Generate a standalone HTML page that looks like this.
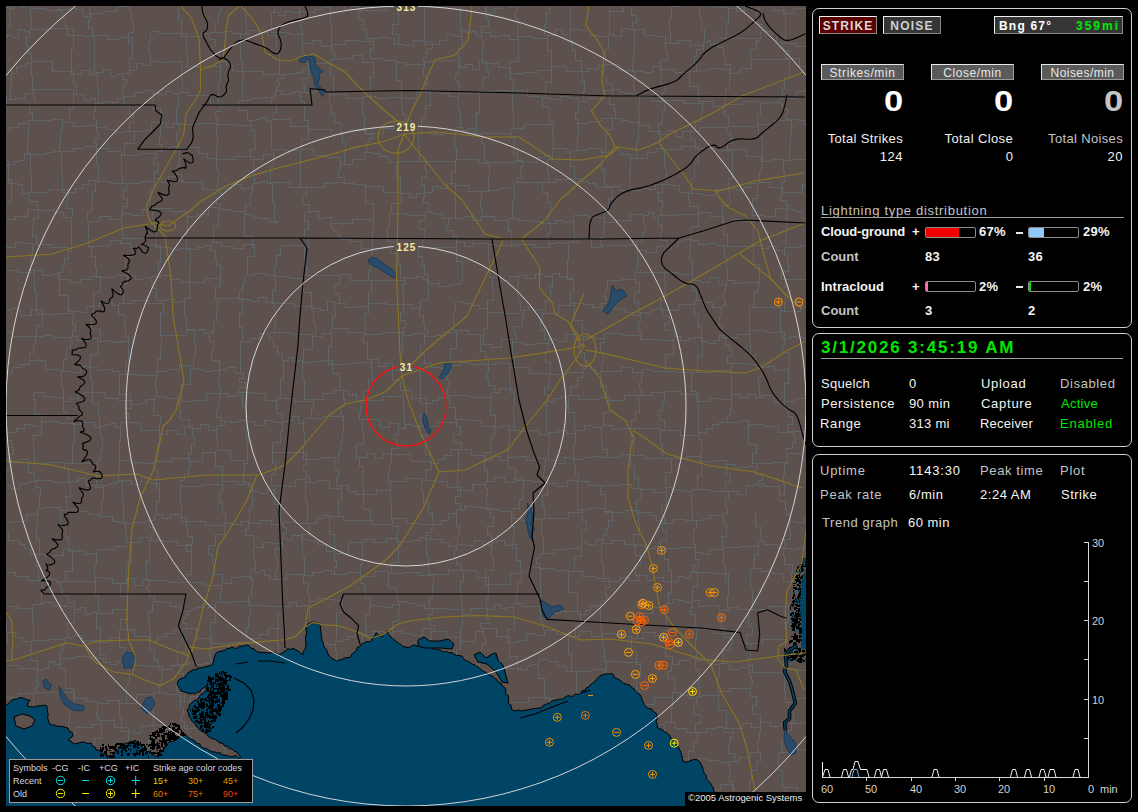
<!DOCTYPE html>
<html><head><meta charset="utf-8">
<style>
*{margin:0;padding:0;box-sizing:border-box}
html,body{width:1138px;height:812px;background:#000;overflow:hidden}
body{position:relative;font-family:"Liberation Sans",sans-serif;color:#fff}
.a{position:absolute;white-space:nowrap}
.panel{position:absolute;left:812px;width:320px;border:1px solid #cfcfcf;border-radius:7px}
.btn{position:absolute;height:18px;border:1px solid;border-color:#f0f0f0 #8a8a8a #8a8a8a #f0f0f0;font-weight:bold;font-size:12px;line-height:16px;padding-top:1px;text-align:center;color:#d8d8d8;white-space:nowrap}
.hdr{position:absolute;top:64px;width:83px;height:16px;background:#5a5a5a;border:1px solid;border-color:#e8e8e8 #999 #999 #e8e8e8;font-size:12px;line-height:14px;padding-top:1px;text-align:center;color:#e8e8e8;white-space:nowrap}
.big{position:absolute;top:83px;font-weight:bold;font-size:30px;line-height:36px;transform:scaleX(1.15);transform-origin:0 0;color:#fff}
.tl{position:absolute;top:131px;width:110px;text-align:right;font-size:13px;line-height:15px;color:#f0f0f0;white-space:nowrap}
.tv{position:absolute;top:149px;width:83px;text-align:right;font-size:13px;line-height:15px;color:#f0f0f0}
.lb{position:absolute;font-size:13px;line-height:15px;white-space:nowrap}
.b{font-weight:bold}
.bar{position:absolute;width:51px;height:11px;border:1px solid #8c8c8c;border-radius:2px;overflow:hidden}
.bar i{position:absolute;left:0;top:0;bottom:0}
.lg{font-size:9px;line-height:12px;white-space:nowrap}
.g{color:#c4c4c4}
.w{color:#f4f4f4}
.grn{color:#00e800}
</style></head>
<body>
<svg class="a" style="left:6px;top:6px" width="800" height="800" viewBox="6 6 800 800">
<rect x="6" y="6" width="800" height="800" fill="#5d514d"/>
<path d="M-27 -30 -8 -30 -8 -29 12 -29 12 -27 M-27 -30 -27 -16 -27 -16 -27 -1 -22 -1 M-22 -1 -6 -1 -6 7 9 7 9 8 M-22 -1 -22 8 -25 8 -25 16 -23 16 -23 25 -26 25 -26 34 -23 34 M-23 34 -8 34 -8 36 7 36 7 35 M-23 34 -23 45 -27 45 -27 55 -30 55 -30 66 -31 66 M-31 66 -17 66 -17 65 -3 65 -3 68 11 68 11 73 M-31 66 -31 73 -31 73 -31 80 -28 80 -28 88 -31 88 -31 95 -31 95 M-31 95 -19 95 -19 96 -6 96 -6 95 6 95 6 99 M-31 95 -31 103 -32 103 -32 111 -34 111 -34 119 -31 119 M-31 119 -21 119 -21 122 -11 122 -11 126 -1 126 -1 129 M-31 119 -31 130 -33 130 -33 140 -25 140 -25 150 -25 150 -25 161 -25 161 M-25 161 -14 161 -14 165 -3 165 -3 160 8 160 8 164 M-25 161 -25 168 -27 168 -27 175 -30 175 -30 182 -30 182 M-30 182 -10 182 -10 179 11 179 11 183 M-30 182 -30 202 -30 202 -30 223 -22 223 M-22 223 -13 223 -13 219 -5 219 -5 221 4 221 4 219 M-22 223 -22 228 -24 228 -24 234 -25 234 -25 239 -27 239 -27 244 -23 244 M-23 244 -18 244 -18 243 -12 243 -12 243 -7 243 -7 241 -2 241 -2 245 M-23 244 -23 252 -20 252 -20 261 -21 261 -21 269 -16 269 M-16 269 -8 269 -8 271 1 271 1 270 M-16 269 -16 286 -14 286 -14 303 -18 303 M-18 303 -14 303 -14 305 -10 305 -10 305 -5 305 -5 306 -1 306 -1 310 M-18 303 -18 310 -20 310 -20 316 -26 316 -26 323 -29 323 -29 330 -30 330 M-30 330 -22 330 -22 332 -15 332 -15 330 -8 330 -8 333 0 333 0 332 M-30 330 -30 344 -30 344 -30 357 -25 357 -25 371 -27 371 M-27 371 -17 371 -17 368 -6 368 -6 371 4 371 4 372 M-27 371 -27 384 -25 384 -25 397 -29 397 M-29 397 -15 397 -15 397 -1 397 -1 395 M-22 424 -15 424 -15 425 -8 425 -8 429 0 429 0 426 7 426 7 432 M-22 424 -22 432 -19 432 -19 441 -26 441 -26 449 -23 449 M-23 449 -6 449 -6 458 11 458 11 462 M-23 449 -23 460 -23 460 -23 470 -25 470 -25 481 -31 481 M-31 481 -14 481 -14 481 2 481 2 485 M-31 481 -31 490 -29 490 -29 498 -26 498 -26 506 -23 506 -23 515 -21 515 M-21 515 -8 515 -8 516 4 516 4 522 M-21 515 -21 523 -25 523 -25 531 -27 531 -27 539 -27 539 -27 547 -27 547 M-27 547 -7 547 -7 540 13 540 13 540 M-27 547 -27 554 -29 554 -29 560 -30 560 -30 566 -25 566 -25 573 -25 573 M-25 573 -18 573 -18 571 -12 571 -12 572 -6 572 -6 571 1 571 1 572 M-25 573 -25 591 -26 591 -26 609 -19 609 M-19 609 -12 609 -12 609 -5 609 -5 609 2 609 2 606 M-19 609 -19 623 -24 623 -24 637 -28 637 M-28 637 -19 637 -19 634 -10 634 -10 632 -2 632 -2 635 7 635 7 632 M-28 637 -28 649 -29 649 -29 660 -23 660 -23 672 -24 672 M-24 672 -24 679 -22 679 -22 686 -21 686 -21 693 -20 693 M-20 693 -8 693 -8 697 4 697 4 697 M-20 693 -20 706 -15 706 -15 720 -16 720 M-16 720 -9 720 -9 725 -2 725 -2 728 6 728 6 729 13 729 13 729 M-16 720 -16 740 -22 740 -22 760 -25 760 M-25 760 -17 760 -17 763 -10 763 -10 757 -2 757 -2 758 6 758 6 758 M-25 760 -25 769 -30 769 -30 777 -31 777 -31 786 -30 786 M-30 786 -10 786 -10 783 9 783 9 779 M-30 786 -30 802 -31 802 -31 819 -31 819 M-31 819 -17 819 -17 820 -2 820 -2 822 12 822 12 820 M-31 819 -31 833 -29 833 -29 847 -20 847 M12 -27 19 -27 19 -23 27 -23 27 -25 34 -25 34 -26 M12 -27 12 -10 11 -10 11 8 9 8 M9 8 14 8 14 4 20 4 20 6 25 6 25 4 30 4 30 8 M9 8 9 17 10 17 10 26 5 26 5 35 7 35 M7 35 12 35 12 37 18 37 18 29 24 29 24 31 29 31 29 29 M11 73 16 73 16 67 21 67 21 65 26 65 26 63 31 63 31 61 M11 73 11 86 10 86 10 99 6 99 M6 99 15 99 15 98 24 98 24 93 33 93 33 89 M6 99 6 106 3 106 3 114 3 114 3 122 0 122 0 129 -1 129 M-1 129 9 129 9 127 18 127 18 123 28 123 28 120 M-1 129 -1 146 2 146 2 164 8 164 M8 164 14 164 14 161 19 161 19 160 24 160 24 153 30 153 30 154 M8 164 8 174 8 174 8 183 11 183 M11 183 17 183 17 184 22 184 22 193 28 193 28 192 M11 183 11 201 5 201 5 219 4 219 M4 219 15 219 15 216 27 216 27 209 38 209 38 210 M4 219 4 228 1 228 1 236 2 236 2 245 -2 245 M-2 245 6 245 6 247 15 247 15 242 24 242 24 243 32 243 32 244 M-2 245 -2 251 -4 251 -4 258 0 258 0 264 -2 264 -2 270 1 270 M1 270 18 270 18 272 34 272 34 270 M1 270 1 283 -2 283 -2 297 1 297 1 310 -1 310 M-1 310 10 310 10 308 20 308 20 315 31 315 31 309 42 309 42 314 M-1 310 -1 316 -4 316 -4 321 -1 321 -1 326 4 326 4 332 0 332 M0 332 12 332 12 336 23 336 23 336 35 336 35 336 M0 332 0 345 3 345 3 359 1 359 1 372 4 372 M4 372 12 372 12 367 21 367 21 364 29 364 29 360 M4 372 4 380 -2 380 -2 387 3 387 3 395 -1 395 M-1 395 -1 407 -1 407 -1 420 3 420 3 432 7 432 M7 432 16 432 16 428 24 428 24 424 32 424 32 426 41 426 41 421 M7 432 7 440 11 440 11 447 13 447 13 454 8 454 8 462 11 462 M11 462 20 462 20 459 28 459 28 463 M11 462 11 470 6 470 6 477 5 477 5 485 2 485 M2 485 10 485 10 488 19 488 19 483 28 483 28 481 36 481 36 480 M2 485 2 497 2 497 2 510 0 510 0 522 4 522 M4 522 15 522 15 521 26 521 26 514 37 514 37 508 M4 522 4 531 8 531 8 540 13 540 M13 540 19 540 19 544 24 544 24 548 30 548 30 554 36 554 36 554 M1 572 15 572 15 576 28 576 28 580 42 580 42 579 M1 572 1 580 1 580 1 589 4 589 4 598 -1 598 -1 606 2 606 M2 606 17 606 17 608 32 608 32 604 M2 606 2 619 6 619 6 632 7 632 M7 632 15 632 15 637 23 637 23 641 31 641 31 640 M7 632 7 643 5 643 5 654 1 654 1 665 -2 665 M-2 665 18 665 18 668 37 668 37 670 M-2 665 -2 681 -3 681 -3 697 4 697 M4 697 18 697 18 693 33 693 33 692 M13 729 27 729 27 733 41 733 41 734 M13 729 13 744 8 744 8 758 6 758 M6 758 24 758 24 763 42 763 42 761 M6 758 6 768 8 768 8 779 9 779 M9 779 25 779 25 782 41 782 41 790 M9 779 9 789 8 789 8 800 12 800 12 810 12 810 12 820 12 820 M12 820 12 830 13 830 13 841 9 841 9 851 12 851 M34 -26 40 -26 40 -30 46 -30 46 -30 52 -30 52 -30 58 -30 58 -28 M34 -26 34 -15 34 -15 34 -3 34 -3 34 8 30 8 M30 8 46 8 46 10 62 10 62 9 M30 8 30 18 31 18 31 29 29 29 M29 29 51 29 51 28 73 28 73 35 M29 29 29 37 26 37 26 45 28 45 28 53 31 53 31 61 31 61 M31 61 52 61 52 71 73 71 73 74 M31 61 31 75 32 75 32 89 33 89 M33 89 53 89 53 89 73 89 73 94 M33 89 33 97 35 97 35 104 29 104 29 112 32 112 32 120 28 120 M28 120 39 120 39 120 51 120 51 119 62 119 62 122 M28 120 28 137 27 137 27 154 30 154 M30 154 38 154 38 154 46 154 46 152 53 152 53 151 61 151 61 151 M30 154 30 173 31 173 31 192 28 192 M28 192 48 192 48 189 68 189 68 192 M28 192 28 201 37 201 37 210 38 210 M38 210 46 210 46 210 54 210 54 212 63 212 63 217 71 217 71 216 M38 210 38 218 33 218 33 227 32 227 32 236 36 236 36 244 32 244 M32 244 50 244 50 247 68 247 68 251 M32 244 32 253 31 253 31 261 30 261 30 270 34 270 M34 270 42 270 42 275 51 275 51 274 59 274 59 279 M34 270 34 292 36 292 36 314 42 314 M42 314 58 314 58 313 73 313 73 311 M42 314 42 325 36 325 36 336 35 336 M35 336 44 336 44 335 52 335 52 337 61 337 61 337 70 337 70 336 M35 336 35 344 33 344 33 352 29 352 29 360 29 360 M29 360 45 360 45 369 61 369 61 371 M33 392 43 392 43 396 53 396 53 397 63 397 63 401 M33 392 33 399 35 399 35 406 34 406 34 414 41 414 41 421 41 421 M41 421 58 421 58 423 74 423 74 424 M41 421 41 435 33 435 33 449 34 449 34 463 28 463 M28 463 46 463 46 462 64 462 64 463 M28 463 28 472 34 472 34 480 36 480 M36 480 53 480 53 482 70 482 70 481 M36 480 36 487 40 487 40 494 39 494 39 501 39 501 39 508 37 508 M37 508 43 508 43 507 48 507 48 507 54 507 54 507 60 507 60 510 M37 508 37 523 36 523 36 539 39 539 39 554 36 554 M36 554 45 554 45 556 54 556 54 555 63 555 63 549 72 549 72 551 M36 554 36 566 38 566 38 579 42 579 M42 579 46 579 46 578 51 578 51 579 56 579 56 582 60 582 60 581 M42 579 42 592 41 592 41 604 32 604 M32 604 42 604 42 602 53 602 53 605 64 605 64 606 74 606 74 609 M32 604 32 622 33 622 33 640 31 640 M31 640 48 640 48 639 64 639 64 637 M31 640 31 650 30 650 30 660 37 660 37 670 37 670 M37 670 43 670 43 668 48 668 48 661 54 661 54 664 60 664 60 658 M37 670 37 676 36 676 36 681 38 681 38 686 35 686 35 692 33 692 M33 692 54 692 54 692 74 692 74 698 M33 692 33 702 33 702 33 713 33 713 33 724 42 724 42 734 41 734 M41 734 54 734 54 737 66 737 66 733 M41 734 41 748 44 748 44 761 42 761 M42 761 50 761 50 763 57 763 57 758 65 758 65 762 M42 761 42 771 46 771 46 780 42 780 42 790 41 790 M41 790 48 790 48 784 56 784 56 789 64 789 64 783 71 783 71 781 M32 816 40 816 40 817 47 817 47 817 54 817 54 815 62 815 62 813 M32 816 32 822 34 822 34 827 32 827 32 832 34 832 34 838 34 838 M58 -28 75 -28 75 -27 92 -27 92 -25 M58 -28 58 -19 62 -19 62 -10 60 -10 60 0 58 0 58 9 62 9 M62 9 69 9 69 8 76 8 76 9 83 9 83 16 90 16 90 13 M62 9 62 18 65 18 65 26 67 26 67 35 73 35 M73 35 84 35 84 36 94 36 94 35 M73 35 73 48 71 48 71 61 71 61 71 74 73 74 M73 74 81 74 81 70 89 70 89 74 97 74 97 72 M73 74 73 84 76 84 76 94 73 94 M73 94 78 94 78 94 84 94 84 100 90 100 90 98 95 98 95 103 M73 94 73 108 69 108 69 122 62 122 M62 122 73 122 73 126 85 126 85 125 96 125 96 127 M62 122 62 129 60 129 60 136 60 136 60 144 59 144 59 151 61 151 M61 151 73 151 73 148 84 148 84 146 96 146 96 148 M61 151 61 172 62 172 62 192 68 192 M68 192 75 192 75 188 82 188 82 184 88 184 88 180 95 180 95 181 M68 192 68 200 66 200 66 208 72 208 72 216 71 216 M71 216 71 234 71 234 71 251 68 251 M68 251 68 258 64 258 64 265 62 265 62 272 58 272 58 279 59 279 M59 279 69 279 69 282 80 282 80 279 90 279 90 276 100 276 100 277 M59 279 59 295 68 295 68 311 73 311 M73 311 80 311 80 312 86 312 86 306 93 306 93 306 M73 311 73 317 72 317 72 324 75 324 75 330 72 330 72 336 70 336 M70 336 77 336 77 340 84 340 84 340 90 340 90 338 97 338 97 341 M70 336 70 348 66 348 66 359 63 359 63 371 61 371 M61 371 71 371 71 372 80 372 80 366 90 366 90 367 M61 371 61 386 63 386 63 401 63 401 M63 401 70 401 70 398 78 398 78 393 85 393 85 392 92 392 92 392 M63 401 63 407 63 407 63 412 67 412 67 418 72 418 72 424 74 424 M74 424 80 424 80 422 87 422 87 422 94 422 94 427 100 427 100 426 M74 424 74 444 72 444 72 463 64 463 M64 463 80 463 80 463 97 463 97 460 M64 463 64 468 68 468 68 472 69 472 69 476 68 476 68 481 70 481 M70 481 78 481 78 478 86 478 86 485 95 485 95 487 103 487 103 485 M70 481 70 496 66 496 66 510 60 510 M60 510 70 510 70 509 79 509 79 511 88 511 88 514 98 514 98 516 M60 510 60 524 65 524 65 537 68 537 68 551 72 551 M72 551 78 551 78 550 84 550 84 554 90 554 90 553 96 553 96 549 M72 551 72 561 72 561 72 571 65 571 65 581 60 581 M60 581 78 581 78 581 95 581 95 577 M60 581 60 588 62 588 62 595 68 595 68 602 74 602 74 609 74 609 M74 609 80 609 80 607 85 607 85 614 90 614 90 612 96 612 96 613 M74 609 74 623 67 623 67 637 64 637 M64 637 73 637 73 635 82 635 82 641 90 641 90 640 99 640 99 642 M64 637 64 644 62 644 62 651 59 651 59 658 60 658 M60 658 74 658 74 656 89 656 89 658 103 658 103 662 M60 658 60 668 65 668 65 678 65 678 65 688 73 688 73 698 74 698 M74 698 86 698 86 701 97 701 97 703 M74 698 74 710 69 710 69 721 68 721 68 733 66 733 M66 733 75 733 75 727 84 727 84 727 92 727 92 724 101 724 101 720 M66 733 66 743 67 743 67 752 68 752 68 762 65 762 M65 762 71 762 71 761 78 761 78 760 84 760 84 759 90 759 90 755 M65 762 65 767 67 767 67 772 68 772 68 776 71 776 71 781 71 781 M71 781 80 781 80 782 89 782 89 782 M71 781 71 797 65 797 65 813 62 813 M62 813 71 813 71 813 80 813 80 816 89 816 89 819 M62 813 62 822 66 822 66 830 62 830 62 838 59 838 59 847 62 847 M92 -25 106 -25 106 -22 120 -22 120 -21 M92 -25 92 -16 88 -16 88 -6 93 -6 93 4 89 4 89 13 90 13 M90 13 103 13 103 11 116 11 116 6 129 6 129 0 M90 13 90 20 88 20 88 28 92 28 92 35 94 35 M94 35 107 35 107 39 119 39 119 37 132 37 132 43 M94 35 94 54 94 54 94 72 97 72 M97 72 103 72 103 69 110 69 110 76 116 76 116 74 122 74 122 73 M97 72 97 88 98 88 98 103 95 103 M95 103 102 103 102 101 110 101 110 102 117 102 117 98 124 98 124 96 M95 103 95 111 93 111 93 119 96 119 96 127 96 127 M96 127 106 127 106 129 115 129 115 132 124 132 124 131 134 131 134 131 M96 127 96 132 98 132 98 138 94 138 94 143 96 143 96 148 96 148 M96 148 108 148 108 151 121 151 121 155 M96 148 96 164 98 164 98 181 95 181 M95 181 110 181 110 183 126 183 126 183 M95 181 95 191 92 191 92 201 91 201 91 211 87 211 87 221 88 221 M88 221 99 221 99 216 110 216 110 219 121 219 121 213 M88 221 88 229 88 229 88 238 88 238 88 246 91 246 M91 246 101 246 101 245 110 245 110 240 120 240 120 243 130 243 130 238 M91 246 91 256 95 256 95 267 96 267 96 277 100 277 M100 277 114 277 114 275 127 275 127 275 M100 277 100 292 93 292 93 306 93 306 M93 306 99 306 99 302 106 302 106 302 112 302 112 305 118 305 118 303 M93 306 93 318 91 318 91 329 100 329 100 341 97 341 M97 341 105 341 105 340 112 340 112 342 120 342 120 341 128 341 128 336 M97 341 97 348 98 348 98 354 90 354 90 360 89 360 89 367 90 367 M90 367 97 367 97 370 104 370 104 369 112 369 112 371 119 371 119 374 M90 367 90 380 92 380 92 392 92 392 M92 392 105 392 105 398 118 398 118 400 131 400 131 404 M92 392 92 403 98 403 98 415 99 415 99 426 100 426 M100 426 105 426 105 424 110 424 110 423 115 423 115 427 120 427 120 422 M100 426 100 437 102 437 102 449 100 449 100 460 97 460 M97 460 97 472 96 472 96 485 103 485 M103 485 109 485 109 483 116 483 116 481 122 481 122 480 M103 485 103 500 101 500 101 516 98 516 M98 516 105 516 105 516 112 516 112 521 118 521 118 522 125 522 125 523 M96 549 114 549 114 546 131 546 131 542 M96 549 96 563 94 563 94 577 95 577 M95 577 103 577 103 578 112 578 112 583 120 583 120 583 M95 577 95 595 98 595 98 613 96 613 M96 613 112 613 112 609 127 609 127 609 M96 613 96 628 100 628 100 642 99 642 M99 642 109 642 109 637 119 637 119 629 M99 642 99 649 100 649 100 655 105 655 105 662 103 662 M103 662 110 662 110 664 116 664 116 661 122 661 122 666 129 666 129 665 M97 703 108 703 108 700 119 700 119 703 M97 703 97 707 97 707 97 712 96 712 96 716 98 716 98 720 101 720 M101 720 114 720 114 727 128 727 128 731 M101 720 101 738 94 738 94 755 90 755 M90 755 104 755 104 760 119 760 119 762 M90 755 90 762 92 762 92 768 87 768 87 775 92 775 92 782 89 782 M89 782 104 782 104 788 119 788 119 792 M89 782 89 794 93 794 93 807 88 807 88 819 89 819 M89 819 89 836 98 836 98 852 101 852 M120 -21 131 -21 131 -28 141 -28 141 -26 152 -26 152 -30 M120 -21 120 -14 120 -14 120 -7 122 -7 122 0 129 0 M129 0 136 0 136 3 142 3 142 -2 149 -2 149 4 156 4 156 2 M129 0 129 11 131 11 131 22 133 22 133 32 128 32 128 43 132 43 M132 43 132 58 129 58 129 73 122 73 M122 73 129 73 129 70 136 70 136 63 142 63 142 65 149 65 149 61 M122 73 122 79 126 79 126 84 123 84 123 90 122 90 122 96 124 96 M124 96 134 96 134 92 143 92 143 90 153 90 153 93 M124 96 124 105 129 105 129 114 133 114 133 122 129 122 129 131 134 131 M134 131 143 131 143 130 151 130 151 122 160 122 160 123 M134 131 134 143 124 143 124 155 121 155 M121 155 138 155 138 153 156 153 156 151 M121 155 121 162 121 162 121 169 121 169 121 176 122 176 122 183 126 183 M126 183 140 183 140 181 154 181 154 178 M126 183 126 190 123 190 123 198 127 198 127 206 122 206 122 213 121 213 M121 213 131 213 131 215 142 215 142 209 152 209 152 208 M121 213 121 226 122 226 122 238 130 238 M130 238 145 238 145 245 160 245 160 247 M130 238 130 247 132 247 132 256 125 256 125 266 128 266 128 275 127 275 M127 275 135 275 135 279 143 279 143 277 151 277 151 276 M127 275 127 284 120 284 120 294 123 294 123 303 118 303 M118 303 133 303 133 300 148 300 148 303 163 303 163 300 M118 303 118 314 124 314 124 325 125 325 125 336 128 336 M128 336 128 349 128 349 128 361 125 361 125 374 119 374 M119 374 138 374 138 375 156 375 156 371 M119 374 119 384 119 384 119 394 130 394 130 404 131 404 M131 404 139 404 139 403 146 403 146 399 154 399 154 396 M131 404 131 408 125 408 125 413 128 413 128 418 126 418 126 422 120 422 M120 422 140 422 140 430 159 430 159 434 M120 422 120 441 119 441 119 460 119 460 M119 460 130 460 130 462 142 462 142 463 153 463 153 461 M119 460 119 470 118 470 118 480 122 480 M122 480 131 480 131 484 140 484 140 481 150 481 150 483 159 483 159 488 M122 480 122 502 123 502 123 523 125 523 M125 523 132 523 132 522 140 522 140 522 147 522 147 520 154 520 154 514 M125 523 125 532 126 532 126 542 131 542 M131 542 140 542 140 537 149 537 149 540 M131 542 131 562 126 562 126 583 120 583 M120 583 127 583 127 578 134 578 134 585 142 585 142 579 149 579 149 580 M120 583 120 596 127 596 127 609 127 609 M127 609 127 619 120 619 120 629 119 629 M119 629 134 629 134 636 149 636 149 641 M119 629 119 647 124 647 124 665 129 665 M129 665 146 665 146 666 162 666 162 669 M129 665 129 684 126 684 126 703 119 703 M119 703 136 703 136 694 153 694 153 692 M119 703 119 717 121 717 121 731 128 731 M128 731 134 731 134 733 140 733 140 726 147 726 147 725 153 725 153 725 M128 731 128 741 125 741 125 752 122 752 122 762 119 762 M119 762 127 762 127 762 135 762 135 758 143 758 143 755 151 755 151 755 M119 762 119 777 118 777 118 792 119 792 M119 792 130 792 130 795 141 795 141 796 152 796 152 793 M119 792 119 802 123 802 123 813 125 813 M125 813 138 813 138 816 151 816 151 818 164 818 164 817 M152 -30 160 -30 160 -32 168 -32 168 -25 175 -25 175 -25 183 -25 183 -26 M152 -30 152 -14 153 -14 153 2 156 2 M156 2 162 2 162 4 167 4 167 3 172 3 172 2 178 2 178 4 M150 31 159 31 159 33 168 33 168 33 177 33 177 33 186 33 186 36 M150 31 150 41 148 41 148 51 150 51 150 61 149 61 M149 61 160 61 160 62 170 62 170 61 181 61 181 66 M153 93 159 93 159 94 166 94 166 91 172 91 172 93 178 93 178 92 M153 93 153 108 160 108 160 123 160 123 M160 123 166 123 166 127 173 127 173 123 179 123 179 124 M160 123 160 130 160 130 160 137 159 137 159 144 161 144 161 151 156 151 M156 151 162 151 162 149 168 149 168 147 173 147 173 146 179 146 179 148 M156 151 156 158 153 158 153 164 158 164 158 171 154 171 154 178 154 178 M154 178 161 178 161 182 168 182 168 176 176 176 176 180 183 180 183 182 M154 178 154 188 150 188 150 198 150 198 150 208 152 208 M152 208 170 208 170 211 187 211 187 216 M152 208 152 218 154 218 154 228 156 228 156 237 155 237 155 247 160 247 M160 247 170 247 170 249 180 249 180 248 190 248 190 249 M160 247 160 262 158 262 158 276 151 276 M151 276 160 276 160 275 170 275 170 279 180 279 180 282 189 282 189 282 M151 276 151 282 153 282 153 288 156 288 156 294 156 294 156 300 163 300 M163 300 168 300 168 299 174 299 174 302 179 302 179 301 184 301 184 303 M163 300 163 312 160 312 160 323 160 323 160 335 161 335 M161 335 169 335 169 335 178 335 178 335 186 335 186 329 194 329 194 330 M161 335 161 347 160 347 160 359 157 359 157 371 156 371 M156 371 167 371 167 369 179 369 179 365 190 365 190 368 M156 371 156 379 155 379 155 388 156 388 156 396 154 396 M154 396 166 396 166 398 179 398 179 401 M154 396 154 406 153 406 153 415 160 415 160 424 159 424 159 434 159 434 M159 434 167 434 167 430 176 430 176 434 184 434 184 426 192 426 192 428 M159 434 159 443 157 443 157 452 155 452 155 461 153 461 M153 461 172 461 172 458 190 458 190 461 M153 461 153 470 157 470 157 479 156 479 156 488 159 488 M159 488 159 501 156 501 156 514 154 514 M154 514 162 514 162 518 170 518 170 514 178 514 178 517 186 517 186 521 M154 514 154 520 149 520 149 527 153 527 153 534 151 534 151 540 149 540 M149 540 163 540 163 541 177 541 177 545 191 545 191 551 M149 540 149 560 146 560 146 580 149 580 M149 580 168 580 168 582 187 582 187 582 M149 580 149 585 147 585 147 590 149 590 149 596 154 596 154 601 152 601 M152 601 161 601 161 602 170 602 170 606 180 606 180 611 189 611 189 609 M152 601 152 611 148 611 148 621 149 621 149 631 150 631 150 641 149 641 M149 641 157 641 157 636 166 636 166 633 174 633 174 630 182 630 182 628 M149 641 149 650 154 650 154 660 158 660 158 669 162 669 M162 669 171 669 171 665 180 665 180 664 M162 669 162 677 161 677 161 684 159 684 159 692 153 692 M153 692 166 692 166 694 180 694 180 701 M153 692 153 700 152 700 152 708 153 708 153 717 153 717 153 725 153 725 M153 725 164 725 164 729 176 729 176 726 187 726 187 728 M153 725 153 732 153 732 153 740 148 740 148 748 150 748 150 755 151 755 M151 755 163 755 163 760 176 760 176 760 188 760 188 759 M151 755 151 774 154 774 154 793 152 793 M152 793 160 793 160 787 169 787 169 789 178 789 178 783 186 783 186 778 M152 793 152 799 155 799 155 805 161 805 161 811 157 811 157 817 164 817 M164 817 171 817 171 815 178 815 178 816 184 816 184 822 191 822 191 820 M164 817 164 829 157 829 157 841 159 841 159 853 152 853 M183 -26 201 -26 201 -29 219 -29 219 -31 M183 -26 183 -18 184 -18 184 -11 183 -11 183 -4 180 -4 180 4 178 4 M178 4 188 4 188 1 199 1 199 0 210 0 210 -1 220 -1 220 2 M178 4 178 20 181 20 181 36 186 36 M186 36 194 36 194 36 201 36 201 33 209 33 209 32 M186 36 186 51 187 51 187 66 181 66 M181 66 200 66 200 66 220 66 220 61 M181 66 181 79 182 79 182 92 178 92 M178 92 188 92 188 95 199 95 199 95 210 95 210 104 220 104 220 104 M178 92 178 108 176 108 176 124 179 124 M179 124 198 124 198 123 216 123 216 124 M179 124 179 132 176 132 176 140 177 140 177 148 179 148 M179 148 188 148 188 147 198 147 198 153 207 153 207 158 216 158 216 159 M179 148 179 156 179 156 179 165 177 165 177 174 181 174 181 182 183 182 M183 182 202 182 202 189 220 189 220 188 M187 216 197 216 197 214 208 214 208 207 218 207 218 209 M187 216 187 232 186 232 186 249 190 249 M190 249 197 249 197 247 203 247 203 245 210 245 210 242 M190 249 190 266 189 266 189 282 189 282 M189 282 204 282 204 278 220 278 220 273 M189 282 189 287 189 287 189 292 190 292 190 298 184 298 184 303 184 303 M184 303 184 316 186 316 186 330 194 330 M194 330 199 330 199 329 204 329 204 333 209 333 209 332 M194 330 194 343 195 343 195 355 193 355 193 368 190 368 M190 368 197 368 197 369 204 369 204 371 212 371 212 370 219 370 219 369 M190 368 190 384 181 384 181 401 179 401 M179 401 192 401 192 400 206 400 206 393 219 393 219 393 M179 401 179 410 180 410 180 419 189 419 189 428 192 428 M192 428 200 428 200 424 208 424 208 430 216 430 216 425 M192 428 192 436 194 436 194 444 191 444 191 453 188 453 188 461 190 461 M190 461 202 461 202 452 215 452 215 450 M190 461 190 467 188 467 188 474 184 474 184 480 180 480 180 486 180 486 M180 486 201 486 201 484 222 484 222 481 M180 486 180 504 181 504 181 521 186 521 M186 521 205 521 205 525 224 525 224 523 M186 521 186 528 187 528 187 536 192 536 192 544 186 544 186 551 191 551 M191 551 191 559 191 559 191 566 191 566 191 574 186 574 186 582 187 582 M187 582 204 582 204 585 221 585 221 583 M189 609 196 609 196 607 202 607 202 604 208 604 208 607 215 607 215 602 M189 609 189 614 185 614 185 618 183 618 183 623 186 623 186 628 182 628 M182 628 196 628 196 638 211 638 211 643 M182 628 182 640 185 640 185 652 177 652 177 664 180 664 M180 664 188 664 188 662 196 662 196 664 203 664 203 663 211 663 211 667 M180 664 180 673 183 673 183 682 176 682 176 692 184 692 184 701 180 701 M180 701 190 701 190 696 200 696 200 700 210 700 210 696 M180 701 180 708 183 708 183 714 181 714 181 721 184 721 184 728 187 728 M187 728 205 728 205 727 223 727 223 720 M187 728 187 736 191 736 191 744 191 744 191 751 190 751 190 759 188 759 M188 759 199 759 199 758 210 758 210 756 221 756 221 756 M188 759 188 764 189 764 189 768 185 768 185 773 188 773 188 778 186 778 M186 778 198 778 198 778 210 778 210 787 222 787 222 789 M186 778 186 799 191 799 191 820 191 820 M191 820 196 820 196 820 202 820 202 819 207 819 207 823 212 823 212 822 M191 820 191 834 190 834 190 847 186 847 M219 -31 224 -31 224 -29 228 -29 228 -28 233 -28 233 -23 238 -23 238 -24 M219 -31 219 -23 218 -23 218 -14 223 -14 223 -6 220 -6 220 2 220 2 M220 2 220 12 218 12 218 22 215 22 215 32 209 32 M209 32 217 32 217 32 224 32 224 31 232 31 232 33 240 33 240 34 M209 32 209 39 215 39 215 46 211 46 211 54 219 54 219 61 220 61 M220 61 226 61 226 65 232 65 232 70 237 70 237 71 243 71 243 71 M220 61 220 82 218 82 218 104 220 104 M220 104 226 104 226 104 232 104 232 105 238 105 238 100 M220 104 220 111 215 111 215 117 217 117 217 124 216 124 M216 124 234 124 234 125 251 125 251 120 M216 124 216 136 217 136 217 147 216 147 216 159 216 159 M216 159 234 159 234 156 253 156 253 159 M216 159 216 169 218 169 218 178 217 178 217 188 220 188 M220 188 231 188 231 184 241 184 241 188 252 188 252 183 M220 188 220 193 222 193 222 198 216 198 216 204 220 204 220 209 218 209 M218 209 231 209 231 211 244 211 244 214 M218 209 218 226 213 226 213 242 210 242 M210 242 221 242 221 246 232 246 232 248 243 248 243 244 254 244 254 247 M210 242 210 250 215 250 215 258 216 258 216 265 220 265 220 273 220 273 M220 273 220 286 215 286 215 298 217 298 M217 298 230 298 230 298 242 298 242 299 M217 298 217 309 216 309 216 321 213 321 213 332 209 332 M209 332 209 341 213 341 213 350 211 350 211 360 219 360 219 369 219 369 M219 369 227 369 227 367 235 367 235 373 243 373 243 373 M219 369 219 377 218 377 218 385 220 385 220 393 219 393 M219 393 227 393 227 396 234 396 234 395 242 395 242 392 M219 393 219 401 218 401 218 409 216 409 216 417 221 417 221 425 216 425 M216 425 224 425 224 421 231 421 231 422 238 422 238 420 246 420 246 421 M216 425 216 438 217 438 217 450 215 450 M215 450 230 450 230 460 244 460 244 463 M215 450 215 466 222 466 222 481 222 481 M222 481 237 481 237 484 252 484 252 491 M222 481 222 492 219 492 219 502 222 502 222 512 225 512 225 523 224 523 M224 523 232 523 232 524 240 524 240 521 248 521 248 523 M224 523 224 534 215 534 215 545 208 545 M208 545 208 554 212 554 212 564 214 564 214 574 222 574 222 583 221 583 M221 583 231 583 231 577 240 577 240 576 250 576 250 569 M221 583 221 592 220 592 220 602 215 602 M215 602 232 602 232 601 250 601 250 605 M215 602 215 622 210 622 210 643 211 643 M211 643 230 643 230 642 250 642 250 638 M211 643 211 649 209 649 209 655 210 655 210 661 215 661 215 667 211 667 M211 667 211 677 214 677 214 686 210 686 210 696 210 696 M210 696 224 696 224 693 239 693 239 693 253 693 253 690 M210 696 210 704 213 704 213 712 222 712 222 720 223 720 M223 720 234 720 234 725 246 725 246 723 M223 720 223 729 225 729 225 738 223 738 223 747 224 747 224 756 221 756 M221 756 232 756 232 756 243 756 243 760 M221 756 221 764 222 764 222 772 223 772 223 781 224 781 224 789 222 789 M222 789 233 789 233 788 243 788 243 783 254 783 254 782 M222 789 222 797 216 797 216 806 217 806 217 814 211 814 211 822 212 822 M212 822 221 822 221 820 230 820 230 816 239 816 239 819 248 819 248 813 M212 822 212 830 217 830 217 838 216 838 M238 -24 254 -24 254 -24 271 -24 271 -29 M238 -24 238 -15 243 -15 243 -6 244 -6 244 3 245 3 M245 3 245 18 246 18 246 34 240 34 M240 34 249 34 249 30 258 30 258 32 267 32 267 35 276 35 276 32 M240 34 240 46 240 46 240 59 242 59 242 71 243 71 M243 71 263 71 263 74 283 74 283 74 M243 71 243 78 242 78 242 86 242 86 242 93 242 93 242 100 238 100 M238 100 250 100 250 98 263 98 263 97 275 97 275 90 M238 100 238 110 247 110 247 120 251 120 M251 120 256 120 256 119 261 119 261 117 266 117 266 121 271 121 271 119 M251 120 251 130 254 130 254 140 255 140 255 149 250 149 250 159 253 159 M253 159 263 159 263 154 273 154 273 149 M253 159 253 171 254 171 254 183 252 183 M252 183 257 183 257 182 262 182 262 181 267 181 267 183 272 183 272 182 M252 183 252 193 250 193 250 204 245 204 245 214 244 214 M244 214 252 214 252 217 260 217 260 218 269 218 269 221 277 221 277 222 M244 214 244 225 244 225 244 236 252 236 252 247 254 247 M254 247 254 256 247 256 247 266 247 266 247 275 244 275 M244 275 254 275 254 273 265 273 265 275 275 275 275 276 M244 275 244 283 242 283 242 291 239 291 239 299 242 299 M242 299 250 299 250 301 258 301 258 297 266 297 266 302 274 302 274 303 M242 299 242 313 239 313 239 327 242 327 242 341 240 341 M240 341 250 341 250 338 259 338 259 333 269 333 269 332 M240 341 240 357 240 357 240 373 243 373 M243 373 243 378 239 378 239 382 245 382 245 387 238 387 238 392 242 392 M242 392 253 392 253 393 265 393 265 400 276 400 276 398 M242 392 242 406 245 406 245 421 246 421 M246 421 255 421 255 425 264 425 264 420 273 420 273 422 282 422 282 421 M246 421 246 442 247 442 247 463 244 463 M244 463 244 472 243 472 243 482 249 482 249 491 252 491 M252 491 259 491 259 493 267 493 267 490 274 490 274 485 M252 491 252 507 249 507 249 523 248 523 M248 523 260 523 260 520 271 520 271 524 283 524 283 522 M248 523 248 529 245 529 245 535 253 535 253 541 254 541 254 547 253 547 M253 547 263 547 263 542 272 542 272 543 282 543 282 538 M253 547 253 554 254 554 254 562 255 562 255 569 250 569 M250 569 255 569 255 572 260 572 260 570 264 570 264 575 269 575 269 579 M250 569 250 578 252 578 252 587 251 587 251 596 248 596 248 605 250 605 M250 605 266 605 266 606 282 606 282 606 M250 605 250 616 248 616 248 627 246 627 246 638 250 638 M250 638 259 638 259 634 268 634 268 628 277 628 277 628 M250 638 250 648 245 648 245 659 243 659 M243 659 253 659 253 666 264 666 264 668 274 668 274 673 M253 690 262 690 262 694 272 694 272 701 281 701 281 702 M253 690 253 706 250 706 250 723 246 723 M246 723 259 723 259 720 271 720 271 720 284 720 284 722 M246 723 246 742 246 742 246 760 243 760 M254 782 260 782 260 786 265 786 265 783 270 783 270 790 276 790 276 789 M254 782 254 798 247 798 247 813 248 813 M248 813 257 813 257 815 266 815 266 813 274 813 274 821 283 821 283 820 M271 -29 288 -29 288 -28 305 -28 305 -23 M271 -29 271 -8 274 -8 274 12 271 12 M271 12 278 12 278 15 285 15 285 11 292 11 292 12 299 12 299 11 M271 12 271 22 271 22 271 32 276 32 M276 32 289 32 289 34 302 34 302 43 M276 32 276 53 279 53 279 74 283 74 M283 74 289 74 289 73 296 73 296 72 302 72 302 68 308 68 308 63 M283 74 283 78 277 78 277 82 279 82 279 86 276 86 276 90 275 90 M275 90 281 90 281 94 288 94 288 93 294 93 294 91 300 91 300 92 M275 90 275 97 271 97 271 104 276 104 276 112 273 112 273 119 271 119 M271 119 290 119 290 126 308 126 308 129 M271 119 271 134 271 134 271 149 273 149 M273 149 286 149 286 150 300 150 300 149 M273 149 273 166 270 166 270 182 272 182 M272 182 289 182 289 187 306 187 306 187 M272 182 272 202 274 202 274 222 277 222 M280 245 294 245 294 245 308 245 308 238 M280 245 280 255 276 255 276 266 274 266 274 276 275 276 M275 276 289 276 289 278 303 278 303 275 M275 276 275 290 272 290 272 303 274 303 M274 303 294 303 294 306 313 306 313 308 M274 303 274 310 275 310 275 318 275 318 275 325 274 325 274 332 269 332 M269 332 290 332 290 334 312 334 312 336 M269 332 269 339 273 339 273 346 277 346 277 353 282 353 282 360 283 360 M283 360 288 360 288 357 292 357 292 361 297 361 297 360 302 360 302 362 M283 360 283 379 280 379 280 398 276 398 M276 398 294 398 294 401 313 401 313 399 M276 398 276 406 276 406 276 413 282 413 282 421 282 421 M282 421 287 421 287 420 292 420 292 416 298 416 298 423 303 423 303 418 M282 421 282 431 280 431 280 442 272 442 272 452 272 452 M272 452 289 452 289 452 306 452 306 459 M272 452 272 463 275 463 275 474 271 474 271 485 274 485 M274 485 284 485 284 486 295 486 295 479 305 479 305 482 M274 485 274 504 280 504 280 522 283 522 M283 522 296 522 296 523 309 523 309 523 M283 522 283 527 286 527 286 533 283 533 283 538 282 538 M282 538 287 538 287 540 292 540 292 535 297 535 297 535 302 535 302 539 M282 538 282 548 275 548 275 558 277 558 277 569 275 569 275 579 269 579 M269 579 286 579 286 574 303 574 303 575 M282 606 289 606 289 602 296 602 296 606 302 606 302 605 309 605 309 601 M282 606 282 613 277 613 277 621 278 621 278 628 277 628 M277 628 277 643 278 643 278 658 278 658 278 673 274 673 M274 673 274 683 279 683 279 692 275 692 275 702 281 702 M281 702 292 702 292 697 303 697 303 699 314 699 314 693 M281 702 281 709 278 709 278 715 285 715 285 722 284 722 M284 722 293 722 293 724 302 724 302 722 311 722 311 722 M284 722 284 731 279 731 279 741 273 741 273 750 270 750 M270 750 286 750 286 759 302 759 302 760 M270 750 270 760 268 760 268 770 274 770 274 779 272 779 272 789 276 789 M276 789 283 789 283 792 290 792 290 795 296 795 296 789 303 789 303 793 M276 789 276 799 280 799 280 810 284 810 284 820 283 820 M283 820 291 820 291 819 298 819 298 818 306 818 306 811 M283 820 283 830 282 830 282 840 277 840 277 850 278 850 M305 -23 305 -12 301 -12 301 0 299 0 299 11 299 11 M299 11 307 11 307 12 314 12 314 9 322 9 322 7 330 7 330 4 M299 11 299 19 300 19 300 27 302 27 302 35 302 35 302 43 302 43 M302 43 312 43 312 40 321 40 321 46 331 46 331 44 M302 43 302 53 304 53 304 63 308 63 M308 63 319 63 319 63 330 63 330 59 M308 63 308 70 308 70 308 78 302 78 302 85 304 85 304 92 300 92 M300 92 314 92 314 91 329 91 329 94 M300 92 300 101 304 101 304 110 304 110 304 120 308 120 308 129 308 129 M308 129 319 129 319 129 331 129 331 134 342 134 342 132 M308 129 308 139 301 139 301 149 300 149 M300 149 313 149 313 155 327 155 327 157 340 157 340 164 M300 149 300 168 300 168 300 187 306 187 M306 187 315 187 315 187 324 187 324 183 334 183 334 182 343 182 343 183 M306 187 306 195 302 195 302 204 309 204 309 212 304 212 M304 212 311 212 311 211 318 211 318 218 324 218 324 217 331 217 331 223 M304 212 304 221 308 221 308 229 304 229 304 238 308 238 M308 238 308 247 304 247 304 256 304 256 304 266 306 266 306 275 303 275 M303 275 321 275 321 275 339 275 339 274 M303 275 303 292 311 292 311 308 313 308 M313 308 320 308 320 310 327 310 327 301 334 301 334 303 M313 308 313 322 315 322 315 336 312 336 M312 336 322 336 322 333 331 333 331 328 M312 336 312 349 303 349 303 362 302 362 M302 362 312 362 312 361 322 361 322 360 332 360 332 364 M302 362 302 380 304 380 304 399 313 399 M313 399 323 399 323 393 333 393 333 390 343 390 343 390 M313 399 313 408 311 408 311 418 303 418 M303 418 323 418 323 416 343 416 343 421 M303 418 303 432 304 432 304 445 303 445 303 459 306 459 M306 459 320 459 320 457 334 457 334 461 M306 459 306 465 303 465 303 470 306 470 306 476 309 476 309 482 305 482 M305 482 317 482 317 480 329 480 329 488 341 488 341 485 M305 482 305 502 307 502 307 523 309 523 M309 523 316 523 316 518 322 518 322 515 329 515 329 516 M309 523 309 528 309 528 309 534 301 534 301 539 302 539 M302 539 310 539 310 541 318 541 318 544 326 544 326 551 334 551 334 553 M302 539 302 557 304 557 304 575 303 575 M303 575 312 575 312 572 322 572 322 570 331 570 331 574 M303 575 303 582 308 582 308 588 307 588 307 594 309 594 309 601 309 601 M309 601 317 601 317 598 326 598 326 599 334 599 334 600 342 600 342 598 M309 601 309 620 309 620 309 640 311 640 M311 640 319 640 319 642 327 642 327 644 335 644 335 641 M311 640 311 645 307 645 307 650 306 650 306 656 308 656 308 661 306 661 M306 661 323 661 323 660 340 660 340 659 M306 661 306 672 308 672 308 682 308 682 308 693 314 693 M314 693 318 693 318 691 322 691 322 689 325 689 325 687 329 687 329 689 M314 693 314 708 309 708 309 722 311 722 M311 722 311 735 307 735 307 747 308 747 308 760 302 760 M302 760 312 760 312 764 321 764 321 762 330 762 330 759 340 759 340 762 M302 760 302 776 301 776 301 793 303 793 M303 793 313 793 313 787 323 787 323 789 333 789 333 782 M303 793 303 799 301 799 301 805 304 805 304 811 306 811 M306 811 315 811 315 812 324 812 324 812 334 812 334 819 343 819 343 818 M306 811 306 820 307 820 307 828 305 828 305 836 303 836 303 845 302 845 M339 -17 347 -17 347 -24 355 -24 355 -26 363 -26 363 -28 M339 -17 339 -10 333 -10 333 -3 330 -3 330 4 330 4 M330 4 337 4 337 4 344 4 344 9 351 9 351 6 358 6 358 10 M330 4 330 24 331 24 331 44 331 44 M331 44 345 44 345 40 359 40 359 41 373 41 373 38 M331 44 331 52 334 52 334 59 330 59 M330 59 341 59 341 58 352 58 352 55 362 55 362 62 373 62 373 58 M330 59 330 76 333 76 333 94 329 94 M329 94 346 94 346 98 362 98 362 96 M329 94 329 104 331 104 331 113 334 113 334 122 340 122 340 132 342 132 M342 132 350 132 350 129 358 129 358 130 365 130 365 134 373 134 373 133 M342 132 342 143 345 143 345 153 344 153 344 164 340 164 M340 164 352 164 352 159 364 159 364 152 M340 164 340 170 338 170 338 177 344 177 344 183 343 183 M343 183 354 183 354 184 365 184 365 186 M331 223 352 223 352 219 373 219 373 211 M331 223 331 227 333 227 333 231 337 231 337 235 340 235 340 239 340 239 M340 239 350 239 350 241 361 241 361 248 371 248 371 250 M339 274 350 274 350 280 360 280 360 280 371 280 371 280 M339 274 339 284 334 284 334 293 339 293 339 303 334 303 M334 303 345 303 345 307 357 307 357 306 368 306 368 303 M334 303 334 309 335 309 335 316 332 316 332 322 332 322 332 328 331 328 M331 328 347 328 347 332 363 332 363 334 M331 328 331 346 328 346 328 364 332 364 M332 364 345 364 345 363 358 363 358 362 371 362 371 359 M332 364 332 373 339 373 339 381 340 381 340 390 343 390 M343 390 348 390 348 395 352 395 352 394 356 394 356 400 361 400 361 400 M343 390 343 398 344 398 344 406 340 406 340 413 342 413 342 421 343 421 M343 421 343 431 342 431 342 441 340 441 340 451 338 451 338 461 334 461 M334 461 334 469 338 469 338 477 336 477 336 485 341 485 M341 485 348 485 348 491 356 491 356 494 363 494 363 494 M341 485 341 500 338 500 338 516 329 516 M329 516 343 516 343 520 358 520 358 520 372 520 372 524 M329 516 329 534 334 534 334 553 334 553 M334 553 348 553 348 542 362 542 362 539 M334 553 334 560 336 560 336 567 334 567 334 574 331 574 M331 574 346 574 346 572 360 572 360 576 M342 598 342 612 336 612 336 627 336 627 336 641 335 641 M335 641 342 641 342 639 348 639 348 636 355 636 355 633 362 633 362 635 M335 641 335 650 336 650 336 659 340 659 M340 659 354 659 354 666 368 666 368 669 M340 659 340 666 336 666 336 674 335 674 335 682 329 682 329 689 329 689 M329 689 339 689 339 695 350 695 350 698 360 698 360 701 370 701 370 702 M329 689 329 700 335 700 335 711 336 711 336 722 343 722 M343 722 352 722 352 718 360 718 360 721 369 721 369 720 M343 722 343 732 342 732 342 742 341 742 341 752 343 752 343 762 340 762 M340 762 348 762 348 760 356 760 356 757 363 757 363 751 371 751 371 753 M333 782 342 782 342 782 350 782 350 785 358 785 358 784 367 784 367 784 M333 782 333 794 338 794 338 806 336 806 336 818 343 818 M343 818 356 818 356 815 370 815 370 811 M343 818 343 826 342 826 342 834 338 834 338 841 338 841 338 849 332 849 M363 -28 372 -28 372 -21 381 -21 381 -18 390 -18 390 -18 M363 -28 363 -9 358 -9 358 10 358 10 M358 10 368 10 368 10 378 10 378 10 387 10 387 7 397 7 397 3 M358 10 358 19 363 19 363 29 366 29 366 38 373 38 M373 38 380 38 380 37 387 37 387 38 394 38 394 44 M373 38 373 48 370 48 370 58 373 58 M373 58 384 58 384 60 396 60 396 62 M373 58 373 77 370 77 370 96 362 96 M362 96 375 96 375 98 388 98 388 97 401 97 401 98 M362 96 362 114 364 114 364 133 373 133 M373 133 383 133 383 128 394 128 394 121 404 121 404 120 M373 133 373 138 369 138 369 142 367 142 367 147 366 147 366 152 364 152 M364 152 372 152 372 153 380 153 380 156 388 156 388 162 396 162 396 161 M365 186 383 186 383 192 401 192 401 193 M365 186 365 194 365 194 365 203 373 203 373 211 373 211 M373 211 373 230 372 230 372 250 371 250 M371 250 377 250 377 248 384 248 384 247 390 247 390 241 M371 250 371 260 370 260 370 270 368 270 368 280 371 280 M371 280 388 280 388 280 404 280 404 277 M371 280 371 292 368 292 368 303 368 303 M368 303 386 303 386 304 403 304 403 304 M368 303 368 313 364 313 364 324 365 324 365 334 363 334 M363 334 382 334 382 332 402 332 402 335 M363 334 363 342 367 342 367 351 367 351 367 359 371 359 M371 359 378 359 378 366 385 366 385 363 392 363 392 370 M371 359 371 369 372 369 372 380 368 380 368 390 363 390 363 400 361 400 M361 400 382 400 382 396 403 396 403 390 M361 400 361 406 360 406 360 413 359 413 359 419 362 419 M362 419 371 419 371 419 380 419 380 427 389 427 389 423 398 423 398 428 M362 419 362 432 363 432 363 444 356 444 356 457 359 457 M359 457 367 457 367 453 375 453 375 458 383 458 383 453 391 453 391 454 M359 457 359 466 363 466 363 476 362 476 362 485 363 485 363 494 363 494 M363 494 376 494 376 490 390 490 390 481 M363 494 363 509 370 509 370 524 372 524 M372 524 382 524 382 524 392 524 392 518 M362 539 374 539 374 542 386 542 386 538 398 538 398 541 M362 539 362 551 362 551 362 564 360 564 360 576 360 576 M360 576 374 576 374 571 388 571 388 573 M360 576 360 583 364 583 364 590 365 590 365 598 370 598 370 605 369 605 M369 605 376 605 376 606 384 606 384 607 392 607 392 604 399 604 399 601 M369 605 369 615 365 615 365 625 366 625 366 635 362 635 M362 635 372 635 372 631 383 631 383 633 393 633 393 631 M362 635 362 652 364 652 364 669 368 669 M368 669 379 669 379 671 390 671 390 665 401 665 401 667 M370 702 375 702 375 699 380 699 380 699 384 699 384 695 389 695 389 690 M370 702 370 708 373 708 373 714 369 714 369 720 369 720 M369 720 375 720 375 725 382 725 382 721 388 721 388 724 394 724 394 727 M369 720 369 736 367 736 367 753 371 753 M371 753 384 753 384 749 398 749 398 749 M371 753 371 768 369 768 369 784 367 784 M367 784 375 784 375 787 383 787 383 786 391 786 391 789 M367 784 367 793 366 793 366 802 370 802 370 811 370 811 M370 811 378 811 378 810 387 810 387 811 395 811 395 813 M370 811 370 819 371 819 371 826 367 826 367 834 361 834 361 842 362 842 M390 -18 398 -18 398 -23 406 -23 406 -21 415 -21 415 -26 423 -26 423 -23 M397 3 410 3 410 3 424 3 424 5 M397 3 397 13 398 13 398 24 392 24 392 34 398 34 398 44 394 44 M394 44 404 44 404 45 413 45 413 40 422 40 422 41 432 41 432 44 M396 62 405 62 405 64 415 64 415 64 424 64 424 61 M396 62 396 80 401 80 401 98 401 98 M401 98 416 98 416 92 430 92 430 91 M401 98 401 104 401 104 401 109 402 109 402 114 405 114 405 120 404 120 M404 120 411 120 411 125 418 125 418 132 M396 161 410 161 410 161 425 161 425 161 M396 161 396 177 400 177 400 193 401 193 M401 193 409 193 409 197 416 197 416 193 424 193 424 192 M401 193 401 203 391 203 391 213 389 213 M389 213 407 213 407 215 425 215 425 211 M389 213 389 227 387 227 387 241 390 241 M390 241 397 241 397 245 404 245 404 246 411 246 411 247 418 247 418 247 M390 241 390 253 398 253 398 265 400 265 400 277 404 277 M404 277 410 277 410 278 416 278 416 276 422 276 422 279 428 279 428 283 M404 277 404 284 402 284 402 290 403 290 403 297 403 297 403 304 403 304 M403 304 411 304 411 308 419 308 419 308 M403 304 403 312 400 312 400 320 405 320 405 327 403 327 403 335 402 335 M402 335 413 335 413 333 424 333 424 336 M402 335 402 352 401 352 401 370 392 370 M392 370 406 370 406 368 420 368 420 363 M392 370 392 375 392 375 392 380 400 380 400 385 400 385 400 390 403 390 M403 390 411 390 411 398 418 398 418 398 426 398 426 403 M403 390 403 409 404 409 404 428 398 428 M398 428 405 428 405 424 413 424 413 426 420 426 420 426 M398 428 398 434 395 434 395 441 397 441 397 448 391 448 391 454 391 454 M391 454 411 454 411 461 431 461 431 463 M391 454 391 463 389 463 389 472 388 472 388 481 390 481 M390 481 406 481 406 478 421 478 421 480 M390 481 390 500 391 500 391 518 392 518 M392 518 406 518 406 523 419 523 419 524 433 524 433 524 M392 518 392 526 398 526 398 533 396 533 396 541 398 541 M398 541 405 541 405 541 412 541 412 540 419 540 419 537 426 537 426 539 M398 541 398 552 398 552 398 562 391 562 391 573 388 573 M388 573 403 573 403 572 418 572 418 575 433 575 433 574 M388 573 388 580 388 580 388 587 396 587 396 594 397 594 397 601 399 601 M399 601 407 601 407 603 416 603 416 605 424 605 424 608 432 608 432 608 M399 601 399 611 398 611 398 621 392 621 392 631 393 631 M393 631 402 631 402 633 412 633 412 635 422 635 422 628 431 628 431 631 M393 631 393 643 398 643 398 655 399 655 399 667 401 667 M401 667 411 667 411 668 421 668 421 661 431 661 431 662 M401 667 401 673 395 673 395 678 392 678 392 684 395 684 395 690 389 690 M389 690 406 690 406 697 424 697 424 702 M389 690 389 702 391 702 391 715 391 715 391 727 394 727 M394 727 406 727 406 725 419 725 419 725 431 725 431 721 M394 727 394 734 392 734 392 742 395 742 395 749 398 749 M398 749 404 749 404 753 410 753 410 750 415 750 415 752 421 752 421 754 M398 749 398 762 398 762 398 776 394 776 394 789 391 789 M391 789 403 789 403 786 414 786 414 786 426 786 426 784 M395 813 408 813 408 810 420 810 420 812 M395 813 395 833 391 833 391 853 393 853 M423 -23 436 -23 436 -24 449 -24 449 -23 M423 -23 423 -16 427 -16 427 -9 420 -9 420 -2 421 -2 421 5 424 5 M424 5 442 5 442 4 460 4 460 -1 M424 5 424 24 424 24 424 44 432 44 M432 44 439 44 439 40 446 40 446 34 454 34 454 36 461 36 461 30 M432 44 432 48 427 48 427 52 426 52 426 57 423 57 423 61 424 61 M424 61 441 61 441 60 458 60 458 67 M424 61 424 68 423 68 423 76 427 76 427 84 425 84 425 91 430 91 M430 91 439 91 439 93 449 93 449 96 458 96 458 93 M430 91 430 105 425 105 425 118 421 118 421 132 418 132 M418 132 430 132 430 134 443 134 443 133 455 133 455 127 M418 132 418 146 419 146 419 161 425 161 M425 161 435 161 435 161 445 161 445 161 455 161 455 159 M425 161 425 169 426 169 426 176 421 176 421 184 424 184 424 192 424 192 M424 192 432 192 432 186 440 186 440 188 447 188 447 183 455 183 455 185 M424 192 424 197 423 197 423 202 428 202 428 206 428 206 428 211 425 211 M425 211 431 211 431 213 436 213 436 214 442 214 442 218 448 218 448 218 M425 211 425 220 419 220 419 229 424 229 424 238 422 238 422 247 418 247 M418 247 437 247 437 247 456 247 456 242 M418 247 418 256 422 256 422 265 424 265 424 274 427 274 427 283 428 283 M428 283 439 283 439 286 449 286 449 284 460 284 460 280 M428 283 428 291 428 291 428 300 420 300 420 308 419 308 M419 308 419 315 423 315 423 322 424 322 424 329 427 329 427 336 424 336 M424 336 435 336 435 335 445 335 445 332 456 332 456 330 M424 336 424 345 420 345 420 354 424 354 424 363 420 363 M420 363 430 363 430 367 440 367 440 368 450 368 450 365 M420 363 420 383 420 383 420 403 426 403 M426 403 432 403 432 400 438 400 438 397 443 397 443 397 449 397 449 395 M426 403 426 414 420 414 420 426 420 426 M420 426 438 426 438 422 456 422 456 419 M420 426 420 435 426 435 426 444 425 444 425 454 430 454 430 463 431 463 M431 463 438 463 438 459 444 459 444 455 451 455 451 449 458 449 458 449 M431 463 431 469 425 469 425 474 426 474 426 480 421 480 M421 480 434 480 434 481 447 481 447 487 460 487 460 490 M421 480 421 491 423 491 423 502 428 502 428 513 432 513 432 524 433 524 M433 524 441 524 441 520 448 520 448 513 456 513 456 509 M433 524 433 528 431 528 431 532 426 532 426 535 430 535 430 539 426 539 M426 539 434 539 434 539 441 539 441 542 448 542 448 546 456 546 456 544 M426 539 426 556 428 556 428 574 433 574 M433 574 448 574 448 570 463 570 463 570 M433 574 433 585 432 585 432 597 429 597 429 608 432 608 M432 608 447 608 447 609 462 609 462 614 M432 608 432 614 428 614 428 620 430 620 430 625 434 625 434 631 431 631 M431 631 446 631 446 637 460 637 460 641 M431 631 431 639 428 639 428 646 431 646 431 654 430 654 430 662 431 662 M431 662 441 662 441 668 451 668 451 674 M431 662 431 675 427 675 427 689 423 689 423 702 424 702 M424 702 432 702 432 701 440 701 440 706 448 706 448 699 456 699 456 703 M424 702 424 707 429 707 429 712 427 712 427 716 426 716 426 721 431 721 M431 721 442 721 442 722 452 722 452 723 463 723 463 721 M431 721 431 732 428 732 428 743 425 743 425 754 421 754 M421 754 434 754 434 754 448 754 448 761 461 761 461 763 M421 754 421 764 426 764 426 774 428 774 428 784 426 784 M426 784 434 784 434 784 441 784 441 782 449 782 449 784 M426 784 426 791 424 791 424 798 427 798 427 805 420 805 420 812 420 812 M420 812 440 812 440 810 460 810 460 811 M449 -23 449 -18 450 -18 450 -12 453 -12 453 -6 458 -6 458 -1 460 -1 M460 -1 473 -1 473 5 486 5 486 13 M460 -1 460 9 460 9 460 20 460 20 460 30 461 30 M461 30 466 30 466 32 471 32 471 31 476 31 476 35 481 35 481 32 M461 30 461 39 462 39 462 48 458 48 458 58 460 58 460 67 458 67 M458 67 465 67 465 64 472 64 472 69 479 69 479 61 486 61 486 63 M458 67 458 74 455 74 455 80 458 80 458 86 459 86 459 93 458 93 M458 93 468 93 468 93 479 93 479 91 M458 93 458 110 460 110 460 127 455 127 M455 127 462 127 462 130 468 130 468 128 474 128 474 135 481 135 481 133 M455 127 455 138 454 138 454 148 456 148 456 159 455 159 M455 159 466 159 466 159 478 159 478 163 489 163 489 162 M455 159 455 172 451 172 451 185 455 185 M455 185 468 185 468 191 481 191 481 191 M455 185 455 202 455 202 455 218 448 218 M448 218 456 218 456 218 464 218 464 216 472 216 472 220 480 220 480 216 M448 218 448 224 446 224 446 230 453 230 453 236 456 236 456 242 456 242 M456 242 464 242 464 246 472 246 472 243 480 243 480 243 488 243 488 244 M456 242 456 261 462 261 462 280 460 280 M455 301 463 301 463 303 471 303 471 305 479 305 479 308 487 308 487 312 M455 301 455 311 453 311 453 320 453 320 453 330 456 330 M456 330 468 330 468 334 480 334 480 344 M456 330 456 348 450 348 450 365 450 365 M450 365 460 365 460 362 469 362 469 364 478 364 478 364 488 364 488 364 M450 365 450 372 446 372 446 380 449 380 449 388 447 388 447 395 449 395 M449 395 470 395 470 397 491 397 491 392 M449 395 449 407 455 407 455 419 456 419 M456 419 469 419 469 420 481 420 481 426 494 426 494 427 M456 419 456 426 460 426 460 434 453 434 453 442 461 442 461 449 458 449 M458 449 471 449 471 455 484 455 484 460 M458 449 458 470 457 470 457 490 460 490 M460 490 472 490 472 484 485 484 485 481 M460 490 460 496 455 496 455 503 460 503 460 509 456 509 M456 509 464 509 464 506 473 506 473 507 482 507 482 508 490 508 490 509 M456 509 456 518 456 518 456 526 459 526 459 535 457 535 457 544 456 544 M456 544 465 544 465 545 474 545 474 540 482 540 482 544 491 544 491 542 M456 544 456 550 454 550 454 557 456 557 456 564 461 564 461 570 463 570 M463 570 476 570 476 577 488 577 488 584 M463 570 463 581 460 581 460 592 461 592 461 603 462 603 462 614 462 614 M462 614 470 614 470 608 479 608 479 608 487 608 487 609 M462 614 462 628 460 628 460 641 460 641 M460 641 468 641 468 641 475 641 475 631 483 631 483 628 M460 641 460 649 456 649 456 658 452 658 452 666 453 666 453 674 451 674 M451 674 465 674 465 664 479 664 479 660 M451 674 451 681 450 681 450 688 452 688 452 696 456 696 456 703 456 703 M456 703 464 703 464 701 472 701 472 697 480 697 480 698 488 698 488 695 M456 703 456 709 457 709 457 715 464 715 464 721 463 721 M463 721 471 721 471 722 478 722 478 725 486 725 486 732 M463 721 463 732 464 732 464 742 464 742 464 752 462 752 462 763 461 763 M461 763 461 768 460 768 460 774 452 774 452 779 454 779 454 784 449 784 M449 784 468 784 468 782 488 782 488 778 M449 784 449 793 450 793 450 802 459 802 459 811 460 811 M460 811 466 811 466 809 472 809 472 813 478 813 478 814 M460 811 460 826 458 826 458 842 462 842 M491 -30 502 -30 502 -25 512 -25 512 -23 M491 -30 491 -16 491 -16 491 -1 485 -1 485 13 486 13 M486 13 494 13 494 8 502 8 502 4 509 4 509 7 517 7 517 1 M486 13 486 19 488 19 488 26 481 26 481 32 481 32 M481 32 490 32 490 36 500 36 500 35 509 35 509 39 518 39 518 36 M481 32 481 40 483 40 483 48 482 48 482 55 482 55 482 63 486 63 M486 63 498 63 498 67 510 67 510 73 M486 63 486 70 488 70 488 77 483 77 483 84 482 84 482 91 479 91 M479 91 496 91 496 90 512 90 512 90 M479 91 479 112 476 112 476 133 481 133 M481 133 496 133 496 133 510 133 510 128 M481 133 481 143 484 143 484 152 484 152 484 162 489 162 M489 162 497 162 497 162 506 162 506 162 514 162 514 160 522 160 522 161 M489 162 489 176 488 176 488 191 481 191 M481 191 489 191 489 190 498 190 498 188 506 188 506 187 514 187 514 182 M481 191 481 199 480 199 480 208 482 208 482 216 480 216 M480 216 494 216 494 220 508 220 508 218 M488 244 495 244 495 245 502 245 502 245 510 245 510 246 517 246 517 244 M488 244 488 260 489 260 489 277 492 277 M492 277 501 277 501 280 509 280 509 276 518 276 518 275 M492 277 492 289 493 289 493 300 487 300 487 312 487 312 M487 312 505 312 505 313 523 313 523 310 M487 312 487 328 483 328 483 344 480 344 M480 344 491 344 491 347 501 347 501 339 512 339 512 342 M480 344 480 351 485 351 485 357 488 357 488 364 488 364 M488 364 495 364 495 362 502 362 502 363 509 363 509 367 M488 364 488 371 486 371 486 378 488 378 488 385 494 385 494 392 491 392 M491 392 499 392 499 388 506 388 506 389 514 389 514 392 M491 392 491 404 490 404 490 415 495 415 495 427 494 427 M494 427 502 427 502 425 509 425 509 430 M494 427 494 435 491 435 491 444 490 444 490 452 485 452 485 460 484 460 M484 460 492 460 492 456 500 456 500 460 508 460 508 457 M484 460 484 470 487 470 487 481 485 481 M485 481 494 481 494 477 504 477 504 482 514 482 514 478 523 478 523 480 M485 481 485 488 487 488 487 495 486 495 486 502 486 502 486 509 490 509 M490 509 500 509 500 511 511 511 511 518 M490 509 490 517 493 517 493 526 487 526 487 534 491 534 491 542 491 542 M491 542 497 542 497 540 504 540 504 545 510 545 510 544 516 544 516 548 M491 542 491 556 493 556 493 570 485 570 485 584 488 584 M488 584 499 584 499 584 510 584 510 573 521 573 521 571 M488 584 488 596 486 596 486 609 487 609 M487 609 494 609 494 604 500 604 500 608 506 608 506 607 513 607 513 603 M487 609 487 614 486 614 486 618 489 618 489 623 480 623 480 628 483 628 M483 628 496 628 496 636 509 636 509 642 M483 628 483 636 485 636 485 644 481 644 481 652 479 652 479 660 479 660 M479 660 500 660 500 668 521 668 521 669 M479 660 479 669 481 669 481 678 487 678 487 686 482 686 482 695 488 695 M488 695 498 695 498 700 508 700 508 702 M488 695 488 714 484 714 484 732 486 732 M486 732 497 732 497 730 509 730 509 726 520 726 520 725 M486 732 486 737 483 737 483 742 485 742 485 747 478 747 478 752 480 752 M480 752 500 752 500 752 520 752 520 755 M480 752 480 765 482 765 482 778 488 778 M488 778 496 778 496 779 504 779 504 780 512 780 512 780 M488 778 488 796 484 796 484 814 478 814 M478 814 495 814 495 810 512 810 512 809 M512 -23 530 -23 530 -22 549 -22 549 -18 M512 -23 512 -15 511 -15 511 -7 512 -7 512 1 517 1 M517 1 533 1 533 1 549 1 549 2 M517 1 517 10 515 10 515 18 518 18 518 27 517 27 517 36 518 36 M518 36 532 36 532 38 547 38 547 35 M518 36 518 48 518 48 518 61 509 61 509 73 510 73 M510 73 524 73 524 72 537 72 537 70 551 70 551 66 M510 73 510 79 513 79 513 84 512 84 512 90 512 90 M512 90 527 90 527 96 542 96 542 98 M512 90 512 100 512 100 512 109 513 109 513 118 513 118 513 128 510 128 M510 128 524 128 524 124 539 124 539 124 553 124 553 121 M510 128 510 136 514 136 514 144 513 144 513 153 517 153 517 161 522 161 M522 161 530 161 530 162 537 162 537 157 544 157 544 155 552 155 552 148 M522 161 522 166 520 166 520 172 521 172 521 177 517 177 517 182 514 182 M514 182 523 182 523 182 533 182 533 182 542 182 542 182 M514 182 514 200 512 200 512 218 508 218 M508 218 518 218 518 220 529 220 529 221 540 221 540 223 550 223 550 223 M508 218 508 231 511 231 511 244 517 244 M517 244 534 244 534 247 550 247 550 243 M518 275 526 275 526 278 535 278 535 274 544 274 544 276 552 276 552 273 M518 275 518 284 517 284 517 292 518 292 518 301 520 301 520 310 523 310 M523 310 528 310 528 307 532 307 532 310 537 310 537 309 542 309 542 313 M523 310 523 318 522 318 522 326 514 326 514 334 516 334 516 342 512 342 M512 342 524 342 524 344 536 344 536 343 548 343 548 339 M512 342 512 350 512 350 512 359 514 359 514 367 509 367 M509 367 529 367 529 373 549 373 549 374 M509 367 509 380 510 380 510 392 514 392 M514 392 514 405 513 405 513 417 514 417 514 430 509 430 M509 430 519 430 519 431 529 431 529 430 539 430 539 434 549 434 549 432 M509 430 509 444 507 444 507 457 508 457 M508 457 517 457 517 456 526 456 526 460 536 460 536 458 545 458 545 460 M508 457 508 468 515 468 515 480 523 480 M523 480 531 480 531 481 539 481 539 482 547 482 547 483 M523 480 523 490 522 490 522 499 519 499 519 508 513 508 513 518 511 518 M511 518 521 518 521 520 531 520 531 519 541 519 541 518 M511 518 511 526 514 526 514 533 513 533 513 540 512 540 512 548 516 548 M516 548 516 560 520 560 520 571 521 571 M521 571 526 571 526 573 530 573 530 566 535 566 535 567 540 567 540 568 M521 571 521 582 517 582 517 592 516 592 516 603 513 603 M513 603 522 603 522 606 531 606 531 606 540 606 540 613 M513 603 513 616 514 616 514 629 507 629 507 642 509 642 M509 642 518 642 518 640 526 640 526 633 535 633 535 635 544 635 544 630 M509 642 509 656 517 656 517 669 521 669 M521 669 527 669 527 665 532 665 532 664 538 664 538 659 M508 702 528 702 528 697 549 697 549 698 M508 702 508 714 513 714 513 725 520 725 M520 725 530 725 530 726 539 726 539 726 549 726 549 730 M520 725 520 732 523 732 523 740 517 740 517 748 521 748 521 755 520 755 M520 755 525 755 525 756 530 756 530 759 534 759 534 753 539 753 539 757 M520 755 520 768 516 768 516 780 512 780 M512 780 520 780 520 783 528 783 528 786 536 786 536 786 544 786 544 791 M512 780 512 790 513 790 513 799 513 799 513 809 512 809 M512 809 512 823 511 823 511 836 513 836 513 850 513 850 M549 -18 558 -18 558 -20 566 -20 566 -19 574 -19 574 -19 583 -19 583 -17 M549 -18 549 -8 545 -8 545 2 549 2 M549 2 560 2 560 -1 570 -1 570 1 M549 2 549 13 546 13 546 24 544 24 544 35 547 35 M547 35 555 35 555 29 562 29 562 34 570 34 570 29 M547 35 547 50 551 50 551 66 551 66 M551 66 566 66 566 71 582 71 582 71 M551 66 551 82 545 82 545 98 542 98 M542 98 551 98 551 99 560 99 560 96 569 96 569 98 578 98 578 101 M542 98 542 106 548 106 548 113 549 113 549 121 553 121 M553 121 553 130 552 130 552 139 553 139 553 148 552 148 M552 148 556 148 556 148 561 148 561 148 566 148 566 152 570 152 570 150 M552 148 552 159 547 159 547 171 548 171 548 182 542 182 M542 182 555 182 555 179 567 179 567 178 580 178 580 181 M542 182 542 192 547 192 547 202 550 202 550 213 548 213 548 223 550 223 M550 223 556 223 556 220 562 220 562 222 567 222 567 221 573 221 573 215 M550 223 550 228 550 228 550 233 547 233 547 238 548 238 548 243 550 243 M550 243 556 243 556 242 562 242 562 243 568 243 568 242 M552 273 559 273 559 276 566 276 566 278 573 278 573 279 M552 273 552 286 550 286 550 300 545 300 545 313 542 313 M542 313 558 313 558 305 574 305 574 303 M542 313 542 322 540 322 540 330 544 330 544 339 548 339 M548 339 557 339 557 341 566 341 566 334 574 334 574 339 583 339 583 336 M548 339 548 351 545 351 545 362 550 362 550 374 549 374 M549 374 566 374 566 372 582 372 582 368 M549 374 549 381 548 381 548 388 544 388 544 394 547 394 547 401 546 401 M546 401 553 401 553 398 561 398 561 396 568 396 568 395 M546 401 546 416 546 416 546 432 549 432 M549 432 558 432 558 430 566 430 566 433 575 433 575 430 M549 432 549 446 548 446 548 460 545 460 M545 460 555 460 555 463 564 463 564 457 574 457 574 459 M545 460 545 466 544 466 544 472 543 472 543 477 547 477 547 483 547 483 M547 483 557 483 557 486 567 486 567 480 577 480 577 481 M547 483 547 495 542 495 542 506 544 506 544 518 541 518 M541 518 555 518 555 518 568 518 568 512 582 512 582 509 M541 518 541 536 543 536 543 553 539 553 M539 553 553 553 553 549 567 549 567 548 581 548 581 541 M539 553 539 558 536 558 536 563 539 563 539 568 540 568 M540 568 554 568 554 570 568 570 568 571 M540 568 540 590 540 590 540 613 540 613 M540 613 560 613 560 611 580 611 580 614 M540 613 540 619 541 619 541 624 543 624 543 630 544 630 M544 630 556 630 556 634 568 634 568 636 M538 659 548 659 548 661 557 661 557 666 566 666 566 671 576 671 576 671 M538 659 538 678 544 678 544 698 549 698 M549 698 554 698 554 700 560 700 560 698 566 698 566 695 571 695 571 696 M549 698 549 714 547 714 547 730 549 730 M549 730 557 730 557 731 566 731 566 732 574 732 574 731 M549 730 549 744 546 744 546 757 539 757 M539 757 556 757 556 759 572 759 572 763 M539 757 539 766 539 766 539 774 540 774 540 782 541 782 541 791 544 791 M544 791 551 791 551 787 558 787 558 790 566 790 566 787 573 787 573 781 M551 822 551 830 550 830 550 837 542 837 542 844 542 844 542 852 539 852 M583 -17 587 -17 587 -21 591 -21 591 -20 595 -20 595 -17 599 -17 599 -19 M583 -17 583 -12 581 -12 581 -8 574 -8 574 -4 573 -4 573 1 570 1 M570 1 590 1 590 4 609 4 609 11 M570 1 570 15 570 15 570 29 570 29 M570 29 580 29 580 30 589 30 589 35 598 35 598 36 608 36 608 34 M570 29 570 40 572 40 572 50 575 50 575 60 581 60 581 71 582 71 M582 71 588 71 588 68 593 68 593 69 598 69 598 65 604 65 604 64 M582 71 582 81 584 81 584 91 583 91 583 101 578 101 M578 101 586 101 586 98 595 98 595 98 604 98 604 90 612 90 612 89 M578 101 578 106 578 106 578 112 575 112 575 118 577 118 577 123 578 123 M578 123 589 123 589 121 601 121 601 118 612 118 612 118 M578 123 578 136 577 136 577 150 570 150 M570 150 586 150 586 148 601 148 601 152 M570 150 570 158 570 158 570 166 574 166 574 173 574 173 574 181 580 181 M580 181 588 181 588 183 596 183 596 187 604 187 604 187 612 187 612 186 M573 215 588 215 588 217 604 217 604 222 M573 215 573 228 574 228 574 242 568 242 M568 242 579 242 579 239 591 239 591 247 602 247 602 245 M568 242 568 260 567 260 567 279 573 279 M573 279 573 291 570 291 570 303 574 303 M574 303 583 303 583 304 592 304 592 307 601 307 601 303 610 303 610 308 M574 303 574 320 582 320 582 336 583 336 M583 336 594 336 594 338 604 338 604 333 M583 336 583 344 579 344 579 352 584 352 584 360 585 360 585 368 582 368 M582 368 586 368 586 366 591 366 591 369 596 369 596 373 600 373 600 371 M582 368 582 377 577 377 577 386 570 386 570 395 568 395 M568 395 578 395 578 399 588 399 588 399 599 399 599 397 609 397 609 400 M568 395 568 412 574 412 574 430 575 430 M575 430 584 430 584 425 592 425 592 427 601 427 601 425 M575 430 575 444 573 444 573 459 574 459 M574 459 583 459 583 457 592 457 592 456 601 456 601 457 610 457 610 457 M574 459 574 466 575 466 575 474 578 474 578 481 577 481 M577 481 588 481 588 485 600 485 600 485 M577 481 577 495 577 495 577 509 582 509 M582 509 590 509 590 507 597 507 597 508 604 508 604 511 612 511 612 512 M582 509 582 520 586 520 586 530 581 530 581 541 581 541 M581 541 586 541 586 544 591 544 591 545 596 545 596 539 601 539 601 543 M581 541 581 556 574 556 574 571 568 571 M568 571 582 571 582 576 595 576 595 578 609 578 609 581 M568 571 568 592 577 592 577 614 580 614 M580 614 585 614 585 610 590 610 590 606 595 606 595 605 600 605 600 600 M580 614 580 625 575 625 575 636 568 636 M568 636 579 636 579 631 591 631 591 636 602 636 602 633 M568 636 568 654 571 654 571 671 576 671 M576 671 591 671 591 669 606 669 606 661 M576 671 576 679 576 679 576 688 576 688 576 696 571 696 M571 696 579 696 579 694 587 694 587 692 595 692 595 696 603 696 603 691 M571 696 571 708 573 708 573 719 570 719 570 731 574 731 M574 731 587 731 587 727 601 727 601 727 614 727 614 730 M574 731 574 742 575 742 575 752 575 752 575 763 572 763 M572 763 586 763 586 765 600 765 600 763 M572 763 572 769 569 769 569 775 576 775 576 781 573 781 M573 781 582 781 582 783 591 783 591 779 600 779 600 784 M573 781 573 798 575 798 575 816 579 816 M579 816 596 816 596 817 614 817 614 821 M579 816 579 824 573 824 573 832 573 832 573 840 570 840 570 848 570 848 M599 -19 610 -19 610 -17 620 -17 620 -20 631 -20 631 -22 M609 11 616 11 616 11 623 11 623 5 630 5 630 1 M609 11 609 22 609 22 609 34 608 34 M608 34 614 34 614 36 621 36 621 28 628 28 628 29 634 29 634 29 M608 34 608 49 605 49 605 64 604 64 M604 64 619 64 619 70 634 70 634 71 M604 64 604 70 603 70 603 76 606 76 606 83 612 83 612 89 612 89 M612 89 619 89 619 92 626 92 626 93 632 93 632 95 639 95 639 96 M612 89 612 96 609 96 609 104 614 104 614 111 615 111 615 118 612 118 M612 118 621 118 621 120 629 120 629 122 638 122 638 125 M612 118 612 129 606 129 606 141 605 141 605 152 601 152 M601 152 611 152 611 150 620 150 620 154 630 154 630 158 M601 152 601 169 604 169 604 186 612 186 M612 186 619 186 619 190 627 190 627 190 634 190 634 190 M612 186 612 198 608 198 608 210 604 210 604 222 604 222 M604 222 617 222 617 220 630 220 630 214 643 214 643 215 M604 222 604 230 603 230 603 237 600 237 600 245 602 245 M602 245 620 245 620 245 637 245 637 250 M607 280 621 280 621 279 635 279 635 272 M607 280 607 289 605 289 605 299 611 299 611 308 610 308 M610 308 618 308 618 309 625 309 625 312 632 312 632 315 640 315 640 312 M604 333 622 333 622 335 640 335 640 339 M604 333 604 342 600 342 600 352 603 352 603 362 601 362 601 371 600 371 M600 371 610 371 610 371 621 371 621 367 632 367 632 372 642 372 642 369 M600 371 600 386 606 386 606 400 609 400 M609 400 624 400 624 395 638 395 638 395 M609 400 609 412 603 412 603 425 601 425 M601 425 612 425 612 429 622 429 622 428 633 428 633 428 M601 425 601 433 601 433 601 441 602 441 602 449 607 449 607 457 610 457 M610 457 620 457 620 454 630 454 630 455 M600 485 610 485 610 485 620 485 620 484 631 484 631 488 641 488 641 489 M600 485 600 494 605 494 605 503 605 503 605 512 612 512 M612 512 625 512 625 510 638 510 638 512 M612 512 612 520 608 520 608 528 606 528 606 535 603 535 603 543 601 543 M601 543 612 543 612 540 624 540 624 544 635 544 635 545 M601 543 601 562 603 562 603 581 609 581 M609 581 619 581 619 577 628 577 628 580 638 580 638 575 M609 581 609 587 605 587 605 594 606 594 606 600 600 600 M600 600 600 608 600 608 600 616 600 616 600 625 601 625 601 633 602 633 M602 633 616 633 616 636 631 636 631 638 M602 633 602 647 604 647 604 661 606 661 M606 661 623 661 623 662 640 662 640 664 M606 661 606 671 604 671 604 681 601 681 601 691 603 691 M603 691 611 691 611 691 620 691 620 697 628 697 628 698 636 698 636 704 M603 691 603 710 607 710 607 730 614 730 M614 730 619 730 619 727 624 727 624 731 629 731 629 727 M614 730 614 738 610 738 610 746 611 746 611 755 601 755 601 763 600 763 M600 763 608 763 608 763 616 763 616 758 623 758 623 763 631 763 631 761 M600 763 600 770 603 770 603 777 603 777 603 784 600 784 M600 784 622 784 622 784 643 784 643 786 M600 784 600 796 606 796 606 809 611 809 611 821 614 821 M614 821 622 821 622 816 630 816 630 817 M631 -22 643 -22 643 -24 654 -24 654 -23 666 -23 666 -22 M631 -22 631 -16 634 -16 634 -10 632 -10 632 -5 629 -5 629 1 630 1 M630 1 650 1 650 2 671 2 671 6 M630 1 630 8 631 8 631 15 636 15 636 22 632 22 632 29 634 29 M634 29 644 29 644 35 655 35 655 36 665 36 665 43 M634 29 634 40 634 40 634 50 633 50 633 60 632 60 632 71 634 71 M634 71 643 71 643 72 652 72 652 66 661 66 661 69 M634 71 634 77 633 77 633 84 633 84 633 90 635 90 635 96 639 96 M639 96 652 96 652 101 664 101 664 100 M639 96 639 106 638 106 638 115 639 115 639 125 638 125 M638 125 649 125 649 131 660 131 660 134 M638 125 638 142 636 142 636 158 630 158 M630 158 638 158 638 158 647 158 647 152 656 152 656 148 664 148 664 149 M630 158 630 166 630 166 630 174 629 174 629 182 630 182 630 190 634 190 M634 190 641 190 641 188 648 188 648 189 655 189 655 184 662 184 662 184 M643 215 648 215 648 212 653 212 653 218 658 218 658 215 M643 215 643 224 645 224 645 232 642 232 642 241 636 241 636 250 637 250 M637 250 646 250 646 252 656 252 656 246 665 246 665 249 M637 250 637 257 638 257 638 265 636 265 636 272 635 272 M635 272 650 272 650 272 664 272 664 272 M635 272 635 282 639 282 639 292 634 292 634 302 638 302 638 312 640 312 M640 312 646 312 646 313 651 313 651 309 656 309 656 308 662 308 662 310 M640 312 640 321 638 321 638 330 641 330 641 339 640 339 M640 339 651 339 651 339 662 339 662 340 673 340 673 336 M642 369 652 369 652 371 662 371 662 371 M642 369 642 376 641 376 641 382 639 382 639 388 641 388 641 395 638 395 M638 395 651 395 651 392 664 392 664 391 M638 395 638 403 639 403 639 412 635 412 635 420 631 420 631 428 633 428 M633 428 646 428 646 428 660 428 660 430 M633 428 633 435 630 435 630 442 633 442 633 448 633 448 633 455 630 455 M630 455 644 455 644 458 657 458 657 458 671 458 671 458 M630 455 630 466 634 466 634 478 638 478 638 489 641 489 M641 489 654 489 654 492 666 492 666 487 M641 489 641 500 636 500 636 512 638 512 M638 512 644 512 644 512 650 512 650 515 656 515 656 520 662 520 662 523 M638 512 638 523 639 523 639 534 633 534 633 545 635 545 M635 545 645 545 645 548 654 548 654 546 664 546 664 548 M635 545 635 555 640 555 640 565 635 565 635 575 638 575 M638 575 646 575 646 580 654 580 654 577 663 577 663 581 671 581 671 581 M639 613 652 613 652 607 665 607 665 603 M639 613 639 626 637 626 637 638 631 638 M631 638 643 638 643 632 655 632 655 635 667 635 667 630 M631 638 631 651 636 651 636 664 640 664 M640 664 640 677 636 677 636 691 636 691 636 704 636 704 M636 704 654 704 654 697 672 697 672 692 M636 704 636 712 634 712 634 719 630 719 630 727 629 727 M629 727 638 727 638 722 646 722 646 724 655 724 655 724 664 724 664 722 M629 727 629 744 630 744 630 761 631 761 M631 761 648 761 648 754 665 754 665 751 M631 761 631 767 631 767 631 774 640 774 640 780 643 780 643 786 643 786 M643 786 647 786 647 787 650 787 650 785 654 785 654 790 658 790 658 790 M643 786 643 796 638 796 638 807 631 807 631 817 630 817 M630 817 646 817 646 814 662 814 662 812 M666 -22 673 -22 673 -23 680 -23 680 -25 688 -25 688 -23 695 -23 695 -22 M666 -22 666 -15 667 -15 667 -8 666 -8 666 -1 672 -1 672 6 671 6 M671 6 678 6 678 3 685 3 685 4 692 4 692 3 699 3 699 4 M671 6 671 18 669 18 669 31 670 31 670 43 665 43 M665 43 678 43 678 40 690 40 690 45 703 45 703 42 M665 43 665 52 667 52 667 60 660 60 660 69 661 69 M661 69 675 69 675 72 689 72 689 71 M661 69 661 77 660 77 660 84 665 84 665 92 662 92 662 100 664 100 M664 100 683 100 683 103 702 103 702 101 M664 100 664 111 662 111 662 123 658 123 658 134 660 134 M660 134 668 134 668 130 675 130 675 136 682 136 682 131 690 131 690 131 M660 134 660 139 659 139 659 144 661 144 661 149 664 149 M664 149 681 149 681 146 698 146 698 148 M664 149 664 166 666 166 666 184 662 184 M662 184 671 184 671 185 679 185 679 192 688 192 688 193 M662 184 662 192 658 192 658 200 662 200 662 207 661 207 661 215 658 215 M658 215 678 215 678 214 698 214 698 212 M658 215 658 224 661 224 661 232 660 232 660 240 667 240 667 249 665 249 M665 249 671 249 671 245 678 245 678 241 684 241 684 239 690 239 690 240 M664 272 678 272 678 274 692 274 692 280 M664 272 664 282 665 282 665 291 664 291 664 300 660 300 660 310 662 310 M662 310 678 310 678 304 694 304 694 300 M662 310 662 316 669 316 669 323 664 323 664 330 674 330 674 336 673 336 M673 336 680 336 680 340 688 340 688 338 695 338 695 337 702 337 702 341 M673 336 673 354 665 354 665 371 662 371 M662 371 676 371 676 372 691 372 691 372 M664 391 681 391 681 394 698 394 698 401 M664 391 664 401 662 401 662 410 659 410 659 420 664 420 664 430 660 430 M660 430 680 430 680 435 699 435 699 432 M660 430 660 444 662 444 662 458 671 458 M671 458 686 458 686 456 701 456 701 461 M671 458 671 472 665 472 665 487 666 487 M666 487 672 487 672 489 678 489 678 490 685 490 685 491 691 491 691 489 M666 487 666 496 666 496 666 505 661 505 661 514 664 514 664 523 662 523 M662 523 673 523 673 519 685 519 685 520 696 520 696 520 M662 523 662 531 666 531 666 540 660 540 660 548 664 548 M664 548 680 548 680 547 695 547 695 552 M664 548 664 559 668 559 668 570 671 570 671 581 671 581 M671 581 678 581 678 576 684 576 684 578 690 578 690 571 697 571 697 572 M671 581 671 592 668 592 668 603 665 603 M665 603 672 603 672 599 678 599 678 600 685 600 685 602 692 602 692 600 M665 603 665 616 666 616 666 630 667 630 M667 630 677 630 677 627 686 627 686 627 696 627 696 629 M667 630 667 638 665 638 665 647 665 647 665 656 672 656 672 664 671 664 M671 664 679 664 679 660 687 660 687 658 695 658 695 660 M671 664 671 671 667 671 667 678 674 678 674 685 675 685 675 692 672 692 M672 692 680 692 680 695 688 695 688 698 696 698 696 696 M672 692 672 707 671 707 671 722 664 722 M664 722 675 722 675 728 686 728 686 732 697 732 697 732 M664 722 664 732 663 732 663 741 663 741 663 751 665 751 M665 751 673 751 673 751 680 751 680 758 688 758 688 761 M658 790 670 790 670 792 683 792 683 792 695 792 695 787 M658 790 658 801 657 801 657 812 662 812 M662 812 671 812 671 815 680 815 680 819 690 819 690 822 699 822 699 821 M662 812 662 829 659 829 659 846 663 846 M695 -22 708 -22 708 -26 720 -26 720 -28 733 -28 733 -31 M695 -22 695 -9 698 -9 698 4 699 4 M699 4 714 4 714 7 728 7 728 8 M699 4 699 17 701 17 701 29 704 29 704 42 703 42 M703 42 707 42 707 40 710 40 710 44 714 44 714 43 718 43 718 38 M703 42 703 49 696 49 696 56 694 56 694 64 696 64 696 71 689 71 M689 71 699 71 699 70 709 70 709 68 719 68 719 69 729 69 729 73 M689 71 689 86 698 86 698 101 702 101 M702 101 712 101 712 106 723 106 723 104 M702 101 702 111 701 111 701 121 695 121 695 131 690 131 M690 131 699 131 699 127 708 127 708 127 717 127 717 127 726 127 726 126 M690 131 690 140 695 140 695 148 698 148 M698 148 715 148 715 150 732 150 732 149 M698 148 698 163 694 163 694 178 691 178 691 193 688 193 M688 193 702 193 702 195 715 195 715 189 729 189 729 188 M688 193 688 199 689 199 689 206 698 206 698 212 698 212 M698 212 710 212 710 216 723 216 723 222 M698 212 698 226 691 226 691 240 690 240 M690 240 698 240 698 244 707 244 707 243 716 243 716 245 724 245 724 246 M690 240 690 250 689 250 689 260 692 260 692 270 692 270 692 280 692 280 M692 280 700 280 700 282 709 282 709 277 718 277 718 284 726 284 726 280 M692 280 692 290 696 290 696 300 694 300 M694 300 703 300 703 302 712 302 712 307 721 307 721 305 M694 300 694 314 698 314 698 327 701 327 701 341 702 341 M702 341 708 341 708 343 714 343 714 340 719 340 719 335 725 335 725 337 M702 341 702 356 697 356 697 372 691 372 M691 372 711 372 711 370 731 370 731 363 M691 372 691 382 691 382 691 391 696 391 696 401 698 401 M698 401 709 401 709 398 720 398 720 399 731 399 731 394 M698 401 698 416 698 416 698 432 699 432 M699 432 706 432 706 428 712 428 712 424 719 424 719 422 726 422 726 422 M699 432 699 439 701 439 701 446 701 446 701 454 699 454 699 461 701 461 M701 461 714 461 714 460 726 460 726 464 M701 461 701 475 697 475 697 489 691 489 M691 489 710 489 710 491 728 491 728 491 M691 489 691 499 691 499 691 510 692 510 692 520 696 520 M696 520 703 520 703 518 710 518 710 515 716 515 716 515 723 515 723 513 M696 520 696 528 693 528 693 536 693 536 693 544 695 544 695 552 695 552 M695 552 702 552 702 554 709 554 709 549 716 549 716 549 723 549 723 547 M695 552 695 559 698 559 698 565 692 565 692 572 697 572 M697 572 712 572 712 573 728 573 728 581 M697 572 697 586 692 586 692 600 692 600 M692 600 699 600 699 606 706 606 706 605 712 605 712 605 719 605 719 610 M692 600 692 607 690 607 690 614 695 614 695 622 694 622 694 629 696 629 M696 629 714 629 714 633 732 633 732 637 M696 629 696 639 695 639 695 650 696 650 696 660 695 660 M695 660 703 660 703 660 711 660 711 664 719 664 719 663 M695 660 695 669 699 669 699 678 698 678 698 687 699 687 699 696 696 696 M696 696 702 696 702 695 707 695 707 695 712 695 712 695 718 695 718 691 M696 696 696 705 693 705 693 714 700 714 700 723 695 723 695 732 697 732 M697 732 706 732 706 728 715 728 715 727 724 727 724 732 733 732 733 728 M697 732 697 742 693 742 693 751 688 751 688 761 688 761 M688 761 698 761 698 758 708 758 708 760 719 760 719 762 729 762 729 761 M688 761 688 770 690 770 690 778 695 778 695 787 695 787 M695 787 708 787 708 789 720 789 720 784 733 784 733 788 M695 787 695 804 696 804 696 821 699 821 M699 821 709 821 709 821 718 821 718 818 728 818 728 818 M699 821 699 827 697 827 697 833 695 833 695 839 698 839 698 845 694 845 M733 -31 742 -31 742 -29 750 -29 750 -28 759 -28 759 -29 M733 -31 733 -18 728 -18 728 -5 732 -5 732 8 728 8 M728 8 736 8 736 11 744 11 744 4 751 4 751 9 759 9 759 5 M728 8 728 23 726 23 726 38 718 38 M718 38 739 38 739 38 760 38 760 30 M718 38 718 47 723 47 723 56 725 56 725 64 730 64 730 73 729 73 M729 73 740 73 740 68 751 68 751 59 M729 73 729 88 725 88 725 104 723 104 M723 104 742 104 742 101 760 101 760 103 M723 104 723 110 724 110 724 115 728 115 728 120 728 120 728 126 726 126 M726 126 742 126 742 126 758 126 758 124 M726 126 726 132 730 132 730 138 732 138 732 143 727 143 727 149 732 149 M732 149 746 149 746 156 761 156 761 161 M732 149 732 159 732 159 732 168 732 168 732 178 728 178 728 188 729 188 M729 188 736 188 736 190 743 190 743 187 750 187 750 183 757 183 757 182 M729 188 729 205 722 205 722 222 723 222 M723 222 733 222 733 219 743 219 743 221 753 221 753 215 M723 222 723 234 727 234 727 246 724 246 M724 246 738 246 738 246 753 246 753 245 M724 246 724 257 726 257 726 269 727 269 727 280 726 280 M726 280 734 280 734 283 742 283 742 282 750 282 750 282 758 282 758 283 M726 280 726 286 725 286 725 292 723 292 723 299 725 299 725 305 721 305 M721 305 721 316 719 316 719 326 721 326 721 337 725 337 M725 337 737 337 737 334 749 334 749 330 M725 337 725 344 729 344 729 350 732 350 732 356 727 356 727 363 731 363 M731 363 746 363 746 364 761 364 761 367 M731 363 731 378 731 378 731 394 731 394 M731 394 739 394 739 397 747 397 747 394 755 394 755 397 763 397 763 395 M731 394 731 401 731 401 731 408 730 408 730 415 727 415 727 422 726 422 M726 422 733 422 733 422 741 422 741 420 748 420 748 424 M726 464 734 464 734 467 742 467 742 467 749 467 749 466 757 466 757 463 M726 464 726 473 730 473 730 482 725 482 725 491 728 491 M728 491 737 491 737 494 746 494 746 485 755 485 755 483 764 483 764 486 M728 491 728 498 725 498 725 506 727 506 727 513 723 513 M723 513 723 524 726 524 726 536 722 536 722 547 723 547 M723 547 740 547 740 546 758 546 758 541 M723 547 723 564 725 564 725 581 728 581 M728 581 728 596 727 596 727 610 719 610 M719 610 729 610 729 607 738 607 738 609 748 609 748 609 M719 610 719 619 721 619 721 628 724 628 724 637 732 637 M732 637 732 644 730 644 730 650 722 650 722 656 723 656 723 663 719 663 M719 663 729 663 729 669 739 669 739 667 749 667 749 672 M719 663 719 677 717 677 717 691 718 691 M718 691 729 691 729 688 739 688 739 688 750 688 750 688 M718 691 718 710 726 710 726 728 733 728 M733 728 742 728 742 723 751 723 751 727 760 727 760 722 M733 728 733 736 730 736 730 744 728 744 728 753 734 753 734 761 729 761 M729 761 739 761 739 757 750 757 750 752 760 752 760 751 M729 761 729 768 730 768 730 774 729 774 729 781 732 781 732 788 733 788 M733 788 733 796 734 796 734 803 729 803 729 810 730 810 730 818 728 818 M728 818 744 818 744 817 759 817 759 822 M759 -29 766 -29 766 -31 774 -31 774 -23 781 -23 781 -20 788 -20 788 -21 M759 -29 759 -18 758 -18 758 -6 760 -6 760 5 759 5 M759 5 772 5 772 10 785 10 785 13 M759 5 759 11 756 11 756 18 758 18 758 24 762 24 762 30 760 30 M760 30 766 30 766 31 771 31 771 33 776 33 776 42 782 42 782 43 M760 30 760 40 756 40 756 49 750 49 750 59 751 59 M751 59 770 59 770 59 789 59 789 58 M760 103 769 103 769 102 778 102 778 98 M760 103 760 114 757 114 757 124 758 124 M758 124 774 124 774 120 791 120 791 119 M758 124 758 136 762 136 762 149 762 149 762 161 761 161 M761 161 772 161 772 159 783 159 783 160 M761 161 761 172 759 172 759 182 757 182 M757 182 769 182 769 187 781 187 781 192 M757 182 757 198 752 198 752 215 753 215 M753 215 764 215 764 216 775 216 775 208 786 208 786 209 M753 215 753 225 753 225 753 235 753 235 753 245 753 245 M753 245 761 245 761 248 768 248 768 246 776 246 776 250 784 250 784 247 M753 245 753 264 759 264 759 283 758 283 M758 283 758 291 754 291 754 299 753 299 753 307 749 307 M749 307 764 307 764 307 780 307 780 311 M749 307 749 315 749 315 749 322 749 322 749 330 749 330 M749 330 766 330 766 332 784 332 784 338 M749 330 749 342 750 342 750 355 755 355 755 367 761 367 M761 367 768 367 768 366 774 366 774 370 781 370 781 369 788 369 788 365 M761 367 761 376 758 376 758 386 759 386 759 395 763 395 M763 395 774 395 774 402 784 402 784 401 M748 424 763 424 763 426 778 426 778 432 793 432 793 431 M748 424 748 434 748 434 748 444 756 444 756 453 752 453 752 463 757 463 M757 463 772 463 772 462 787 462 787 453 M757 463 757 469 755 469 755 474 762 474 762 480 758 480 758 486 764 486 M764 486 772 486 772 486 779 486 779 494 M755 510 755 518 755 518 755 526 760 526 760 533 761 533 761 541 758 541 M758 541 764 541 764 544 770 544 770 544 777 544 777 547 783 547 783 548 M758 541 758 548 758 548 758 554 754 554 754 561 753 561 753 568 750 568 M750 568 761 568 761 571 772 571 772 573 783 573 783 581 794 581 794 581 M750 568 750 588 752 588 752 609 748 609 M748 609 768 609 768 606 788 606 788 603 M748 609 748 618 748 618 748 626 752 626 752 634 746 634 746 643 750 643 M750 643 762 643 762 639 773 639 773 639 785 639 785 642 M750 643 750 650 750 650 750 658 747 658 747 665 752 665 752 672 749 672 M749 672 761 672 761 672 772 672 772 672 784 672 784 669 M749 672 749 676 751 676 751 680 752 680 752 684 750 684 750 688 750 688 M750 688 750 696 756 696 756 705 752 705 752 714 760 714 760 722 760 722 M760 722 770 722 770 726 781 726 781 722 791 722 791 723 M760 722 760 732 759 732 759 741 757 741 757 751 760 751 M760 751 760 761 756 761 756 770 751 770 751 780 749 780 749 790 749 790 M749 790 749 801 754 801 754 811 759 811 759 822 759 822 M759 822 770 822 770 824 780 824 780 823 791 823 791 822 M759 822 759 826 758 826 758 830 756 830 756 835 757 835 757 839 760 839 M788 -21 799 -21 799 -24 810 -24 810 -17 821 -17 821 -18 M788 -21 788 -12 784 -12 784 -4 783 -4 783 4 783 4 783 13 785 13 M785 13 793 13 793 8 801 8 801 8 809 8 809 4 817 4 817 2 M785 13 785 28 785 28 785 43 782 43 M782 43 795 43 795 46 809 46 809 39 822 39 822 41 M782 43 782 47 783 47 783 50 788 50 788 54 785 54 785 58 789 58 M789 58 799 58 799 66 809 66 809 69 819 69 819 73 M789 58 789 68 789 68 789 78 784 78 784 88 782 88 782 98 778 98 M778 98 787 98 787 98 796 98 796 91 805 91 805 88 814 88 814 89 M778 98 778 103 782 103 782 108 787 108 787 114 785 114 785 119 791 119 M791 119 798 119 798 120 804 120 804 124 810 124 810 126 817 126 817 131 M791 119 791 133 790 133 790 146 789 146 789 160 783 160 M783 160 792 160 792 159 802 159 802 159 811 159 811 160 M783 160 783 171 784 171 784 181 782 181 782 192 781 192 M781 192 802 192 802 184 823 184 823 182 M781 192 781 196 780 196 780 200 786 200 786 205 788 205 788 209 786 209 M786 209 794 209 794 211 802 211 802 218 810 218 810 213 818 213 818 219 M786 209 786 218 787 218 787 228 786 228 786 238 785 238 785 247 784 247 M784 247 800 247 800 245 815 245 815 241 M784 247 784 255 787 255 787 263 788 263 788 271 781 271 781 279 785 279 M785 279 798 279 798 279 812 279 812 280 M785 279 785 287 787 287 787 295 785 295 785 303 784 303 784 311 780 311 M780 311 800 311 800 306 821 306 821 305 M780 311 780 318 780 318 780 324 780 324 780 331 782 331 782 338 784 338 M784 338 790 338 790 336 796 336 796 337 803 337 803 338 809 338 809 341 M784 338 784 345 782 345 782 352 788 352 788 358 789 358 789 365 788 365 M788 365 788 383 784 383 784 401 784 401 M784 401 795 401 795 398 806 398 806 400 817 400 817 402 M784 401 784 408 788 408 788 416 792 416 792 424 787 424 787 431 793 431 M793 431 808 431 808 425 822 425 822 426 M793 431 793 436 795 436 795 442 792 442 792 448 785 448 785 453 787 453 M787 453 794 453 794 453 802 453 802 459 809 459 809 455 816 455 816 457 M787 453 787 463 784 463 784 474 783 474 783 484 784 484 784 494 779 494 M779 494 779 501 785 501 785 508 786 508 786 514 790 514 790 521 789 521 M789 521 796 521 796 522 804 522 804 517 811 517 811 519 M789 521 789 530 790 530 790 539 784 539 784 548 783 548 M783 548 791 548 791 549 798 549 798 547 806 547 806 547 814 547 814 547 M783 548 783 556 784 556 784 564 792 564 792 573 791 573 791 581 794 581 M794 581 799 581 799 581 804 581 804 578 809 578 809 581 814 581 814 576 M794 581 794 588 792 588 792 596 791 596 791 603 788 603 M788 603 795 603 795 600 803 600 803 600 810 600 810 599 M788 603 788 622 786 622 786 642 785 642 M785 642 785 651 785 651 785 660 783 660 783 669 784 669 M784 669 797 669 797 670 810 670 810 668 M784 669 784 680 784 680 784 691 785 691 785 702 788 702 M788 702 796 702 796 698 804 698 804 697 813 697 813 696 821 696 821 690 M788 702 788 712 793 712 793 723 791 723 M791 723 800 723 800 722 809 722 809 727 818 727 818 724 M791 723 791 730 788 730 788 738 781 738 781 745 782 745 782 752 778 752 M778 752 797 752 797 749 816 749 816 748 M778 752 778 770 782 770 782 787 785 787 M785 787 797 787 797 794 809 794 809 794 M785 787 785 799 788 799 788 810 787 810 787 822 791 822 M791 822 801 822 801 818 812 818 812 818 822 818 822 816 M791 822 791 832 785 832 785 841 783 841 783 851 779 851 M821 -18 821 -8 819 -8 819 2 817 2 M817 2 829 2 829 5 841 5 841 9 853 9 853 10 M817 2 817 22 816 22 816 41 822 41 M822 41 832 41 832 42 841 42 841 40 851 40 851 43 M822 41 822 52 820 52 820 62 823 62 823 73 819 73 M819 73 830 73 830 62 842 62 842 59 M819 73 819 81 817 81 817 89 814 89 M814 89 828 89 828 88 841 88 841 91 M814 89 814 110 812 110 812 131 817 131 M817 131 822 131 822 130 828 130 828 125 834 125 834 123 839 123 839 119 M817 131 817 141 816 141 816 150 809 150 809 160 811 160 M811 160 829 160 829 164 847 164 847 162 M811 160 811 166 814 166 814 171 818 171 818 176 820 176 820 182 823 182 M823 182 834 182 834 185 845 185 845 193 M823 182 823 194 820 194 820 207 822 207 822 219 818 219 M818 219 818 226 814 226 814 234 815 234 815 241 815 241 M815 241 826 241 826 244 837 244 837 246 848 246 848 244 M815 241 815 260 814 260 814 280 812 280 M812 280 812 288 812 288 812 297 817 297 817 305 821 305 M821 305 828 305 828 308 835 308 835 304 842 304 842 307 M821 305 821 317 813 317 813 329 814 329 814 341 809 341 M809 341 828 341 828 341 848 341 848 343 M809 341 809 352 816 352 816 362 820 362 M820 362 834 362 834 359 849 359 849 364 M820 362 820 382 821 382 821 402 817 402 M817 402 817 414 821 414 821 426 822 426 M822 426 830 426 830 425 838 425 838 430 845 430 845 432 853 432 853 434 M822 426 822 436 817 436 817 447 817 447 817 457 816 457 M816 457 825 457 825 451 833 451 833 448 842 448 842 449 M816 457 816 463 815 463 815 469 810 469 810 475 811 475 811 481 811 481 M811 481 819 481 819 484 826 484 826 485 834 485 834 483 842 483 842 484 M811 519 832 519 832 518 852 518 852 522 M811 519 811 533 813 533 813 547 814 547 M814 547 823 547 823 541 832 541 832 539 842 539 842 545 851 545 851 539 M814 547 814 557 812 557 812 566 817 566 817 576 814 576 M814 576 826 576 826 580 839 580 839 578 851 578 851 579 M814 576 814 588 809 588 809 599 810 599 M810 599 823 599 823 606 835 606 835 609 848 609 848 614 M810 599 810 616 814 616 814 634 824 634 M824 634 828 634 828 630 832 630 832 630 835 630 835 633 839 633 839 630 M824 634 824 645 819 645 819 657 811 657 811 668 810 668 M810 668 830 668 830 671 850 671 850 673 M810 668 810 675 815 675 815 683 817 683 817 690 821 690 M821 690 828 690 828 692 835 692 835 689 842 689 842 693 849 693 849 693 M821 690 821 701 816 701 816 713 816 713 816 724 818 724 M818 724 828 724 828 725 837 725 837 729 847 729 847 730 M818 724 818 732 821 732 821 740 813 740 813 748 816 748 M816 748 828 748 828 751 840 751 840 753 M816 748 816 771 812 771 812 794 809 794 M809 794 826 794 826 786 842 786 842 780 M809 794 809 801 817 801 817 809 821 809 821 816 822 816 M822 816 834 816 834 814 846 814 846 811 M822 816 822 829 822 829 822 842 817 842" fill="none" stroke="#5f6467" stroke-width="1" shape-rendering="crispEdges" transform="translate(0.5 0.5)"/>
<path d="M6.0 705.0 L8.3 703.8 L9.8 701.7 L11.9 700.4 L14.0 699.0 L16.7 699.1 L19.2 697.5 L22.0 698.0 L24.7 698.4 L27.2 700.0 L30.0 700.0 L28.1 702.8 L27.0 706.0 L30.5 706.7 L34.0 707.0 L36.5 705.9 L39.1 705.9 L41.8 705.8 L44.3 705.1 L47.0 706.0 L47.2 709.5 L48.0 713.0 L48.1 715.5 L47.5 718.1 L48.6 720.5 L49.0 723.0 L51.3 724.9 L54.4 724.9 L57.0 726.0 L59.7 726.5 L62.6 726.5 L65.3 727.4 L68.0 728.0 L68.9 730.7 L71.4 732.0 L73.0 734.0 L72.3 736.8 L69.9 738.2 L68.0 740.0 L70.7 740.7 L72.5 742.9 L75.0 744.0 L78.5 743.0 L82.0 742.0 L85.0 742.3 L87.9 743.7 L91.0 743.0 L92.2 745.7 L95.1 747.1 L96.0 750.0 L99.5 750.3 L101.8 753.1 L105.0 754.0 L107.2 755.5 L109.5 757.0 L112.0 758.0 L113.4 755.8 L113.9 753.0 L116.1 751.3 L118.3 749.6 L119.0 747.0 L122.1 745.9 L124.6 743.3 L128.0 743.0 L130.0 741.2 L133.0 741.9 L135.0 740.0 L137.3 742.4 L140.2 744.1 L142.0 747.0 L144.4 749.1 L146.8 751.2 L150.0 752.0 L152.2 754.4 L155.1 755.6 L158.0 757.0 L160.0 755.2 L160.0 752.1 L162.1 750.4 L164.2 748.6 L165.0 746.0 L167.3 743.9 L169.5 741.8 L173.0 741.5 L175.0 739.0 L177.7 738.2 L179.5 735.4 L182.0 734.3 L185.0 734.0 L187.4 735.9 L189.4 738.4 L192.3 739.5 L195.0 741.0 L196.4 743.4 L199.6 743.8 L200.9 746.4 L203.0 748.0 L206.3 748.6 L209.2 750.3 L212.0 752.0 L214.8 751.8 L217.2 753.1 L220.0 752.7 L222.3 754.8 L225.0 755.0 L227.6 755.7 L230.2 756.6 L232.9 756.6 L235.8 755.3 L238.2 757.5 L241.0 757.0 L238.8 754.9 L237.2 752.2 L234.2 751.0 L232.0 749.0 L229.2 748.7 L227.4 746.2 L224.4 746.1 L222.9 743.2 L220.0 743.0 L217.6 741.5 L215.7 739.4 L212.8 738.8 L210.2 737.8 L208.0 736.0 L206.2 734.1 L204.3 732.4 L201.9 731.3 L199.7 730.0 L198.0 728.0 L196.1 725.9 L194.9 723.2 L192.2 721.7 L191.0 719.0 L188.9 716.3 L188.3 713.0 L187.0 710.0 L189.0 707.9 L189.5 704.7 L192.0 703.0 L194.0 700.6 L197.4 699.9 L199.0 697.0 L200.9 694.3 L204.1 692.8 L206.0 690.0 L206.6 686.4 L208.0 683.0 L206.7 685.9 L204.0 687.5 L201.3 689.2 L200.0 692.0 L197.4 691.8 L195.2 694.1 L192.4 693.0 L190.0 694.0 L187.1 692.7 L184.0 692.0 L181.0 691.0 L180.0 688.5 L178.4 686.3 L177.0 684.0 L177.8 681.1 L180.0 679.0 L183.2 677.9 L186.0 676.0 L187.9 672.9 L191.0 671.0 L193.2 669.6 L196.0 669.8 L198.0 668.0 L201.5 667.7 L205.0 667.0 L208.5 666.0 L212.0 665.0 L213.5 661.6 L214.0 658.0 L215.0 655.5 L216.0 653.0 L218.9 651.7 L222.0 651.0 L224.6 650.4 L226.8 648.5 L229.6 648.5 L232.0 647.1 L235.2 648.6 L237.7 647.7 L240.0 646.0 L243.2 646.3 L246.3 645.0 L249.5 645.8 L251.1 648.2 L254.0 648.8 L255.8 650.9 L258.3 652.2 L261.0 652.3 L263.7 652.5 L266.3 652.8 L269.0 653.1 L271.6 652.5 L274.8 652.4 L277.7 654.3 L281.0 654.0 L283.2 652.2 L285.7 650.8 L287.5 648.5 L290.1 649.6 L292.8 648.4 L295.4 649.3 L298.1 651.0 L300.7 652.8 L303.0 655.0 L303.0 651.7 L305.0 649.0 L306.1 646.1 L305.8 643.0 L305.5 640.0 L305.6 637.5 L305.9 635.0 L306.8 632.5 L306.0 630.0 L306.0 626.7 L308.0 624.0 L312.0 622.0 L314.6 622.2 L317.0 623.0 L320.7 626.0 L320.4 628.8 L320.9 631.6 L321.2 634.4 L321.9 637.2 L321.5 640.0 L323.3 642.4 L323.5 645.5 L325.0 648.0 L326.9 650.0 L327.4 653.0 L329.0 655.2 L330.5 657.5 L333.0 659.0 L336.5 661.0 L339.2 659.7 L342.2 659.5 L344.8 657.8 L347.8 657.6 L350.7 657.2 L351.4 654.3 L353.9 652.5 L356.3 650.7 L357.0 647.7 L359.9 646.4 L362.0 644.0 L364.4 642.7 L366.8 641.5 L369.9 642.0 L372.0 640.0 L372.4 637.1 L375.4 635.5 L376.0 632.7 L378.8 635.4 L382.4 636.6 L383.1 633.9 L386.4 633.0 L387.1 630.3 L388.4 633.6 L390.3 636.6 L392.4 638.0 L394.4 639.7 L396.1 641.6 L398.2 643.0 L400.8 644.4 L403.0 646.5 L406.0 647.0 L408.9 647.6 L411.5 645.9 L414.3 644.8 L417.3 646.3 L420.0 645.3 L422.6 646.3 L425.2 646.9 L428.2 646.2 L430.9 646.8 L433.1 649.3 L436.0 649.0 L438.7 649.4 L441.2 650.4 L443.5 652.3 L446.6 651.2 L449.0 653.0 L452.0 652.4 L454.2 654.3 L456.7 655.4 L459.5 655.6 L462.1 656.2 L463.6 658.7 L465.6 660.4 L468.0 661.4 L470.2 662.6 L472.2 664.2 L475.0 664.6 L476.9 666.5 L479.3 667.7 L481.1 669.8 L483.2 671.3 L485.7 672.4 L488.0 673.7 L489.9 675.6 L492.8 676.2 L494.7 678.0 L496.9 679.6 L498.3 682.2 L501.0 683.0 L502.1 685.9 L504.8 687.7 L506.0 690.5 L505.4 693.3 L508.1 695.5 L508.6 698.0 L508.5 700.7 L508.6 703.4 L511.2 705.3 L511.3 709.1 L514.0 711.0 L516.6 710.4 L519.3 710.2 L522.1 711.0 L524.7 710.0 L527.4 710.0 L530.0 709.4 L533.0 708.8 L536.0 708.4 L539.0 708.0 L541.7 707.8 L543.3 705.2 L545.8 704.6 L548.0 703.4 L550.4 702.5 L552.5 700.8 L554.9 700.0 L557.6 699.9 L560.0 699.0 L562.8 698.9 L565.1 697.3 L567.4 695.7 L570.3 696.0 L573.2 696.3 L575.3 693.7 L578.4 694.6 L580.8 693.0 L582.2 690.6 L585.1 690.3 L586.4 687.8 L589.0 687.0 L590.4 684.7 L592.5 683.2 L594.9 681.9 L596.2 679.5 L598.0 677.6 L600.0 675.9 L604.0 674.3 L606.9 673.9 L609.8 673.9 L612.7 673.7 L614.8 678.0 L618.1 679.0 L621.0 681.0 L623.7 683.6 L627.4 684.3 L630.0 685.3 L631.6 687.5 L634.4 689.0 L635.9 691.7 L637.9 693.3 L640.0 694.8 L641.4 697.3 L642.2 700.0 L644.3 704.3 L646.0 706.8 L648.5 708.5 L651.5 709.0 L653.2 711.7 L655.9 712.8 L657.0 716.0 L657.3 718.8 L656.0 721.6 L657.5 724.5 L657.0 727.3 L659.7 728.7 L662.4 729.9 L664.8 731.9 L667.4 733.3 L669.6 735.2 L670.6 738.1 L672.9 739.9 L674.1 742.6 L676.6 744.2 L678.0 746.8 L679.6 749.7 L681.0 752.7 L681.9 755.8 L682.5 759.1 L684.0 762.0 L686.9 762.0 L689.6 761.0 L692.3 759.8 L695.1 759.5 L698.0 760.0 L700.1 762.3 L701.4 765.0 L702.7 767.7 L703.4 770.7 L704.4 773.5 L706.3 775.7 L706.4 778.9 L708.6 781.0 L710.5 783.2 L711.8 785.7 L713.3 788.1 L714.0 791.0 L716.0 812.0 L0.0 812.0 L0.0 705.0Z" fill="#004466" stroke="#000" stroke-width="1" stroke-linejoin="round"/>
<path d="M806.0 555.0 L797.0 565.0 L793.0 585.0 L790.0 610.0 L791.0 630.0 L788.0 645.0 L782.0 650.0 L786.0 660.0 L806.0 662.0Z" fill="#5d514d"/>
<path d="M195 712h2v1h-2zM207 708h3v1h-3zM223 699h2v1h-2zM215 675h1v2h-1zM224 674h2v2h-2zM214 709h3v2h-3zM211 687h1v2h-1zM225 688h2v1h-2zM223 683h2v2h-2zM216 693h2v2h-2zM222 684h2v1h-2zM211 692h3v2h-3zM212 696h1v3h-1zM223 693h1v2h-1zM211 678h2v1h-2zM205 722h2v1h-2zM224 672h3v1h-3zM193 706h2v1h-2zM218 680h3v1h-3zM201 713h3v2h-3zM220 707h2v3h-2zM227 691h1v3h-1zM208 694h3v2h-3zM208 676h2v1h-2zM221 671h2v1h-2zM211 699h3v2h-3zM217 677h3v1h-3zM211 692h1v1h-1zM211 717h2v2h-2zM209 724h2v2h-2zM203 702h2v3h-2zM206 722h3v3h-3zM225 697h3v2h-3zM220 683h2v2h-2zM221 688h2v2h-2zM227 675h2v2h-2zM227 675h2v1h-2zM202 711h2v3h-2zM212 722h1v1h-1zM213 720h3v2h-3zM212 726h2v2h-2zM219 679h3v1h-3zM201 699h1v2h-1zM218 679h3v2h-3zM218 709h1v2h-1zM220 680h2v1h-2zM217 683h2v1h-2zM210 678h3v1h-3zM223 680h1v2h-1zM212 703h2v2h-2zM197 708h2v1h-2zM220 706h2v1h-2zM195 721h2v1h-2zM203 700h3v1h-3zM209 680h3v2h-3zM228 686h1v1h-1zM208 717h3v1h-3zM211 682h3v2h-3zM212 716h3v3h-3zM210 703h2v3h-2zM217 713h2v1h-2zM226 688h3v2h-3zM201 698h2v1h-2zM201 707h3v2h-3zM204 698h2v1h-2zM222 685h2v2h-2zM219 672h1v2h-1zM217 691h2v2h-2zM222 697h2v2h-2zM194 712h2v2h-2zM203 716h2v1h-2zM214 694h2v2h-2zM228 689h3v2h-3zM220 677h1v2h-1zM213 719h2v1h-2zM207 687h2v1h-2zM199 714h1v2h-1zM200 699h2v1h-2zM210 728h2v1h-2zM213 701h2v2h-2zM208 677h2v2h-2zM218 706h3v2h-3zM220 688h3v2h-3zM205 730h3v2h-3zM221 702h3v2h-3zM201 702h2v3h-2zM198 702h1v3h-1zM207 716h3v2h-3zM211 701h2v2h-2zM220 688h3v1h-3zM222 690h2v3h-2zM222 696h2v2h-2zM208 715h3v2h-3zM209 678h3v2h-3zM199 713h2v2h-2zM217 679h1v2h-1zM206 731h2v1h-2zM220 684h2v2h-2zM198 723h1v1h-1zM205 720h1v1h-1zM211 720h2v1h-2zM195 716h2v3h-2zM196 715h1v3h-1zM219 679h1v2h-1zM200 699h2v3h-2zM225 692h2v3h-2zM210 718h3v1h-3zM197 701h2v2h-2zM222 671h2v2h-2zM225 698h2v1h-2zM210 716h3v3h-3zM214 711h2v1h-2zM223 689h2v2h-2zM222 679h2v2h-2zM227 686h2v3h-2zM206 730h2v1h-2zM190 709h1v2h-1zM206 712h1v1h-1zM215 717h2v2h-2zM222 681h3v2h-3zM207 711h1v1h-1zM195 720h1v2h-1zM212 690h2v1h-2zM210 682h2v3h-2zM221 707h1v1h-1zM213 704h1v3h-1zM218 708h2v3h-2zM201 704h1v3h-1zM210 717h3v1h-3zM205 714h2v2h-2zM204 716h1v1h-1zM192 708h1v1h-1zM197 710h2v2h-2zM210 708h3v2h-3zM203 717h3v3h-3zM199 705h2v3h-2zM204 725h3v3h-3zM199 705h2v2h-2zM223 672h2v2h-2zM206 704h2v3h-2zM211 705h2v3h-2zM203 717h3v2h-3zM217 704h2v3h-2zM216 675h3v2h-3zM224 692h2v2h-2zM213 684h2v1h-2zM211 720h1v3h-1zM220 690h2v3h-2zM210 691h2v2h-2zM209 701h1v3h-1zM209 698h3v3h-3zM192 713h2v2h-2zM207 687h2v2h-2zM221 691h2v1h-2zM229 675h2v1h-2zM197 706h2v1h-2zM220 696h2v1h-2zM207 696h2v1h-2zM208 730h3v2h-3zM202 699h2v1h-2zM202 712h1v1h-1zM225 676h2v3h-2zM203 703h1v2h-1zM219 707h2v2h-2zM193 716h3v3h-3zM194 705h2v3h-2zM200 725h3v2h-3zM208 697h2v2h-2zM201 714h2v2h-2zM221 690h1v2h-1zM215 715h2v3h-2zM226 697h2v3h-2zM216 679h2v1h-2zM192 709h1v3h-1zM225 698h2v2h-2zM227 685h2v2h-2zM199 703h1v3h-1zM225 674h2v2h-2zM226 677h1v2h-1zM218 673h2v1h-2zM202 715h1v2h-1zM212 714h2v3h-2zM202 713h1v2h-1zM196 710h3v2h-3zM220 694h3v2h-3zM227 686h1v2h-1zM215 680h3v2h-3zM200 705h2v2h-2zM220 709h1v3h-1zM216 700h2v3h-2zM204 723h2v3h-2zM222 698h3v3h-3zM229 676h3v2h-3zM215 673h2v3h-2zM227 687h2v1h-2zM213 693h2v3h-2zM201 712h1v1h-1zM209 678h2v2h-2zM208 714h1v3h-1zM208 679h1v2h-1zM220 674h2v1h-2zM218 688h2v2h-2zM207 689h2v3h-2zM200 715h2v2h-2zM211 694h1v2h-1zM211 692h1v2h-1zM204 719h2v3h-2zM222 679h3v2h-3zM222 701h3v3h-3zM209 706h2v3h-2zM219 676h2v3h-2zM220 687h1v2h-1zM218 683h3v3h-3zM210 692h3v3h-3zM207 700h2v2h-2zM214 718h2v2h-2zM213 682h3v1h-3zM225 694h3v3h-3zM207 729h2v2h-2zM222 688h2v2h-2zM206 723h1v2h-1zM212 710h2v2h-2zM224 694h3v2h-3zM220 677h3v2h-3zM218 687h1v1h-1zM219 692h2v3h-2zM197 706h1v3h-1zM217 704h3v1h-3zM211 696h3v2h-3zM214 695h2v3h-2zM223 689h2v1h-2zM200 703h2v3h-2zM215 692h2v2h-2zM218 678h1v2h-1zM216 674h2v1h-2zM204 725h3v2h-3zM210 711h3v3h-3zM211 691h2v3h-2zM219 710h2v2h-2zM194 707h2v1h-2zM214 710h2v2h-2zM209 705h2v2h-2zM205 698h2v3h-2zM215 700h3v2h-3zM210 706h2v3h-2zM219 686h2v2h-2zM209 692h1v1h-1zM217 699h3v3h-3zM229 676h2v2h-2zM211 706h3v1h-3zM222 685h1v1h-1zM222 675h1v1h-1zM219 709h1v1h-1zM215 683h1v1h-1zM211 698h3v1h-3zM204 721h1v2h-1zM212 677h2v3h-2zM216 684h1v3h-1zM210 716h2v2h-2zM220 679h2v1h-2zM215 688h2v1h-2zM201 722h3v1h-3zM205 713h3v1h-3zM223 695h2v2h-2zM222 695h2v1h-2zM198 718h3v1h-3zM225 690h1v2h-1zM217 710h2v2h-2zM216 675h2v1h-2zM202 729h2v3h-2zM209 701h1v2h-1zM209 727h2v2h-2zM219 704h1v2h-1zM205 722h1v3h-1zM210 677h1v1h-1zM204 717h3v1h-3zM208 721h3v1h-3zM210 695h2v2h-2zM193 711h2v3h-2zM211 691h1v2h-1zM207 715h2v2h-2zM197 709h3v2h-3zM214 694h2v2h-2zM205 724h3v3h-3zM214 719h2v3h-2zM220 682h2v2h-2zM210 717h2v2h-2zM216 678h1v1h-1zM220 687h2v2h-2zM204 716h2v1h-2zM226 680h2v1h-2zM204 706h1v1h-1zM224 696h3v3h-3zM212 716h1v2h-1zM219 679h2v2h-2zM193 716h2v2h-2zM208 706h3v2h-3zM225 683h2v2h-2zM209 710h1v3h-1zM195 707h3v2h-3zM210 723h1v2h-1zM213 695h3v3h-3zM229 679h2v2h-2zM206 714h2v2h-2zM207 714h3v2h-3zM219 701h1v2h-1zM203 705h2v3h-2zM194 714h2v1h-2zM197 721h2v2h-2zM222 689h1v2h-1zM217 705h2v2h-2zM205 712h3v3h-3zM194 710h2v3h-2zM217 688h2v3h-2zM200 715h3v3h-3zM222 686h3v3h-3zM207 724h2v1h-2zM219 698h1v2h-1zM206 703h1v1h-1zM224 679h2v3h-2zM207 697h1v1h-1zM228 676h2v1h-2zM209 726h1v1h-1zM212 709h2v2h-2zM219 676h2v1h-2zM201 717h1v1h-1zM223 678h1v2h-1zM206 723h2v1h-2zM211 691h3v3h-3zM207 680h2v2h-2zM216 711h3v3h-3zM200 727h2v2h-2zM212 691h1v2h-1zM222 705h2v2h-2zM193 710h1v2h-1zM218 693h1v1h-1zM205 730h3v3h-3zM213 688h2v2h-2zM208 720h1v3h-1zM214 692h3v3h-3zM207 700h3v2h-3zM208 706h2v2h-2zM222 687h3v2h-3zM221 671h1v3h-1zM215 708h3v1h-3zM222 703h2v2h-2zM209 699h2v1h-2zM220 678h3v3h-3zM218 680h1v2h-1zM218 677h1v2h-1zM224 681h3v2h-3zM218 713h3v3h-3zM204 715h2v2h-2zM200 719h3v2h-3zM218 713h1v2h-1zM215 678h2v3h-2zM210 688h1v3h-1zM218 711h1v3h-1zM202 704h2v3h-2zM196 720h2v2h-2zM207 726h2v2h-2zM206 709h2v2h-2zM210 692h2v2h-2zM226 680h1v3h-1zM222 703h2v2h-2zM211 685h3v3h-3zM220 689h2v3h-2zM199 721h3v3h-3zM220 678h3v1h-3zM202 703h2v2h-2zM215 696h3v3h-3zM207 714h3v3h-3zM210 700h1v1h-1zM212 705h1v3h-1zM224 695h2v3h-2zM215 702h1v2h-1zM210 716h3v2h-3zM206 728h1v2h-1zM220 684h2v2h-2zM213 718h1v1h-1zM157 732h2v2h-2zM163 728h2v3h-2zM155 736h2v2h-2zM157 745h2v1h-2zM156 747h3v1h-3zM173 729h2v3h-2zM167 739h2v2h-2zM166 727h2v1h-2zM171 736h3v2h-3zM163 738h2v1h-2zM152 733h2v3h-2zM162 740h2v1h-2zM181 730h1v2h-1zM153 744h2v2h-2zM174 729h3v3h-3zM150 744h2v2h-2zM172 727h3v3h-3zM151 742h2v3h-2zM162 741h2v2h-2zM163 726h3v3h-3zM172 723h2v2h-2zM164 737h1v2h-1zM158 752h2v2h-2zM160 730h1v1h-1zM156 731h2v2h-2zM151 738h2v3h-2zM152 745h3v2h-3zM165 744h3v1h-3zM161 742h2v3h-2zM173 725h1v1h-1zM181 732h2v3h-2zM153 752h3v2h-3zM168 737h2v3h-2zM164 742h2v2h-2zM171 736h2v1h-2zM164 743h2v2h-2zM153 740h2v3h-2zM168 734h3v3h-3zM182 734h2v2h-2zM149 744h1v2h-1zM175 723h1v1h-1zM150 750h1v2h-1zM171 738h1v2h-1zM165 740h2v2h-2zM157 742h1v2h-1zM153 743h2v3h-2zM161 731h2v2h-2zM170 731h2v1h-2zM169 732h1v1h-1zM170 737h2v1h-2zM159 754h3v2h-3zM173 732h2v2h-2zM174 733h1v2h-1zM155 736h2v3h-2zM166 739h3v2h-3zM168 736h1v2h-1zM173 733h2v2h-2zM176 729h2v2h-2zM168 735h2v3h-2zM161 744h2v3h-2zM173 735h3v2h-3zM162 740h1v1h-1zM155 731h2v1h-2zM162 736h3v3h-3zM149 738h2v1h-2zM150 736h1v2h-1zM176 737h1v3h-1zM183 732h1v2h-1zM153 735h2v2h-2zM163 737h2v3h-2zM158 743h2v1h-2zM157 734h3v3h-3zM169 727h2v1h-2zM170 731h1v3h-1zM170 733h3v3h-3zM158 744h1v3h-1zM172 738h3v2h-3zM159 728h3v3h-3zM176 724h2v3h-2zM150 739h1v1h-1zM170 723h1v2h-1zM174 737h2v2h-2zM153 744h3v2h-3zM156 753h2v1h-2zM181 734h1v2h-1zM168 731h1v2h-1zM169 736h2v2h-2zM151 752h2v2h-2zM154 744h2v1h-2zM167 733h2v3h-2zM177 731h2v2h-2zM156 749h1v1h-1zM172 732h2v2h-2zM164 740h2v2h-2zM157 734h2v2h-2zM157 730h1v2h-1zM177 728h3v1h-3zM178 729h3v1h-3zM167 736h3v2h-3zM169 740h2v2h-2zM152 747h2v3h-2zM167 726h3v2h-3zM175 725h1v2h-1zM161 735h2v2h-2zM159 747h2v1h-2zM165 742h2v2h-2zM160 749h1v2h-1zM173 739h3v2h-3zM162 731h1v2h-1zM164 735h1v3h-1zM152 732h3v2h-3zM157 745h3v2h-3zM176 736h3v3h-3zM169 738h2v2h-2zM162 737h3v3h-3zM164 733h3v2h-3zM166 744h1v3h-1zM152 741h2v2h-2zM163 735h1v3h-1zM156 743h2v3h-2zM181 734h2v2h-2zM170 736h3v1h-3zM149 735h2v1h-2zM167 739h3v2h-3zM157 747h3v2h-3zM163 733h2v1h-2zM159 741h3v1h-3zM153 747h2v2h-2zM178 725h2v3h-2zM174 723h1v1h-1zM177 729h1v3h-1zM152 740h2v2h-2zM159 731h2v2h-2zM180 735h1v2h-1zM171 737h2v1h-2zM154 745h1v1h-1zM184 734h1v2h-1zM152 739h3v1h-3zM163 747h2v2h-2zM153 732h3v3h-3zM159 740h1v2h-1zM175 736h1v2h-1zM157 752h2v2h-2zM159 740h2v2h-2zM169 725h1v2h-1zM162 731h3v1h-3zM158 744h1v1h-1zM165 741h2v2h-2zM162 726h3v2h-3zM174 724h2v2h-2zM151 735h1v1h-1zM161 750h3v2h-3zM152 739h2v2h-2zM152 734h1v2h-1zM162 729h3v2h-3zM172 727h3v2h-3zM150 747h3v2h-3zM157 750h1v1h-1zM159 750h2v2h-2zM157 754h2v2h-2zM121 750h2v2h-2zM121 751h2v2h-2zM112 748h2v1h-2zM129 745h2v1h-2zM143 749h3v2h-3zM148 746h1v1h-1zM113 756h2v2h-2zM114 749h3v2h-3zM136 750h1v2h-1zM137 747h2v2h-2zM127 753h2v3h-2zM132 741h3v3h-3zM111 746h2v1h-2zM142 753h2v3h-2zM112 752h2v2h-2zM118 747h3v1h-3zM116 743h3v2h-3zM125 750h2v2h-2zM123 745h2v2h-2zM128 743h1v3h-1zM142 750h2v3h-2zM100 749h2v2h-2zM133 753h3v2h-3zM129 745h2v1h-2zM104 751h3v2h-3zM109 748h2v1h-2zM102 747h2v3h-2zM138 750h2v1h-2zM136 753h2v2h-2zM113 752h2v2h-2zM100 749h3v2h-3zM138 753h2v2h-2zM103 755h1v2h-1zM130 750h1v1h-1zM135 754h3v1h-3zM110 747h2v2h-2zM110 752h2v1h-2zM120 743h3v3h-3zM106 754h1v3h-1zM105 747h2v2h-2zM121 754h2v2h-2zM128 748h1v2h-1zM136 743h3v2h-3zM142 744h3v2h-3zM142 751h2v2h-2zM109 750h2v1h-2zM134 754h2v2h-2zM148 756h1v2h-1zM115 744h2v3h-2zM138 743h2v2h-2zM106 749h2v2h-2zM137 741h2v2h-2zM127 753h2v2h-2zM145 752h1v3h-1zM119 743h1v2h-1zM109 755h3v1h-3zM143 744h2v2h-2zM137 744h2v2h-2zM117 751h2v3h-2zM130 742h2v2h-2zM148 745h2v1h-2zM136 752h2v2h-2zM123 747h3v3h-3zM110 756h1v1h-1zM149 751h2v2h-2zM144 750h1v1h-1zM135 746h3v1h-3zM146 751h2v2h-2zM127 753h1v2h-1zM109 746h2v2h-2zM137 743h1v2h-1zM114 747h1v2h-1zM135 755h1v2h-1zM145 752h2v2h-2zM133 745h3v3h-3zM130 749h1v1h-1zM105 752h1v2h-1zM141 750h2v2h-2zM105 746h2v3h-2zM141 744h2v2h-2zM123 744h2v1h-2zM124 749h2v1h-2zM110 752h1v2h-1zM126 745h2v2h-2zM105 752h1v2h-1zM111 748h2v1h-2zM124 748h2v1h-2zM134 743h2v2h-2zM102 744h2v2h-2zM145 748h2v2h-2zM144 746h2v3h-2zM108 744h1v3h-1zM127 753h3v2h-3zM111 755h3v3h-3zM107 756h1v3h-1zM141 749h3v2h-3zM129 743h2v1h-2zM105 753h1v1h-1zM130 742h1v2h-1zM139 750h2v3h-2zM102 754h1v2h-1zM112 746h2v2h-2zM146 744h2v1h-2zM100 754h2v3h-2zM109 746h2v2h-2zM110 755h2v2h-2zM106 749h2v2h-2zM135 743h2v2h-2zM125 746h3v2h-3zM144 749h1v1h-1zM109 755h3v3h-3zM113 746h3v3h-3zM140 742h1v2h-1zM100 747h1v3h-1zM137 746h1v2h-1zM100 750h3v2h-3zM106 752h1v3h-1zM147 752h1v2h-1zM143 748h2v1h-2zM121 747h2v2h-2zM791 604h1v2h-1zM792 627h3v3h-3zM802 590h2v3h-2zM800 612h3v2h-3zM796 572h1v1h-1zM793 638h3v2h-3zM803 584h3v1h-3zM800 564h2v1h-2zM794 615h1v3h-1zM802 642h2v1h-2zM804 628h3v1h-3zM784 650h2v2h-2zM804 581h2v2h-2zM805 629h2v2h-2zM795 622h2v2h-2zM803 558h3v2h-3zM803 620h2v3h-2zM795 618h1v2h-1zM798 608h2v3h-2zM799 582h2v2h-2zM796 581h2v1h-2zM802 581h2v2h-2zM803 580h3v2h-3zM792 657h2v2h-2zM798 596h2v2h-2zM804 580h3v2h-3zM801 619h2v2h-2zM801 602h2v3h-2zM803 593h2v2h-2zM796 648h2v2h-2zM804 616h2v2h-2zM792 628h3v3h-3zM794 621h3v2h-3zM795 646h2v3h-2zM801 631h1v2h-1zM796 637h2v2h-2zM796 601h2v2h-2zM798 597h2v2h-2zM802 653h2v2h-2zM804 607h2v3h-2zM802 655h1v2h-1zM798 627h3v2h-3zM804 565h2v1h-2zM803 578h1v1h-1zM797 627h2v3h-2zM803 605h3v2h-3zM800 657h2v2h-2zM798 577h1v2h-1zM796 576h1v1h-1zM790 655h3v3h-3zM796 572h2v1h-2zM802 619h1v3h-1zM786 656h2v1h-2zM801 655h2v1h-2zM789 659h2v2h-2zM795 619h3v2h-3zM799 610h2v1h-2zM789 648h3v2h-3zM805 624h2v2h-2zM805 564h1v2h-1zM802 589h1v1h-1zM795 576h2v2h-2zM804 591h2v2h-2zM802 633h2v1h-2zM791 625h3v2h-3zM795 598h3v2h-3zM799 585h1v3h-1zM798 614h3v3h-3zM794 607h2v3h-2zM805 598h3v2h-3zM787 656h2v3h-2zM793 604h1v2h-1zM793 587h1v2h-1zM784 649h2v2h-2zM793 623h3v2h-3zM797 579h3v2h-3zM793 654h1v2h-1zM790 613h2v3h-2zM792 619h2v2h-2zM802 631h3v2h-3zM794 635h2v2h-2zM798 659h2v2h-2zM804 603h2v2h-2zM796 649h2v3h-2zM797 596h1v2h-1zM799 624h1v2h-1zM805 565h2v2h-2zM800 582h3v1h-3zM791 636h2v1h-2zM798 588h2v2h-2zM791 640h2v2h-2zM798 585h3v1h-3zM800 597h2v2h-2zM795 604h3v2h-3zM802 655h2v2h-2zM803 636h2v1h-2zM788 649h1v3h-1zM804 573h2v2h-2zM794 651h2v2h-2zM793 602h3v2h-3zM802 569h2v2h-2zM793 592h1v2h-1zM805 659h1v1h-1zM803 602h2v3h-2zM799 597h3v2h-3zM794 607h2v1h-2zM804 561h2v2h-2zM798 599h2v3h-2zM799 637h2v1h-2zM785 649h1v2h-1zM799 623h2v2h-2zM799 661h3v2h-3zM794 643h3v2h-3zM796 656h1v2h-1zM784 648h1v2h-1zM788 655h2v1h-2zM794 645h1v2h-1zM798 639h3v2h-3zM793 585h2v1h-2zM791 659h2v2h-2zM800 588h1v2h-1zM797 608h1v1h-1zM787 654h2v2h-2zM802 592h1v1h-1zM797 659h3v3h-3zM789 641h1v3h-1zM801 640h3v2h-3zM796 635h1v2h-1zM802 562h1v2h-1zM795 612h2v2h-2zM800 659h3v2h-3zM803 600h1v3h-1zM803 638h2v2h-2zM797 584h2v2h-2zM796 581h1v2h-1zM796 607h1v2h-1zM792 615h1v3h-1zM796 575h3v1h-3zM796 610h3v1h-3zM798 594h3v2h-3zM796 652h2v2h-2zM804 578h2v1h-2zM797 611h3v1h-3zM797 622h1v2h-1zM804 625h2v1h-2zM801 568h2v3h-2zM803 635h3v2h-3zM805 611h2v3h-2zM805 633h2v2h-2zM803 565h2v2h-2zM792 601h1v2h-1zM795 647h2v2h-2zM799 630h2v2h-2zM799 580h2v2h-2zM798 577h1v2h-1zM801 576h1v2h-1zM805 595h3v1h-3zM802 589h2v2h-2zM802 603h3v3h-3zM799 604h2v2h-2zM789 647h1v1h-1zM796 655h2v2h-2zM801 626h2v1h-2zM795 589h3v1h-3zM794 587h2v2h-2zM794 624h2v3h-2zM805 582h2v3h-2zM793 636h3v2h-3zM794 607h1v2h-1zM800 600h2v3h-2zM804 558h1v2h-1zM800 577h2v1h-2zM803 660h2v2h-2zM793 590h1v2h-1zM803 583h3v1h-3zM800 608h2v3h-2zM797 577h3v1h-3zM798 658h3v2h-3zM798 566h3v2h-3zM799 655h3v2h-3zM802 560h2v3h-2zM793 655h1v2h-1zM798 613h2v3h-2zM792 622h1v2h-1zM792 604h1v3h-1zM794 618h2v3h-2zM805 615h3v2h-3zM799 631h2v3h-2zM795 660h2v1h-2zM799 572h2v1h-2zM799 592h3v2h-3zM787 652h3v2h-3zM796 570h2v2h-2zM802 641h1v2h-1zM802 597h1v3h-1zM799 594h2v2h-2zM793 643h2v2h-2zM790 649h2v2h-2zM797 646h1v1h-1zM795 613h3v2h-3zM793 583h3v1h-3zM804 579h2v3h-2zM797 622h2v1h-2zM803 654h2v2h-2zM794 655h2v3h-2zM795 624h2v1h-2zM794 642h2v3h-2zM796 617h2v1h-2zM790 607h1v3h-1zM795 621h2v1h-2zM797 610h3v1h-3zM800 608h2v2h-2zM804 603h2v2h-2zM793 595h2v2h-2zM795 577h3v1h-3zM801 618h2v1h-2zM789 647h2v3h-2zM793 613h1v1h-1zM796 635h2v2h-2zM792 625h2v3h-2zM802 633h1v1h-1zM799 618h3v2h-3zM795 615h1v2h-1zM802 610h1v3h-1zM799 635h2v2h-2zM786 652h2v1h-2zM798 660h1v2h-1zM797 622h1v1h-1zM801 566h2v2h-2zM800 631h2v3h-2zM800 628h3v3h-3zM791 651h2v2h-2zM804 638h2v1h-2zM791 618h3v2h-3zM803 569h1v2h-1zM800 618h2v1h-2zM798 641h2v2h-2zM803 652h2v2h-2zM796 600h1v3h-1zM795 604h2v2h-2zM802 616h3v2h-3zM804 587h2v1h-2zM805 623h2v1h-2zM803 621h3v1h-3zM797 628h3v2h-3zM797 599h2v1h-2zM799 590h3v3h-3zM805 604h3v2h-3zM802 579h2v2h-2zM799 648h2v3h-2zM793 647h2v2h-2zM802 650h3v2h-3zM793 658h3v2h-3zM804 640h2v1h-2zM802 626h1v3h-1zM797 648h3v3h-3zM792 623h2v2h-2zM805 609h3v1h-3zM800 580h1v2h-1zM798 569h2v2h-2zM796 635h2v3h-2zM796 614h2v3h-2zM789 651h1v2h-1zM799 649h2v3h-2zM796 644h1v3h-1zM802 576h3v2h-3zM802 571h1v1h-1zM804 617h3v2h-3zM805 609h2v1h-2zM800 565h2v1h-2zM798 580h2v3h-2zM803 575h2v1h-2zM801 628h2v3h-2zM803 587h1v2h-1zM797 576h1v3h-1zM801 595h1v2h-1zM798 602h3v1h-3zM796 621h1v2h-1zM797 606h3v1h-3zM797 570h2v1h-2zM795 635h3v2h-3zM798 590h2v2h-2zM791 648h1v2h-1zM799 592h2v2h-2zM792 619h3v3h-3zM797 615h1v2h-1zM803 631h2v2h-2zM795 654h2v2h-2zM805 579h2v2h-2zM795 579h3v2h-3zM787 659h3v1h-3zM802 625h2v2h-2zM793 594h2v3h-2zM803 645h3v1h-3zM791 656h1v1h-1zM804 637h3v2h-3zM797 618h2v1h-2zM797 605h2v2h-2zM799 574h1v3h-1zM795 587h2v2h-2zM802 615h1v1h-1zM804 605h2v1h-2zM804 634h1v1h-1zM789 641h3v2h-3zM805 564h1v1h-1zM792 613h2v2h-2zM801 607h3v2h-3zM790 641h2v2h-2zM800 619h2v2h-2zM801 611h2v2h-2zM798 660h1v2h-1zM801 635h2v1h-2zM802 575h2v3h-2zM798 624h2v2h-2zM793 600h2v3h-2zM796 618h2v2h-2zM805 589h1v1h-1zM794 633h2v3h-2zM798 579h2v3h-2zM802 619h3v3h-3zM790 606h1v1h-1zM804 589h2v2h-2zM795 575h3v2h-3zM796 639h3v3h-3zM801 571h2v1h-2zM797 610h2v3h-2zM805 634h2v3h-2zM798 652h2v2h-2zM790 640h2v3h-2zM800 629h2v3h-2zM797 567h2v2h-2zM802 563h2v3h-2zM796 653h3v2h-3zM796 614h2v2h-2zM788 649h2v2h-2zM796 626h3v3h-3zM804 653h2v2h-2zM804 619h2v1h-2zM805 640h2v2h-2zM800 578h2v1h-2zM794 637h2v2h-2zM792 612h2v2h-2zM792 597h2v2h-2zM796 637h1v1h-1zM790 652h2v1h-2zM797 621h3v2h-3zM795 656h3v1h-3zM788 657h2v2h-2zM798 652h2v2h-2zM801 639h2v3h-2z" fill="#000" shape-rendering="crispEdges"/>
<path d="M791 628h2v1h-2zM798 600h1v2h-1zM804 586h2v2h-2zM794 644h2v2h-2zM803 587h1v2h-1zM804 574h1v1h-1zM793 592h2v1h-2zM804 586h2v1h-2zM799 587h2v1h-2zM800 601h1v2h-1zM801 620h2v2h-2zM805 641h2v2h-2zM802 658h1v1h-1zM791 621h2v2h-2zM801 587h2v2h-2zM794 618h1v1h-1zM803 559h1v2h-1zM803 561h2v2h-2zM796 625h2v1h-2zM792 614h1v2h-1zM802 614h2v1h-2zM801 601h2v1h-2zM799 598h1v2h-1zM798 590h2v2h-2zM791 650h2v2h-2zM795 600h1v2h-1zM787 655h1v2h-1zM804 558h2v2h-2zM797 602h2v2h-2zM791 617h2v1h-2zM805 600h2v1h-2zM802 586h2v2h-2zM798 582h1v1h-1zM804 605h2v2h-2zM788 659h2v2h-2zM801 563h2v1h-2zM796 611h2v2h-2zM805 603h1v1h-1zM793 592h2v2h-2zM805 572h2v2h-2zM804 580h1v1h-1zM798 629h1v2h-1zM804 647h2v2h-2zM789 660h2v2h-2zM795 659h2v2h-2zM800 567h1v2h-1zM793 645h1v2h-1zM796 649h2v2h-2zM804 560h2v1h-2zM804 570h2v1h-2zM794 602h2v2h-2zM798 570h1v2h-1zM798 571h2v2h-2zM789 653h2v2h-2zM799 564h1v1h-1zM794 630h2v2h-2zM801 626h1v2h-1zM803 564h2v2h-2zM796 598h2v2h-2zM797 629h2v1h-2z" fill="#004466" shape-rendering="crispEdges"/>
<path d="M806.0 570.0 L803.0 576.0 L801.0 590.0 L800.0 610.0 L802.0 630.0 L801.0 648.0 L806.0 650.0Z" fill="#004466"/>
<path d="M797.4 645.7 L789.5 649.6 L785.5 655.5 L786.5 665.4 L784.5 671.3 L789.5 681.2 L791.4 687.0 L795.4 702.9 L789.5 710.8 L789.5 718.7 L784.5 722.6 L785.5 730.5" fill="none" stroke="#000" stroke-width="3.6" stroke-linejoin="round"/>
<path d="M797.4 645.7 L789.5 649.6 L785.5 655.5 L786.5 665.4 L784.5 671.3 L789.5 681.2 L791.4 687.0 L795.4 702.9 L789.5 710.8 L789.5 718.7 L784.5 722.6 L785.5 730.5" fill="none" stroke="#004466" stroke-width="1.6" stroke-linejoin="round"/>
<path d="M14.0 717.0 L22.0 714.0 L30.0 716.0 L35.0 720.0 L32.0 726.0 L24.0 729.0 L16.0 726.0Z" fill="#5d514d" stroke="#000" stroke-width="1"/>
<path d="M234.0 678.0 L244.0 683.0 L251.0 690.0 L254.0 700.0 L253.0 710.0 L249.0 719.0 L243.0 727.0 L236.0 733.0 M258.0 661.0 L270.0 661.0 L285.0 663.0 M236.0 664.0 L248.0 662.0 M520.0 718.0 L535.0 714.0 L552.0 707.0 L568.0 701.0 M582.0 693.0 L590.0 690.0" fill="none" stroke="#000" stroke-width="1.2"/>
<path d="M418.0 640.0 L424.0 637.0 L430.0 641.0 L440.0 641.0 L448.0 639.0 L454.0 644.0 L452.0 649.0 L440.0 648.0 L425.0 648.0 L418.0 646.0Z" fill="#004466" stroke="#000" stroke-width="1"/>
<path d="M474.0 655.0 L480.0 652.0 L486.0 658.0 L492.0 654.0 L496.0 653.0 L498.0 660.0 L503.0 665.0 L506.0 676.0 L508.0 683.0 L502.0 682.0 L496.0 672.0 L487.0 664.0 L478.0 662.0Z" fill="#004466" stroke="#000" stroke-width="1"/>
<path d="M299.0 59.0 L306.6 55.5 L314.6 57.4 L316.0 66.0 L323.3 71.6 L319.0 74.0 L319.6 78.3 L317.7 83.3 L323.9 91.9 L322.6 96.8 L314.6 84.5 L314.0 77.7 L310.3 68.5 L309.7 59.2 L307.2 58.6 L304.8 63.0 L299.9 61.7Z" fill="#2a4a6a" stroke="#1c3a56" stroke-width="1"/>
<path d="M368.0 260.0 L372.0 257.0 L378.0 259.0 L385.0 265.0 L392.0 269.0 L397.0 276.0 L394.0 278.0 L386.0 273.0 L378.0 268.0 L370.0 264.0Z" fill="#2a4a6a" stroke="#1c3a56" stroke-width="1"/>
<path d="M612.0 285.0 L616.0 291.0 L622.0 289.0 L627.0 296.0 L620.0 300.0 L614.0 306.0 L608.0 314.0 L603.0 311.0 L609.0 302.0 L611.0 294.0Z" fill="#2a4a6a" stroke="#1c3a56" stroke-width="1"/>
<path d="M445.0 363.0 L452.0 364.0 L449.0 372.0 L442.0 379.0 L439.0 377.0 L444.0 370.0Z" fill="#2a4a6a" stroke="#1c3a56" stroke-width="1"/>
<path d="M424.0 413.0 L427.0 418.0 L428.0 425.0 L431.0 431.0 L429.0 434.0 L425.0 428.0 L423.0 420.0Z" fill="#2a4a6a" stroke="#1c3a56" stroke-width="1"/>
<path d="M527.0 503.0 L531.0 508.0 L533.0 516.0 L531.0 525.0 L535.0 528.0 L532.0 533.0 L533.0 540.0 L530.0 538.0 L528.0 530.0 L526.0 520.0 L528.0 512.0Z" fill="#2a4a6a" stroke="#1c3a56" stroke-width="1"/>
<path d="M541.0 600.0 L546.0 603.0 L552.0 607.0 L560.0 605.0 L564.0 609.0 L555.0 612.0 L548.0 619.0 L543.0 616.0Z" fill="#2a4a6a" stroke="#1c3a56" stroke-width="1"/>
<path d="M122.0 659.0 L126.0 652.0 L133.0 653.0 L136.0 660.0 L132.0 668.0 L124.0 668.0Z" fill="#2a4a6a" stroke="#1c3a56" stroke-width="1"/>
<path d="M141.0 708.0 L146.0 698.0 L152.0 697.0 L155.0 704.0 L151.0 710.0 L147.0 714.0Z" fill="#2a4a6a" stroke="#1c3a56" stroke-width="1"/>
<path d="M42.5 681.0 L46.0 679.0 L51.0 685.0 L50.0 690.0 L45.0 688.0Z" fill="#2a4a6a" stroke="#1c3a56" stroke-width="1"/>
<path d="M59.0 686.0 L63.0 692.0 L68.0 700.0 L75.0 704.0 L84.0 706.0 L83.0 711.0 L72.0 710.0 L64.0 704.0 L60.0 696.0Z" fill="#2a4a6a" stroke="#1c3a56" stroke-width="1"/>
<path d="M785.0 730.0 L790.0 736.0 L796.0 744.0 L796.0 753.0 L791.0 755.0 L786.0 747.0 L784.0 738.0Z" fill="#2a4a6a" stroke="#1c3a56" stroke-width="1"/>
<path d="M181.0 6.0 L191.4 18.0 L199.0 38.8 L200.4 64.6 L200.4 90.5 L196.5 98.3 L186.2 113.8 L183.6 134.5 L175.8 150.0 L165.5 168.0 L155.2 186.2 L147.0 204.0 L147.0 212.0 L150.0 221.0 M238.8 6.5 L228.4 15.5 L226.0 31.0 L224.6 47.8 L223.0 59.5 L210.0 67.0 L200.0 70.0 M241.0 6.0 L254.0 21.0 L262.0 34.0 L265.0 52.0 L278.0 60.0 L291.0 61.0 L303.0 56.0 L314.0 54.0 L329.0 63.0 L345.0 72.0 L360.0 88.0 L376.0 103.0 L391.0 116.0 L404.0 127.0 M472.0 6.0 L470.0 25.0 L468.0 40.0 L455.0 55.0 L435.0 60.0 L428.0 75.0 L420.0 95.0 L412.0 110.0 L406.0 125.0 M588.8 6.0 L586.0 26.0 L596.5 38.8 L604.0 51.7 L601.7 77.6 L604.3 95.7 L591.4 111.2 L601.7 126.7 L609.0 134.0 L615.0 147.0 L618.0 147.0 L639.0 150.0 L657.0 143.0 M404.0 134.0 L436.0 132.0 L485.0 137.0 L519.0 137.0 L534.5 147.4 L552.6 159.0 L581.0 160.0 L594.0 157.7 L610.0 155.0 L618.0 147.0 M804.0 72.0 L742.0 96.0 L711.0 114.0 L670.0 134.0 L657.0 143.0 M659.0 143.0 L672.0 160.0 L685.0 176.0 L693.0 189.0 L719.0 191.0 L755.0 181.0 L804.0 173.0 M716.0 191.0 L721.0 200.0 L729.0 208.0 L745.0 215.5 L758.0 231.0 L763.0 252.0 L771.0 280.0 M585.0 340.0 L600.0 332.0 L632.0 314.0 L665.0 296.0 L695.0 279.0 L724.0 262.0 L760.0 241.0 L790.0 229.0 L805.0 223.0 M740.0 254.0 L770.0 278.0 L786.0 295.0 L802.0 309.0 M585.0 350.0 L600.0 352.6 L632.0 360.0 L665.0 368.0 L705.0 371.0 L745.0 373.0 L760.0 368.0 L785.0 352.0 L807.0 340.0 M585.0 360.0 L600.0 378.0 L610.0 410.0 L626.0 421.0 L634.0 439.0 L631.0 446.0 L628.0 470.0 L628.0 498.0 L636.0 524.0 L646.5 545.0 L652.0 565.5 L659.5 607.0 L675.0 628.0 L698.0 652.0 L711.0 664.6 L721.5 693.0 L739.6 724.0 L747.4 750.0 L755.0 791.0 M634.0 431.0 L646.5 439.0 L667.0 454.0 L711.0 466.0 L755.0 472.0 L802.0 488.0 M806.0 530.0 L802.0 563.0 L787.0 591.0 L785.0 618.0 L787.0 642.0 L779.0 646.0 L777.5 658.0 L785.0 668.0 L796.0 670.0 L804.0 690.0 M410.0 620.7 L444.0 617.0 L477.6 615.5 L514.0 617.0 L545.0 626.0 L581.0 640.0 L610.0 639.0 L651.7 644.0 L703.0 659.5 L734.5 662.0 L781.0 655.6 L806.0 653.0 M6.0 661.0 L15.5 659.5 L67.0 642.7 L85.0 646.5 L89.0 653.7 L96.0 662.8 L114.0 672.0 L132.5 674.3 L141.6 678.8 L160.0 685.7 L173.6 678.8 L187.3 660.6 L189.6 646.9 L205.6 649.0 L242.0 643.4 L284.3 639.8 L295.4 636.6 L304.9 627.0 L312.8 622.4 L322.3 624.8 L338.0 625.6 L360.2 632.7 L369.7 638.2 L382.4 635.0 L398.2 624.0 L410.0 620.7 M86.8 644.6 L98.0 641.0 L130.0 640.0 L148.5 640.0 L173.6 650.3 L189.6 656.0 M6.0 612.0 L11.6 620.7 L13.0 639.0 L11.4 660.6 M150.0 221.0 L165.0 236.0 L171.0 278.0 L173.0 316.0 L178.0 345.0 L184.0 381.0 L176.0 410.0 L170.0 420.0 L163.0 426.0 L155.0 467.0 L140.0 498.0 L132.0 529.0 L129.0 565.5 L127.0 610.0 L127.0 623.0 L129.0 641.0 L136.0 658.0 L132.5 674.3 M6.0 257.0 L52.0 254.0 L85.0 244.0 L124.0 228.0 L155.0 223.0 L168.0 226.0 L191.0 210.0 L200.0 202.0 L226.0 186.0 L251.7 175.8 L277.6 168.0 L308.6 160.3 L329.3 155.0 L355.0 147.4 L381.0 142.2 L396.5 137.0 L404.0 134.0 M404.0 134.0 L398.0 150.0 L398.0 210.0 L396.5 277.6 L399.0 329.0 L400.0 355.0 L402.0 376.0 L408.0 400.0 L420.7 433.6 L439.0 472.0 L423.0 508.6 L400.0 545.0 L386.0 560.0 L350.0 586.0 L320.0 602.0 L308.0 608.0 L305.0 627.0 M6.0 461.0 L52.0 465.0 L98.0 476.0 L137.0 474.0 L152.6 480.0 L207.0 475.0 L257.0 475.0 L262.0 474.0 L285.0 465.0 L298.0 452.0 L329.0 415.5 L345.0 404.0 L365.5 400.0 L385.0 392.0 L402.0 376.0 L439.0 363.0 L509.0 358.0 L545.0 352.6 L578.0 347.0 L585.0 345.0 M503.0 241.0 L467.0 316.0 L426.0 350.0 L408.0 368.0 M257.0 475.0 L246.5 501.0 L236.0 519.0 L218.0 547.0 L213.0 576.0 L202.6 610.0 L198.0 630.0 L191.0 654.0 M404.0 134.0 L425.0 160.0 L445.0 185.0 L462.0 200.0 L485.0 234.0 L505.0 239.0 L521.5 239.0 M615.0 147.0 L600.0 165.0 L580.0 182.0 L560.0 200.0 L545.0 220.0 L521.5 239.0 M521.5 239.0 L539.6 267.0 L539.6 288.0 L552.6 303.4 L555.0 313.8 L568.0 321.5 L581.0 344.8 M439.0 472.0 L465.0 470.0 L508.6 449.0 L524.0 428.0 L547.0 400.0 L560.0 380.0 L575.0 360.0 L585.0 345.0 M584.0 293.0 L571.0 324.0 L581.0 340.0" fill="none" stroke="#8a7622" stroke-width="1.1" stroke-linejoin="round"/>
<ellipse cx="168" cy="226" rx="8" ry="5" fill="none" stroke="#8a7622" stroke-width="1.1"/>
<ellipse cx="396" cy="137" rx="18" ry="16" fill="none" stroke="#8a7622" stroke-width="1.1"/>
<ellipse cx="585" cy="350" rx="11" ry="16" fill="none" stroke="#8a7622" stroke-width="1.1"/>
<path d="M6.0 105.0 L155.0 105.0 L156.0 111.0 L161.6 115.0 L160.3 124.0 L152.6 132.0 L144.8 139.6 L137.8 149.2 L186.0 149.2 M6.0 415.5 L77.6 415.5 M202.0 105.0 L312.0 105.0 L310.0 88.5 L325.0 90.0 L325.5 92.0 L410.0 90.5 L520.0 93.0 L610.0 96.0 L636.0 96.0 L805.0 97.0 M636.0 96.0 L636.8 95.6 L638.4 94.7 L640.9 93.4 L644.1 91.6 L648.2 89.9 L653.2 88.1 L659.1 86.4 L665.9 84.6 L671.4 82.8 L675.6 80.9 L678.6 79.0 L680.4 77.0 L682.6 74.8 L685.2 72.4 L688.2 69.9 L691.8 67.1 L695.0 64.2 L698.0 61.1 L700.8 57.8 L703.2 54.2 L707.2 50.7 L712.6 47.1 L719.4 43.4 L727.6 39.6 L734.8 36.0 L740.8 32.5 L745.6 29.1 L749.4 25.9 L752.7 22.9 L755.6 20.3 L758.0 18.0 L760.0 16.0 L760.7 14.2 L760.1 12.6 L758.1 11.1 L754.9 9.9 L752.1 8.8 L749.9 7.9 L748.1 7.2 L746.9 6.8 L745.9 6.4 L745.3 6.1 L745.0 6.0 M763.0 13.0 L763.2 13.6 L763.5 14.9 L763.9 16.8 L764.6 19.2 L766.0 22.1 L768.2 25.3 L771.3 28.9 L775.2 32.9 L778.6 36.0 L781.5 38.3 L783.9 39.8 L785.9 40.4 L788.4 40.4 L791.5 39.8 L795.1 38.5 L799.3 36.5 L802.5 35.1 L804.6 34.1 L805.6 33.6 M787.0 95.0 L786.9 95.6 L786.6 96.9 L786.2 98.8 L785.8 101.2 L785.1 103.9 L784.4 106.8 L783.5 109.9 L782.5 113.1 L780.6 116.4 L777.9 119.8 L774.2 123.2 L769.8 126.8 L765.9 129.9 L762.6 132.6 L760.0 135.0 L758.0 137.0 L755.2 138.4 L751.6 139.1 L747.1 139.2 L741.9 138.8 L737.0 139.1 L732.5 140.4 L728.4 142.5 L724.6 145.5 L721.5 147.3 L719.0 147.9 L717.1 147.4 L715.9 145.6 L713.8 145.1 L710.9 145.7 L707.2 147.5 L702.8 150.5 L698.9 153.6 L695.6 156.7 L693.0 159.9 L691.0 163.1 L687.2 166.7 L681.8 170.6 L674.5 174.8 L665.5 179.2 L656.9 182.9 L648.8 185.8 L641.1 187.9 L633.9 189.1 L627.6 190.9 L622.4 193.1 L618.1 195.9 L614.9 199.1 L612.4 201.9 L610.6 204.3 L609.6 206.2 L609.4 207.8 L608.6 209.1 L607.2 210.4 L605.2 211.5 L602.8 212.5 L600.3 213.5 L597.9 214.5 L595.6 215.5 L593.4 216.5 L591.6 218.6 L590.4 221.7 L589.6 225.9 L589.4 231.1 L589.2 235.1 L589.1 237.7 L589.0 239.0 M145.0 238.0 L300.0 238.0 L492.0 239.0 L589.0 239.0 L600.0 239.0 L679.0 238.0 M679.0 238.0 L703.0 231.0 L734.0 221.0 L745.0 220.0 L805.6 223.0 M679.0 238.0 L678.5 238.5 L677.5 239.5 L676.0 241.0 L674.0 243.0 L671.9 245.0 L669.8 247.0 L667.6 249.0 L665.4 251.0 L663.6 253.2 L662.4 255.6 L661.6 258.1 L661.4 260.9 L661.9 263.5 L663.1 266.0 L665.1 268.4 L667.9 270.6 L670.8 272.9 L673.8 275.3 L676.9 277.8 L680.1 280.2 L683.2 282.1 L686.2 283.4 L689.1 284.0 L691.9 284.0 L694.2 284.8 L696.2 286.2 L697.9 288.5 L699.1 291.5 L700.4 294.6 L701.6 297.7 L702.9 300.9 L704.1 304.1 L705.4 307.1 L706.8 309.9 L708.2 312.4 L709.8 314.6 L711.3 317.0 L712.9 319.5 L714.6 322.1 L716.4 324.9 L718.4 327.5 L720.6 330.0 L723.1 332.4 L725.9 334.6 L728.9 337.1 L732.1 339.7 L735.6 342.5 L739.4 345.5 L742.8 348.4 L745.9 351.1 L748.8 353.8 L751.2 356.2 L753.8 359.1 L756.3 362.4 L758.9 366.0 L761.6 370.0 L763.9 373.9 L765.9 377.8 L767.6 381.6 L768.9 385.4 L770.5 388.8 L772.2 391.9 L774.0 394.8 L776.0 397.2 L778.1 399.7 L780.4 402.1 L782.8 404.4 L785.2 406.6 L787.6 408.5 L789.8 410.0 L791.8 411.1 L793.7 411.9 L795.4 413.6 L797.0 416.2 L798.4 419.8 L799.8 424.2 L800.9 428.1 L801.8 431.4 L802.6 434.0 L803.1 436.0 L803.7 437.9 L804.2 439.6 L804.8 441.2 L805.2 442.8 L805.6 443.9 L805.9 444.6 L806.0 445.0 M300.0 238.0 L306.0 246.5 L307.0 249.0 L305.0 265.0 L303.0 283.0 L300.0 315.0 L298.0 345.0 L294.0 380.0 L290.5 410.0 L285.0 465.0 L279.0 511.0 L281.0 560.0 L283.0 610.0 L284.3 630.0 L285.0 648.0 M492.0 239.0 L498.0 275.0 L505.0 315.0 L511.0 352.6 L519.0 400.0 L526.7 431.0 L533.0 450.0 L539.6 467.0 L537.0 475.0 L545.0 483.0 L533.0 493.0 L534.0 511.0 L532.0 537.0 L534.5 547.0 L529.0 576.0 L540.0 599.0 L542.0 610.0 L547.0 619.4 M343.5 594.0 L540.0 594.0 M343.5 594.0 L340.0 604.0 L343.5 612.0 L350.7 617.7 L358.6 625.6 L357.0 633.5 L360.2 644.5 M547.0 619.4 L610.0 623.0 L700.0 628.0 L740.0 632.4 L746.0 650.0 L757.7 651.0 L759.7 634.0 L757.7 612.7 L767.6 609.7 L779.4 615.7 L786.0 618.0 M44.0 594.0 L186.0 594.0 L183.0 610.0 L178.4 626.0 L185.0 640.0 L191.0 652.0 L196.5 667.0" fill="none" stroke="#000" stroke-width="1.15" stroke-linejoin="round"/>
<path d="M182.0 153.7 L182.4 153.8 L184.0 153.4 L186.0 152.9 L187.9 152.8 L189.2 153.3 L190.1 154.1 L191.0 154.9 L192.3 155.4 L193.4 160.2 L192.9 161.9 L191.9 162.9 L190.1 163.0 L187.9 161.9 L185.8 160.4 L184.2 159.0 L183.7 158.7 L184.2 159.8 L185.2 162.1 L186.0 164.9 L186.1 167.2 L185.1 168.6 L184.5 167.4 L182.2 167.9 L180.2 168.3 L178.7 168.7 L177.9 169.4 L177.2 170.2 L176.1 170.7 L174.6 170.9 L173.2 170.9 L172.4 171.1 L172.9 171.9 L175.0 173.5 L176.6 176.3 L177.5 179.0 L177.0 181.0 L174.8 181.7 L171.9 181.3 L169.2 180.6 L167.6 180.2 L167.4 180.6 L168.2 181.9 L169.1 183.6 L169.5 185.1 L169.3 186.3 L168.8 187.3 L168.6 188.5 L168.8 190.1 L169.1 192.1 L168.9 194.0 L167.6 195.1 L165.1 195.1 L162.0 194.1 L159.3 192.9 L157.9 192.2 L158.2 192.7 L159.0 194.6 L160.9 196.4 L162.2 198.4 L162.2 200.0 L161.0 201.2 L159.2 202.0 L157.5 202.6 L156.4 203.3 L155.7 204.1 L155.0 205.1 L153.7 205.7 L152.0 205.9 L150.1 209.1 L149.7 209.6 L150.7 209.9 L153.1 210.1 L156.4 210.5 L159.4 211.4 L161.1 212.9 L161.0 214.7 L159.5 216.6 L157.3 218.2 L155.6 219.4 L155.0 220.1 L155.6 220.5 L156.8 220.9 L158.0 221.5 L158.9 223.3 L158.3 223.9 L157.7 224.5 L157.3 225.5 L157.3 227.1 L157.2 229.1 L156.8 230.9 L155.4 231.9 L153.2 231.6 L150.4 230.2 L147.7 228.3 L145.9 226.8 L145.2 226.4 L145.6 227.3 L146.5 229.3 L147.3 231.6 L147.3 233.6 L146.5 233.2 L146.2 234.7 L145.5 236.1 L145.1 237.4 L145.2 238.6 L145.5 239.7 L145.6 240.9 L145.0 242.1 L143.7 243.2 L142.3 244.1 L141.5 244.6 L142.2 244.8 L144.5 245.0 L148.6 247.8 L147.7 251.0 L146.3 253.0 L144.5 253.4 L142.7 252.1 L141.1 250.1 L139.9 248.1 L139.0 247.1 L138.4 247.1 L137.8 247.7 L137.2 248.4 L136.3 248.6 L135.5 248.4 L134.7 248.2 L133.9 248.7 L133.3 248.4 L134.7 250.0 L135.6 251.9 L135.4 253.7 L133.5 254.9 L130.3 255.4 L126.9 255.5 L124.3 255.3 L123.5 255.3 L124.4 255.9 L126.3 257.1 L128.2 258.6 L129.3 260.2 L129.4 261.7 L128.7 262.9 L128.1 264.1 L127.8 265.3 L128.0 266.6 L128.1 267.9 L127.6 269.1 L126.2 270.0 L124.2 270.4 L122.5 270.6 L121.9 270.8 L123.0 271.4 L125.4 272.5 L128.4 274.2 L130.6 276.2 L131.3 278.1 L130.3 279.6 L128.1 280.7 L125.6 281.4 L123.7 281.9 L122.8 282.5 L122.7 283.2 L122.6 284.0 L122.2 284.8 L121.5 285.4 L120.7 286.0 L120.5 286.7 L121.3 287.7 L123.2 290.0 L123.1 292.4 L122.3 294.2 L120.5 294.8 L118.1 293.9 L115.5 292.0 L113.3 289.9 L112.1 288.8 L111.9 289.0 L112.3 290.5 L112.9 292.8 L113.1 295.0 L112.7 296.6 L111.8 297.5 L110.7 298.2 L110.0 298.8 L109.6 300.2 L109.3 301.8 L108.5 303.0 L107.1 303.5 L105.0 303.0 L102.8 302.0 L101.3 301.0 L101.0 301.1 L101.8 302.4 L103.3 304.9 L104.5 307.8 L104.8 310.2 L103.7 311.6 L101.6 311.8 L99.9 310.7 L97.7 311.0 L96.2 311.4 L95.4 312.0 L95.0 312.7 L94.3 313.4 L93.3 313.8 L92.1 314.1 L91.4 314.5 L91.8 315.3 L93.1 316.8 L95.0 318.8 L96.3 321.0 L96.4 322.9 L94.8 324.2 L92.0 324.7 L89.0 324.6 L86.8 324.4 L86.1 324.5 L86.8 325.3 L88.3 326.5 L89.9 328.0 L90.7 329.5 L90.8 330.8 L90.5 331.9 L90.3 333.1 L90.5 334.5 L91.0 336.1 L91.1 337.7 L90.4 339.0 L88.5 339.6 L85.9 339.6 L83.2 339.1 L81.8 338.2 L81.5 338.3 L82.6 339.4 L84.3 341.4 L85.8 343.8 L86.3 345.8 L85.4 347.2 L83.5 347.8 L81.3 347.9 L79.3 348.0 L78.0 348.3 L77.1 348.8 L76.5 349.5 L75.5 350.0 L74.3 350.1 L73.0 350.0 L72.2 350.1 L72.3 350.8 L72.1 354.7 L75.0 354.7 L78.1 355.1 L80.1 356.2 L80.5 358.0 L79.3 360.1 L77.3 362.2 L75.5 363.7 L74.8 364.5 L75.4 364.8 L76.9 364.8 L78.7 364.9 L80.1 365.4 L80.9 366.2 L81.4 367.1 L82.1 368.0 L83.4 368.7 L85.0 369.5 L86.4 370.6 L86.8 372.1 L85.9 374.0 L83.8 376.1 L80.6 376.8 L78.4 376.8 L77.8 376.9 L78.9 377.4 L81.1 378.4 L83.3 379.9 L84.7 381.5 L84.6 383.0 L83.4 384.4 L81.9 385.5 L80.5 386.5 L79.8 387.5 L79.6 388.5 L79.3 389.5 L78.5 390.3 L77.2 391.0 L75.9 391.4 L75.3 391.8 L76.0 392.3 L78.2 393.3 L81.1 394.8 L83.6 396.7 L84.9 398.6 L84.5 400.4 L82.4 401.7 L79.8 402.5 L77.6 403.0 L76.5 403.4 L76.7 403.9 L77.6 404.7 L78.5 405.6 L78.9 406.5 L78.9 407.4 L78.8 408.4 L79.3 409.5 L80.4 410.7 L81.7 412.1 L82.5 413.8 L81.8 415.5 L80.0 415.8 L77.7 418.2 L75.3 420.1 L73.7 421.2 L73.8 421.4 L75.3 421.1 L77.8 420.7 L80.3 420.7 L82.0 421.4 L82.7 422.7 L82.7 424.3 L82.5 425.8 L82.6 427.1 L83.2 428.0 L83.9 429.0 L84.2 430.1 L83.7 431.4 L82.2 431.4 L80.9 431.8 L80.5 432.1 L81.7 432.6 L84.2 433.5 L87.3 434.9 L89.8 436.6 L90.9 438.4 L90.2 440.1 L88.1 441.4 L85.6 442.4 L83.5 443.1 L82.6 443.6 L82.6 444.2 L83.1 444.9 L83.5 445.7 L83.3 446.6 L82.9 447.4 L82.6 448.2 L83.0 449.0 L84.1 450.2 L84.7 449.9 L86.6 450.4 L87.6 451.8 L87.3 454.0 L85.9 456.7 L83.9 459.3 L82.3 461.1 L81.9 461.7 L82.8 461.4 L84.9 460.5 L87.3 459.8 L89.4 459.7 L90.8 460.3 L91.5 461.5 L92.0 462.7 L92.7 463.7 L93.7 464.5 L94.8 465.1 L95.6 466.1 L95.8 467.4 L95.1 469.1 L94.1 470.7 L93.4 471.8 L93.7 471.9 L95.4 471.2 L100.0 471.6 L101.7 474.3 L102.3 476.8 L101.4 478.3 L99.2 478.8 L96.5 478.6 L94.1 478.1 L92.5 478.0 L91.7 478.3 L91.4 479.0 L91.0 479.7 L90.2 480.1 L89.2 480.4 L88.4 480.8 L88.4 481.7 L89.1 483.3 L90.1 485.6 L90.5 487.8 L89.7 489.5 L87.6 490.1 L84.6 489.6 L81.6 488.6 L79.6 487.8 L79.1 487.8 L79.9 488.9 L81.2 490.8 L82.6 492.7 L83.3 494.5 L83.1 496.0 L82.5 497.0 L81.9 498.1 L81.6 499.4 L81.6 500.9 L81.3 502.3 L80.3 503.3 L78.4 503.5 L76.1 503.1 L74.0 502.5 L73.0 502.2 L73.4 502.8 L75.0 504.5 L77.0 506.8 L78.3 509.2 L78.2 511.2 L76.7 512.2 L74.3 512.5 L71.7 512.4 L69.7 512.3 L68.5 512.5 L67.9 513.1 L67.4 513.8 L66.6 514.2 L65.5 514.4 L64.5 514.6 L64.2 515.2 L64.8 516.4 L66.2 518.4 L67.6 520.9 L68.3 522.8 L67.6 524.5 L65.4 525.3 L62.4 525.3 L59.6 525.0 L58.2 524.8 L58.2 525.2 L59.5 526.4 L61.1 527.9 L62.3 529.6 L62.7 531.0 L62.4 532.2 L62.0 533.3 L61.9 534.6 L62.2 536.2 L62.3 537.8 L61.7 539.2 L60.0 539.9 L57.3 539.9 L54.5 539.4 L52.5 538.9 L52.1 539.0 L53.3 540.0 L55.4 541.7 L57.2 543.9 L58.0 545.1 L57.5 546.7 L55.9 547.9 L53.7 548.8 L51.9 549.5 L50.8 550.2 L50.3 551.0 L50.0 551.9 L49.4 552.6 L48.4 553.2 L47.3 553.6 L46.8 554.1 L47.4 554.8 L49.2 555.9 L51.7 557.6 L53.9 559.7 L54.9 561.7 L54.2 563.3 L52.0 564.4 L49.2 565.0 L46.9 565.2 L46.2 563.8 L46.3 564.5 L47.0 565.9 L47.7 567.7 L47.8 569.1 L47.3 570.2 L46.6 571.0 L46.0 569.7 L47.2 570.6 L48.7 571.6 L49.7 572.9 L49.5 574.7 L47.8 576.7 L45.2 578.6 L42.7 580.1 L41.4 580.8 L42.0 580.9 L44.2 580.7 L47.1 580.7 L49.4 581.4 L50.6 582.7 L50.4 584.5 L49.1 586.6 L47.4 587.0 L46.3 587.6 L45.7 588.5 L45.1 589.4 L44.2 590.0 L42.8 590.1 L41.5 590.1 L41.0 590.3 L44.0 594.0 M201.8 5.0 L201.9 5.6 L202.0 6.7 L202.1 8.4 L202.4 10.6 L202.9 12.9 L203.6 15.1 L204.7 17.3 L206.0 19.5 L206.9 21.7 L207.5 23.8 L207.6 25.8 L207.4 27.8 L206.9 29.5 L206.1 30.8 L205.0 31.8 L203.8 32.4 L203.1 33.5 L203.0 34.9 L203.4 36.7 L204.6 38.9 L205.8 41.2 L207.1 43.6 L208.5 46.1 L210.1 48.8 L211.6 51.1 L213.2 53.0 L214.7 54.7 L216.2 56.0 L217.8 57.0 L219.5 57.7 L221.2 58.0 L222.9 58.0 L224.6 58.4 L226.3 59.3 L227.9 60.6 L229.4 62.4 L230.3 64.2 L230.5 66.2 L230.1 68.3 L228.9 70.5 L228.2 72.6 L227.9 74.6 L227.9 76.4 L228.4 78.2 L228.5 79.8 L228.3 81.3 L227.7 82.8 L226.9 84.1 L226.3 85.4 L226.1 86.7 L226.2 88.0 L226.7 89.4 L226.5 90.8 L225.9 92.4 L224.7 94.0 L222.9 95.8 L221.1 96.8 L219.1 97.0 L217.0 96.4 L214.8 95.0 L212.9 94.4 L211.4 94.7 L210.2 95.6 L209.3 97.4 L208.4 99.0 L207.6 100.6 L206.7 102.0 L205.8 103.4 L204.8 104.8 L203.7 106.3 L202.4 107.9 L201.1 109.5 L199.8 111.3 L198.8 113.1 L197.9 115.0 L197.1 117.0 L196.3 119.0 L195.4 121.0 L194.5 123.0 L193.5 125.0 L192.9 127.2 L192.6 129.7 L192.8 132.4 L193.2 135.2 L193.1 138.1 L192.4 140.8 L191.1 143.5 L189.1 146.1 L187.7 148.1 L186.7 149.3 L186.2 150.0 M304.7 5.0 L305.0 5.7 L305.5 7.0 L306.3 9.1 L307.4 11.8 L307.8 13.9 L307.6 15.6 L306.8 16.8 L305.2 17.5 L302.9 18.3 L299.7 19.1 L295.7 20.1 L290.9 21.2 L286.8 22.5 L283.5 24.2 L280.9 26.1 L279.2 28.3 L278.2 30.6 L277.9 33.0 L278.5 35.6 L279.8 38.2 L280.7 40.9 L281.1 43.5 L281.1 46.1 L280.7 48.8 L280.0 50.8 L279.1 52.4 L278.0 53.4 L276.8 53.8 L275.2 53.7 L273.5 53.1 L271.5 51.9 L269.3 50.1 L267.0 48.6 L264.6 47.3 L262.0 46.2 L259.4 45.3 L256.7 44.4 L254.1 43.4 L251.5 42.3 L248.9 41.2 L246.4 40.5 L244.0 40.1 L241.6 40.2 L239.4 40.6 L237.1 41.7 L234.9 43.3 L232.7 45.6 L230.6 48.4 L228.7 50.9 L227.2 53.0 L226.0 54.7 L225.1 56.0 L224.1 57.1 L223.0 58.0 L221.8 58.7 L220.5 59.1 L219.5 59.5 L218.8 59.7 L218.5 59.8" fill="none" stroke="#000" stroke-width="1.15" stroke-linejoin="round"/>
<g fill="none" stroke="#d4d4d4" stroke-width="1">
<circle cx="406" cy="406" r="160"/><circle cx="406" cy="406" r="280"/><circle cx="406" cy="406" r="400"/><circle cx="406" cy="406" r="519"/></g>
<circle cx="406" cy="406" r="40" fill="none" stroke="#ff1010" stroke-width="1.3"/>
<g stroke="#ff7000" stroke-width="1" fill="none"><circle cx="641.4" cy="604.8" r="4"/><path d="M638.9 604.8H643.9M641.4 602.3V607.3"/></g>
<g stroke="#ffb020" stroke-width="1" fill="none"><circle cx="642.9" cy="603.3" r="4"/><path d="M640.4 603.3H645.4M642.9 600.8V605.8"/></g>
<g stroke="#ffa000" stroke-width="1" fill="none"><circle cx="648.8" cy="605.5" r="4"/><path d="M646.3 605.5H651.3M648.8 603.0V608.0"/></g>
<g stroke="#ff6a00" stroke-width="1" fill="none"><circle cx="664.3" cy="609.6" r="4"/><path d="M661.8 609.6H666.8M664.3 607.1V612.1"/></g>
<g stroke="#ffa000" stroke-width="1" fill="none"><circle cx="630.3" cy="616.2" r="4"/><path d="M627.8 616.2H632.8"/></g>
<g stroke="#ff6000" stroke-width="1" fill="none"><circle cx="639.6" cy="616.6" r="4"/><path d="M637.1 616.6H642.1M639.6 614.1V619.1"/></g>
<g stroke="#ff6000" stroke-width="1" fill="none"><circle cx="637.0" cy="621.0" r="4"/><path d="M634.5 621.0H639.5M637.0 618.5V623.5"/></g>
<g stroke="#ff6000" stroke-width="1" fill="none"><circle cx="644.4" cy="620.3" r="4"/><path d="M641.9 620.3H646.9M644.4 617.8V622.8"/></g>
<g stroke="#ff6000" stroke-width="1" fill="none"><circle cx="641.4" cy="621.8" r="4"/><path d="M638.9 621.8H643.9"/></g>
<g stroke="#ffa000" stroke-width="1" fill="none"><circle cx="636.2" cy="629.5" r="4"/><path d="M633.7 629.5H638.7M636.2 627.0V632.0"/></g>
<g stroke="#ffa000" stroke-width="1" fill="none"><circle cx="621.5" cy="634.3" r="4"/><path d="M619.0 634.3H624.0M621.5 631.8V636.8"/></g>
<g stroke="#ff6000" stroke-width="1" fill="none"><circle cx="672.4" cy="632.5" r="4"/><path d="M669.9 632.5H674.9"/></g>
<g stroke="#ffb020" stroke-width="1" fill="none"><circle cx="663.6" cy="637.3" r="4"/><path d="M661.1 637.3H666.1M663.6 634.8V639.8"/></g>
<g stroke="#ff6000" stroke-width="1" fill="none"><circle cx="668.7" cy="641.7" r="4"/><path d="M666.2 641.7H671.2M668.7 639.2V644.2"/></g>
<g stroke="#ff6000" stroke-width="1" fill="none"><circle cx="670.2" cy="644.7" r="4"/><path d="M667.7 644.7H672.7"/></g>
<g stroke="#ffc020" stroke-width="1" fill="none"><circle cx="678.3" cy="642.4" r="4"/><path d="M675.8 642.4H680.8M678.3 639.9V644.9"/></g>
<g stroke="#ff6000" stroke-width="1" fill="none"><circle cx="689.4" cy="634.3" r="4"/><path d="M686.9 634.3H691.9M689.4 631.8V636.8"/></g>
<g stroke="#f09000" stroke-width="1" fill="none"><circle cx="661.5" cy="550.5" r="4"/><path d="M659.0 550.5H664.0M661.5 548.0V553.0"/></g>
<g stroke="#f09000" stroke-width="1" fill="none"><circle cx="653.4" cy="568.5" r="4"/><path d="M650.9 568.5H655.9M653.4 566.0V571.0"/></g>
<g stroke="#f09000" stroke-width="1" fill="none"><circle cx="657.5" cy="587.4" r="4"/><path d="M655.0 587.4H660.0M657.5 584.9V589.9"/></g>
<g stroke="#f09000" stroke-width="1" fill="none"><circle cx="710.2" cy="592.5" r="4"/><path d="M707.7 592.5H712.7M710.2 590.0V595.0"/></g>
<g stroke="#f09000" stroke-width="1" fill="none"><circle cx="714.4" cy="592.5" r="4"/><path d="M711.9 592.5H716.9"/></g>
<g stroke="#ff7000" stroke-width="1" fill="none"><circle cx="721.5" cy="617.6" r="4"/><path d="M719.0 617.6H724.0M721.5 615.1V620.1"/></g>
<g stroke="#ffa000" stroke-width="1" fill="none"><circle cx="628.5" cy="652.4" r="4"/><path d="M626.0 652.4H631.0"/></g>
<g stroke="#ff6a00" stroke-width="1" fill="none"><circle cx="659.0" cy="665.3" r="4"/><path d="M656.5 665.3H661.5M659.0 662.8V667.8"/></g>
<g stroke="#ff6a00" stroke-width="1" fill="none"><circle cx="663.3" cy="665.3" r="4"/><path d="M660.8 665.3H665.8"/></g>
<g stroke="#ffa000" stroke-width="1" fill="none"><circle cx="635.4" cy="674.4" r="4"/><path d="M632.9 674.4H637.9"/></g>
<g stroke="#ffa000" stroke-width="1" fill="none"><circle cx="652.4" cy="678.5" r="4"/><path d="M649.9 678.5H654.9M652.4 676.0V681.0"/></g>
<g stroke="#ff6000" stroke-width="1" fill="none"><circle cx="644.5" cy="685.6" r="4"/><path d="M642.0 685.6H647.0"/></g>
<g stroke="#ffdd00" stroke-width="1" fill="none"><circle cx="692.5" cy="691.5" r="4"/><path d="M690.0 691.5H695.0M692.5 689.0V694.0"/></g>
<g stroke="#f09000" stroke-width="1" fill="none"><circle cx="557.3" cy="717.3" r="4"/><path d="M554.8 717.3H559.8M557.3 714.8V719.8"/></g>
<g stroke="#f07000" stroke-width="1" fill="none"><circle cx="585.4" cy="715.4" r="4"/><path d="M582.9 715.4H587.9M585.4 712.9V717.9"/></g>
<g stroke="#f09000" stroke-width="1" fill="none"><circle cx="616.5" cy="732.4" r="4"/><path d="M614.0 732.4H619.0"/></g>
<g stroke="#f09000" stroke-width="1" fill="none"><circle cx="549.4" cy="742.3" r="4"/><path d="M546.9 742.3H551.9M549.4 739.8V744.8"/></g>
<g stroke="#f09000" stroke-width="1" fill="none"><circle cx="648.5" cy="745.4" r="4"/><path d="M646.0 745.4H651.0M648.5 742.9V747.9"/></g>
<g stroke="#ffee00" stroke-width="1" fill="none"><circle cx="674.2" cy="743.2" r="4"/><path d="M671.7 743.2H676.7M674.2 740.7V745.7"/></g>
<g stroke="#f09000" stroke-width="1" fill="none"><circle cx="652.5" cy="774.4" r="4"/><path d="M650.0 774.4H655.0M652.5 771.9V776.9"/></g>
<g stroke="#ff9000" stroke-width="1" fill="none"><circle cx="778.4" cy="302.0" r="4"/><path d="M775.9 302.0H780.9M778.4 299.5V304.5"/></g>
<g stroke="#ff9000" stroke-width="1" fill="none"><circle cx="799.0" cy="302.0" r="4"/><path d="M796.5 302.0H801.5"/></g>
<path d="M588 695.5H593" stroke="#f09000" stroke-width="1"/>
<rect x="394.0" y="5" width="24" height="3" fill="#5d514d"/>
<rect x="394.0" y="125" width="24" height="3" fill="#5d514d"/>
<rect x="394.0" y="245" width="24" height="3" fill="#5d514d"/>
<rect x="397.5" y="365" width="17" height="3" fill="#5d514d"/>
<text x="406.5" y="11" text-anchor="middle" font-family="Liberation Sans" font-weight="bold" font-size="10" letter-spacing="1.1" fill="#f4eca0">313</text>
<text x="406.5" y="131" text-anchor="middle" font-family="Liberation Sans" font-weight="bold" font-size="10" letter-spacing="1.1" fill="#f4eca0">219</text>
<text x="406.5" y="251" text-anchor="middle" font-family="Liberation Sans" font-weight="bold" font-size="10" letter-spacing="1.1" fill="#f4eca0">125</text>
<text x="406.5" y="371" text-anchor="middle" font-family="Liberation Sans" font-weight="bold" font-size="10" letter-spacing="1.1" fill="#f4eca0">31</text>
</svg>
<!-- LEGEND -->
<div class="a" style="left:9px;top:759px;width:244px;height:44px;background:#000;border:1px solid #a09a96"></div>
<div class="a lg" style="left:13px;top:762px;color:#d8d8e0">Symbols</div>
<div class="a lg" style="left:52px;top:762px;color:#d8d8e0">-CG</div>
<div class="a lg" style="left:78px;top:762px;color:#d8d8e0">-IC</div>
<div class="a lg" style="left:99px;top:762px;color:#d8d8e0">+CG</div>
<div class="a lg" style="left:125px;top:762px;color:#d8d8e0">+IC</div>
<div class="a lg" style="left:153px;top:762px;color:#d8d8e0">Strike age color codes</div>
<div class="a lg" style="left:13px;top:775px;color:#d8d8e0">Recent</div>
<div class="a lg" style="left:13px;top:788px;color:#d8d8e0">Old</div>
<div class="a lg" style="left:153px;top:775px;color:#e0d000">15+</div>
<div class="a lg" style="left:188px;top:775px;color:#e8a800">30+</div>
<div class="a lg" style="left:223px;top:775px;color:#e89000">45+</div>
<div class="a lg" style="left:153px;top:788px;color:#e88000">60+</div>
<div class="a lg" style="left:188px;top:788px;color:#e86818">75+</div>
<div class="a lg" style="left:223px;top:788px;color:#f04010">90+</div>
<svg class="a" style="left:0;top:740px" width="260" height="72" viewBox="0 740 260 72">
<g fill="none" stroke-width="1">
<g stroke="#00e0e8"><circle cx="60.5" cy="780.5" r="4.2"/><path d="M58 780.5H63M82 780.5H89M108 780.5H113M110.5 778V783M131.5 780.5H140M135.7 776V785"/><circle cx="110.5" cy="780.5" r="4.2"/></g>
<g stroke="#f0f000"><circle cx="60.5" cy="793.5" r="4.2"/><path d="M58 793.5H63M82 793.5H89M108 793.5H113M110.5 791V796M131.5 793.5H140M135.7 789V798"/><circle cx="110.5" cy="793.5" r="4.2"/></g>
</g></svg>
<div class="a" style="left:685px;top:792px;width:121px;height:14px;background:#000"></div>
<div class="a" style="left:688px;top:792px;font-size:9.5px;line-height:12px;color:#f0f0f0">©2005 Astrogenic Systems</div>

<!-- Panel 1 -->
<div class="panel" style="top:8px;height:320px"></div>
<div class="btn" style="left:819px;top:16px;width:58px;background:#5c0000;letter-spacing:1.1px">STRIKE</div>
<div class="btn" style="left:883px;top:16px;width:58px;background:#353535;letter-spacing:1.2px;color:#ccd0d8">NOISE</div>
<div class="btn" style="left:994px;top:16px;width:129px;background:#353535;text-align:left;color:#fff"><span class="a" style="left:4px;letter-spacing:1.2px">Bng 67°</span><span class="a grn" style="left:81px;letter-spacing:2px">359mi</span></div>

<div class="hdr" style="left:821px;letter-spacing:0.6px">Strikes/min</div>
<div class="hdr" style="left:931px;letter-spacing:0.6px">Close/min</div>
<div class="hdr" style="left:1041px;letter-spacing:0.45px">Noises/min</div>
<div class="big" style="left:884px">0</div>
<div class="big" style="left:994px">0</div>
<div class="big" style="left:1104px;color:#c4c4c4">0</div>
<div class="tl" style="left:793px;letter-spacing:0.35px">Total Strikes</div>
<div class="tl" style="left:903px;letter-spacing:0.37px">Total Close</div>
<div class="tl g" style="left:1013px;letter-spacing:0.34px">Total Noises</div>
<div class="tv" style="left:820px;letter-spacing:0.5px">124</div>
<div class="tv" style="left:930px">0</div>
<div class="tv" style="left:1040px;letter-spacing:0.5px">20</div>

<div class="lb g" style="left:821px;top:203px;letter-spacing:0.7px">Lightning type distribution</div>
<div class="a" style="left:821px;top:217px;width:303px;height:1px;background:#a0a0a0"></div>
<div class="lb w b" style="left:821px;top:224px;letter-spacing:-0.15px">Cloud-ground</div>
<div class="lb w b" style="left:912px;top:224px">+</div>
<div class="bar" style="left:925px;top:227px"><i style="width:33px;background:#f00000"></i></div>
<div class="lb w b" style="left:979px;top:224px;letter-spacing:0.3px">67%</div>
<div class="a" style="left:1016px;top:232px;width:7px;height:2px;background:#e8e8e8"></div>
<div class="bar" style="left:1028px;top:227px"><i style="width:15px;background:#90c8f8"></i></div>
<div class="lb w b" style="left:1083px;top:224px;letter-spacing:0.3px">29%</div>
<div class="lb g b" style="left:821px;top:249px">Count</div>
<div class="lb w b" style="left:925px;top:249px;letter-spacing:0.3px">83</div>
<div class="lb w b" style="left:1028px;top:249px;letter-spacing:0.3px">36</div>
<div class="lb w b" style="left:821px;top:279px">Intracloud</div>
<div class="lb w b" style="left:912px;top:279px">+</div>
<div class="bar" style="left:925px;top:281px"><i style="width:2px;background:#ff70b0"></i></div>
<div class="lb w b" style="left:979px;top:279px;letter-spacing:0.3px">2%</div>
<div class="a" style="left:1016px;top:286px;width:7px;height:2px;background:#e8e8e8"></div>
<div class="bar" style="left:1028px;top:281px"><i style="width:2px;background:#00e000"></i></div>
<div class="lb w b" style="left:1083px;top:279px;letter-spacing:0.3px">2%</div>
<div class="lb g b" style="left:821px;top:303px">Count</div>
<div class="lb w b" style="left:925px;top:303px">3</div>
<div class="lb w b" style="left:1028px;top:303px">2</div>

<!-- Panel 2 -->
<div class="panel" style="top:333px;height:114px"></div>
<div class="lb grn b" style="left:821px;top:338px;font-size:17px;line-height:20px;letter-spacing:1.8px">3/1/2026 3:45:19 AM</div>
<div class="a" style="left:821px;top:358px;width:302px;height:1px;background:#a0a0a0"></div>
<div class="lb w" style="left:821px;top:376px;letter-spacing:0.28px">Squelch</div>
<div class="lb w" style="left:909px;top:376px">0</div>
<div class="lb w" style="left:981px;top:376px;letter-spacing:0.7px">Upload</div>
<div class="lb g" style="left:1060px;top:376px;letter-spacing:0.62px">Disabled</div>
<div class="lb w" style="left:821px;top:396px;letter-spacing:0.56px">Persistence</div>
<div class="lb w" style="left:909px;top:396px;letter-spacing:0.38px">90 min</div>
<div class="lb w" style="left:981px;top:396px;letter-spacing:0.73px">Capture</div>
<div class="lb grn" style="left:1061px;top:396px;letter-spacing:0.27px">Active</div>
<div class="lb w" style="left:820px;top:416px;letter-spacing:0.63px">Range</div>
<div class="lb w" style="left:909px;top:416px;letter-spacing:0.29px">313 mi</div>
<div class="lb w" style="left:980px;top:416px;letter-spacing:0.23px">Receiver</div>
<div class="lb grn" style="left:1060px;top:416px;letter-spacing:0.75px">Enabled</div>

<!-- Panel 3 -->
<div class="panel" style="top:454px;height:349px"></div>
<div class="lb g" style="left:820px;top:463px;letter-spacing:0.75px">Uptime</div>
<div class="lb w" style="left:909px;top:463px;letter-spacing:0.82px">1143:30</div>
<div class="lb g" style="left:980px;top:463px;letter-spacing:0.62px">Peak time</div>
<div class="lb g" style="left:1060px;top:463px;letter-spacing:0.74px">Plot</div>
<div class="lb g" style="left:820px;top:487px;letter-spacing:0.74px">Peak rate</div>
<div class="lb w" style="left:909px;top:487px;letter-spacing:0.56px">6/min</div>
<div class="lb w" style="left:980px;top:487px;letter-spacing:0.52px">2:24 AM</div>
<div class="lb w" style="left:1061px;top:487px;letter-spacing:0.48px">Strike</div>
<div class="lb g" style="left:822px;top:515px;letter-spacing:0.55px">Trend graph</div>
<div class="lb w" style="left:908px;top:515px;letter-spacing:0.48px">60 min</div>

<svg class="a" style="left:812px;top:530px" width="320" height="272" viewBox="812 530 320 272">
<g stroke="#d8d8d8" stroke-width="1" fill="none" shape-rendering="crispEdges">
<path d="M1088.5 542V777.5H822"/>
<path d="M1084 542.5H1088M1084 581.5H1088M1084 620.5H1088M1084 659.5H1088M1084 699.5H1088M1084 738.5H1088"/>
<path d="M866.5 777V781M911.5 777V781M955.5 777V781M999.5 777V781M1044.5 777V781"/>
</g>
<g stroke="#f0f0f0" stroke-width="1" fill="none">
<path d="M822.5 777V762M822.5 777L825 769.5H828L830 777"/>
<path d="M841.5 777L843.5 769.5H846.5L848.5 777"/>
<path d="M849.5 777L851.5 769.5H853L855 761.5H858L860.5 769.5H867L869 777"/>
<path d="M874.5 777L876.5 769.5H879.5L881.5 777L883.5 769.5H886.5L888.5 777"/>
<path d="M932 777L934 769.5H937L939 777"/>
<path d="M1010.5 777L1012.5 769.5H1015.5L1017.5 777"/>
<path d="M1024.5 777L1026.5 769.5H1029.5L1031.5 777"/>
<path d="M1039 777L1041 769.5H1044L1046 777"/>
<path d="M1048 777L1050 769.5H1054L1056 777"/>
<path d="M1073 777L1075 769.5H1078L1080 777"/>
</g>
<path d="M852 777L854 769.5H857L859 777" stroke="#60b0f0" stroke-width="1" fill="none"/>
<g fill="#d0d0d0" font-family="Liberation Sans" font-size="11">
<text x="1092" y="547">30</text><text x="1092" y="625">20</text><text x="1092" y="704">10</text>
<text x="821" y="793">60</text><text x="865" y="793">50</text><text x="910" y="793">40</text><text x="954" y="793">30</text><text x="998" y="793">20</text><text x="1043" y="793">10</text><text x="1088" y="793">0</text><text x="1100" y="793">min</text>
</g>
</svg>

</body></html>
